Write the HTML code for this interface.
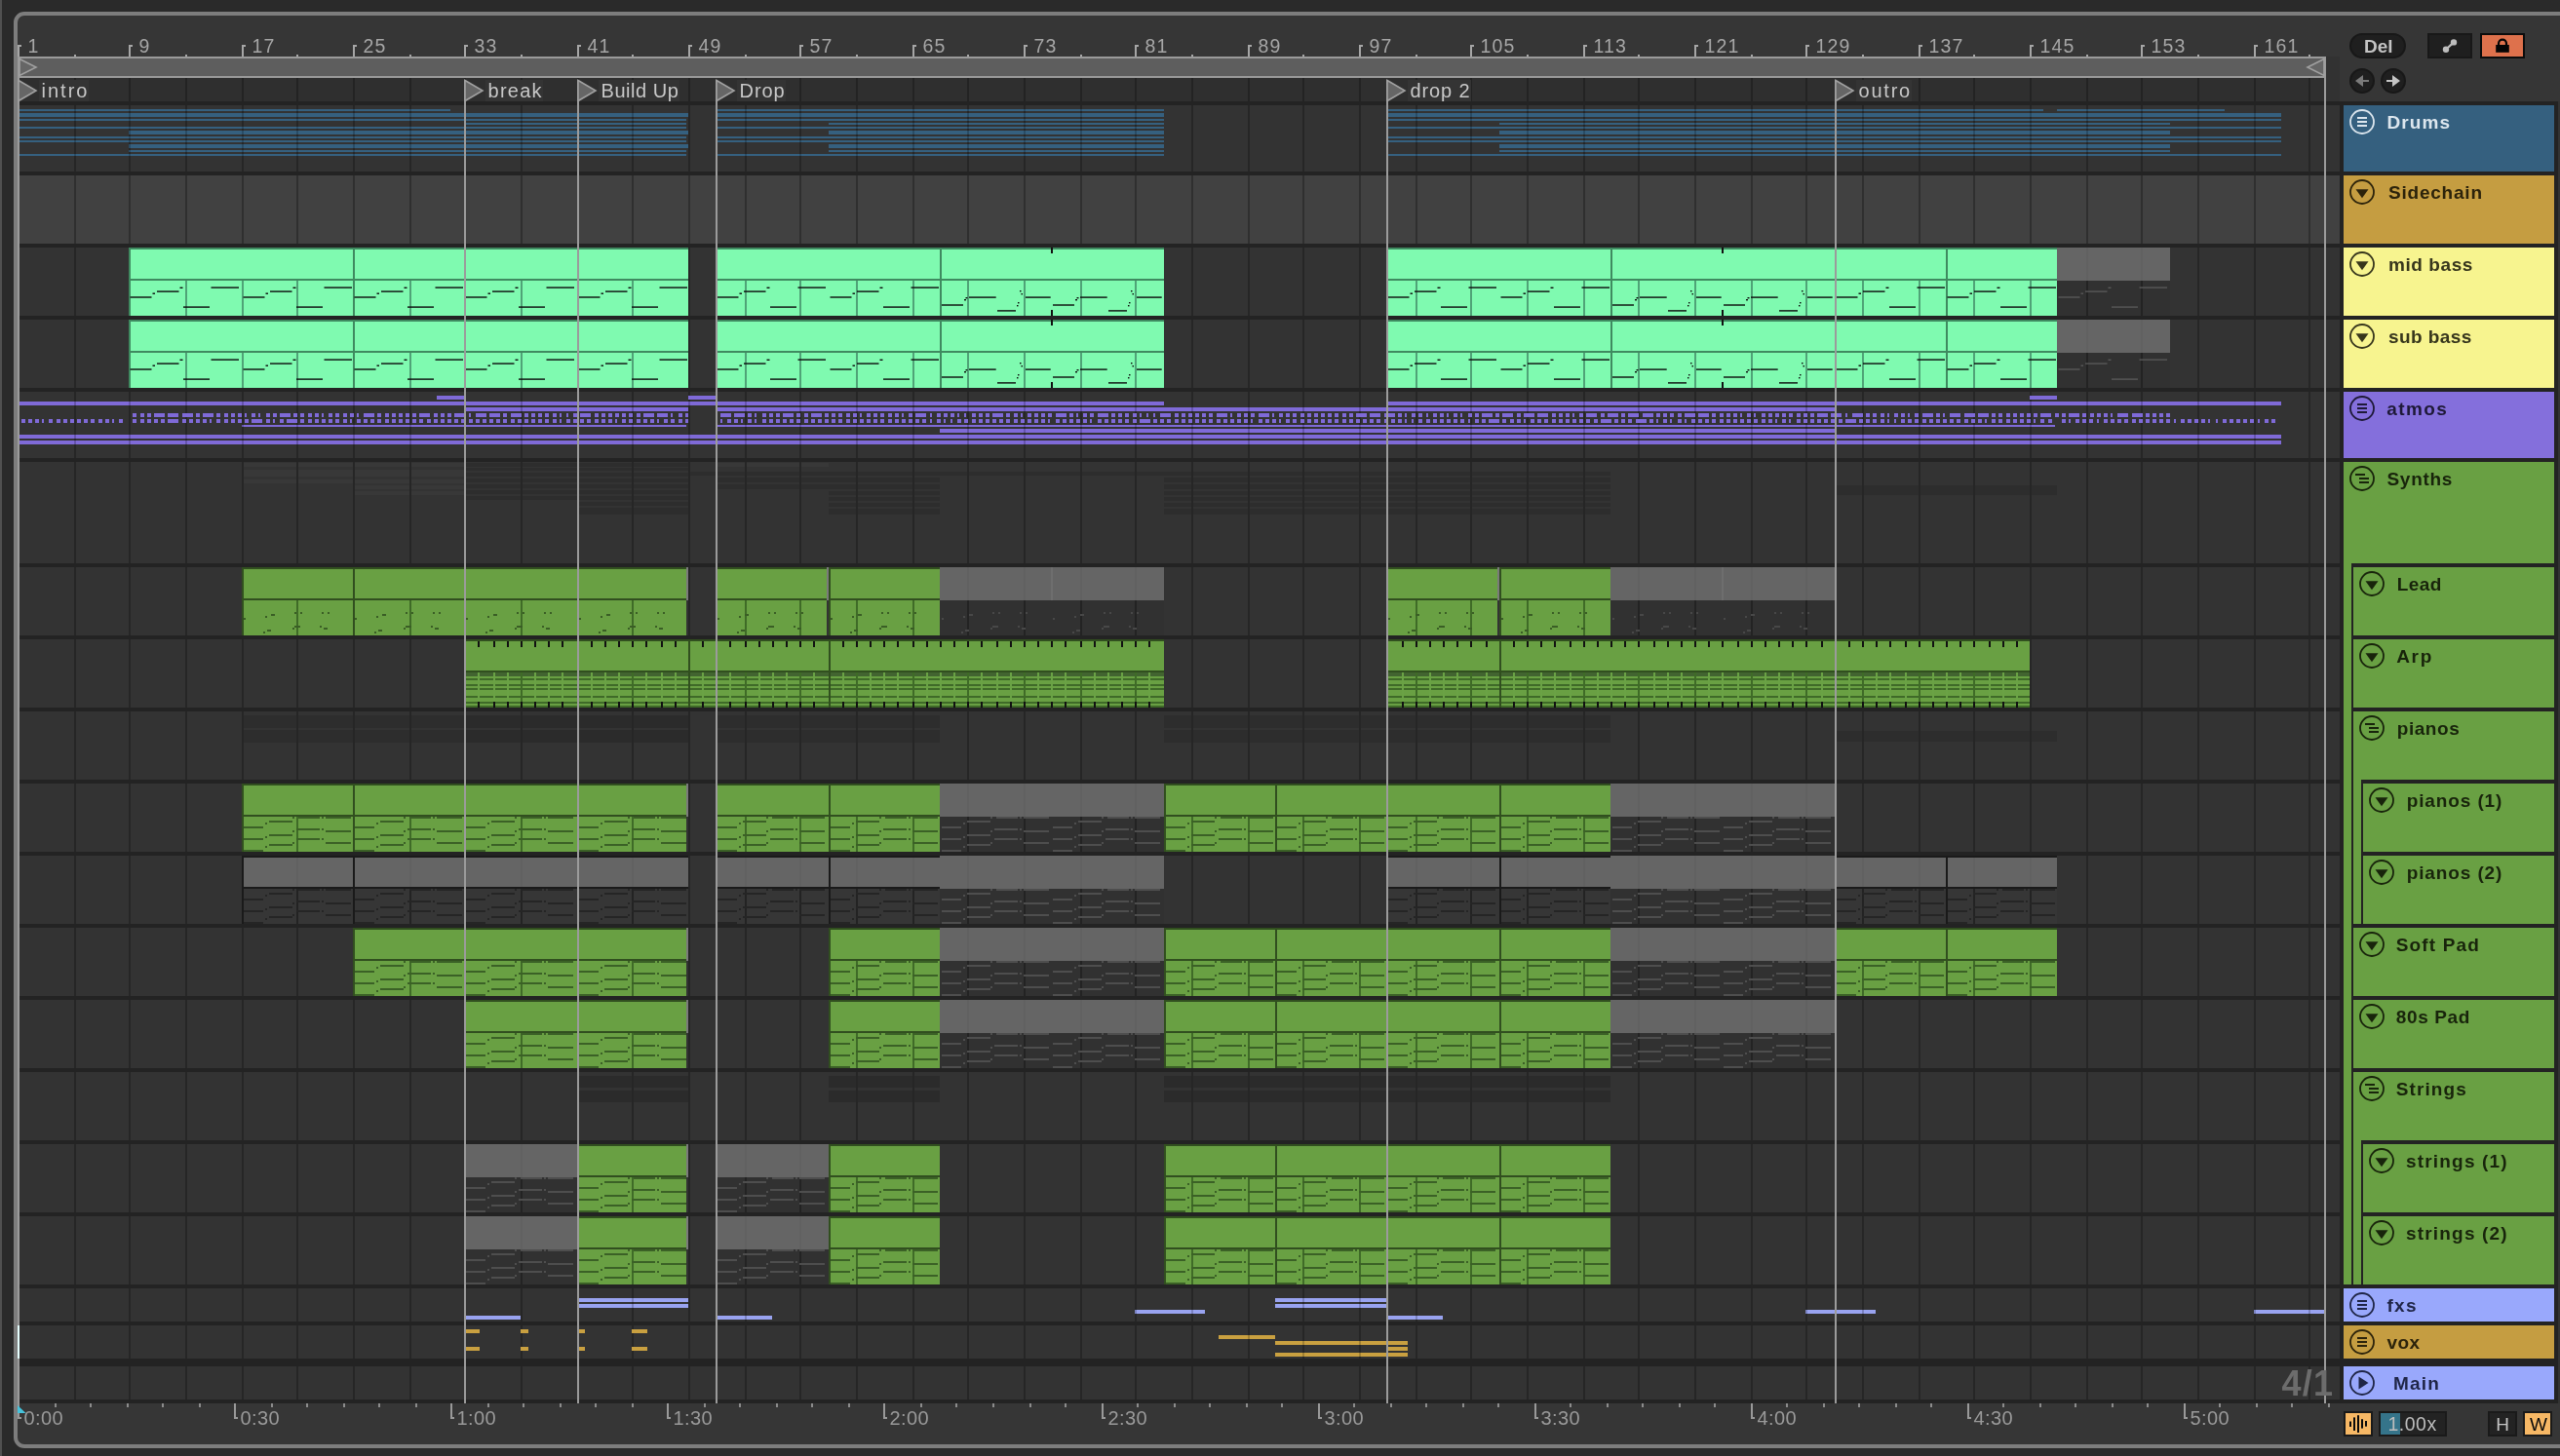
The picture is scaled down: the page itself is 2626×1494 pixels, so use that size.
<!DOCTYPE html>
<html><head><meta charset="utf-8"><title>Arrangement</title>
<style>
html,body{margin:0;padding:0;background:#2a2a2a}
body{width:2626px;height:1494px;overflow:hidden;position:relative;font-family:"Liberation Sans",sans-serif}
svg{position:absolute;left:0;top:0;display:block}
text{font-family:"Liberation Sans",sans-serif}
</style></head><body>
<svg width="2626" height="1494" viewBox="0 0 2626 1494" shape-rendering="crispEdges">
<defs><filter id="nf" x="0" y="0" width="2626" height="1494" filterUnits="userSpaceOnUse" color-interpolation-filters="sRGB"><feOffset dx="0" dy="0"/></filter></defs>
<path fill="#2a2a2a" d="M0 0h2626v1494h-2626z"/>
<path fill="#505050" d="M0 0h2v1494h-2z"/>
<rect x="16" y="14" width="2640" height="1470" rx="9" ry="9" fill="#363636" stroke="#7d7d7d" stroke-width="4" shape-rendering="geometricPrecision"/>
<path fill="#2f2f2f" d="M20 80h2380v24h-2380z"/>
<path fill="#323232" d="M2386 58h14v46h-14z"/>
<path fill="#232323" d="M20 104h2604v1336h-2604z"/>
<path fill="#333333" d="M2624 104h2v1336h-2zM20 108h2380v68h-2380z"/>
<path fill="#414141" d="M20 180h2380v70h-2380z"/>
<path fill="#333333" d="M20 254h2380v70h-2380zM20 328h2380v70h-2380zM20 402h2380v68h-2380zM20 474h2380v104h-2380zM20 582h2380v70h-2380zM20 656h2380v70h-2380zM20 730h2380v70h-2380zM20 804h2380v70h-2380zM20 878h2380v70h-2380zM20 952h2380v70h-2380zM20 1026h2380v70h-2380zM20 1100h2380v70h-2380zM20 1174h2380v70h-2380zM20 1248h2380v70h-2380zM20 1322h2380v34h-2380zM20 1360h2380v34h-2380zM20 1402h2380v34h-2380z"/>
<path fill="#383838" d="M248 475h228v4h-228zM248 482h228v7h-228zM248 492h228v4h-228zM362 498h114v4h-114zM362 504h114v4h-114z"/>
<path fill="#2d2d2d" d="M476 475h230v4h-230zM476 480h230v3h-230zM476 485h230v4h-230zM476 491h230v4h-230zM476 497h230v4h-230zM476 503h230v4h-230zM476 509h230v4h-230zM592 515h114v4h-114zM592 521h114v7h-114zM706 484h488v4h-488z"/>
<path fill="#383838" d="M734 475h116v4h-116z"/>
<path fill="#2d2d2d" d="M734 490h230v5h-230zM734 497h230v5h-230zM850 504h114v4h-114zM850 510h114v4h-114zM850 516h114v4h-114zM850 522h114v6h-114zM1194 484h458v4h-458zM1194 490h458v5h-458zM1194 497h458v5h-458zM1194 504h458v4h-458zM1194 510h458v4h-458zM1194 516h458v4h-458zM1194 522h458v6h-458zM1882 498h228v10h-228zM248 734h458v28h-458z"/>
<path fill="#333333" d="M248 747h458v2h-458z"/>
<path fill="#2d2d2d" d="M734 734h230v28h-230z"/>
<path fill="#333333" d="M734 747h230v2h-230z"/>
<path fill="#2d2d2d" d="M1194 734h458v28h-458z"/>
<path fill="#333333" d="M1194 747h458v2h-458z"/>
<path fill="#2b2b2b" d="M476 734h230v13h-230zM476 749h230v13h-230z"/>
<path fill="#2d2d2d" d="M1882 750h228v11h-228z"/>
<path fill="#2b2b2b" d="M592 1104h114v27h-114z"/>
<path fill="#333333" d="M592 1116h114v3h-114z"/>
<path fill="#2b2b2b" d="M850 1104h114v27h-114z"/>
<path fill="#333333" d="M850 1116h114v3h-114z"/>
<path fill="#2b2b2b" d="M1194 1104h458v27h-458z"/>
<path fill="#333333" d="M1194 1116h458v3h-458z"/>
<path fill="#232323" d="M76 80h2v24h-2z"/>
<path fill="#262626" d="M76 108h2v68h-2z"/>
<path fill="#2f2f2f" d="M76 180h2v70h-2z"/>
<path fill="#262626" d="M76 254h2v70h-2zM76 328h2v70h-2zM76 402h2v68h-2zM76 474h2v104h-2zM76 582h2v70h-2zM76 656h2v70h-2zM76 730h2v70h-2zM76 804h2v70h-2zM76 878h2v70h-2zM76 952h2v70h-2zM76 1026h2v70h-2zM76 1100h2v70h-2zM76 1174h2v70h-2zM76 1248h2v70h-2zM76 1322h2v34h-2zM76 1360h2v34h-2zM76 1402h2v34h-2z"/>
<path fill="#232323" d="M132 80h2v24h-2z"/>
<path fill="#262626" d="M132 108h2v68h-2z"/>
<path fill="#2f2f2f" d="M132 180h2v70h-2z"/>
<path fill="#262626" d="M132 254h2v70h-2zM132 328h2v70h-2zM132 402h2v68h-2zM132 474h2v104h-2zM132 582h2v70h-2zM132 656h2v70h-2zM132 730h2v70h-2zM132 804h2v70h-2zM132 878h2v70h-2zM132 952h2v70h-2zM132 1026h2v70h-2zM132 1100h2v70h-2zM132 1174h2v70h-2zM132 1248h2v70h-2zM132 1322h2v34h-2zM132 1360h2v34h-2zM132 1402h2v34h-2z"/>
<path fill="#232323" d="M190 80h2v24h-2z"/>
<path fill="#262626" d="M190 108h2v68h-2z"/>
<path fill="#2f2f2f" d="M190 180h2v70h-2z"/>
<path fill="#262626" d="M190 254h2v70h-2zM190 328h2v70h-2zM190 402h2v68h-2zM190 474h2v104h-2zM190 582h2v70h-2zM190 656h2v70h-2zM190 730h2v70h-2zM190 804h2v70h-2zM190 878h2v70h-2zM190 952h2v70h-2zM190 1026h2v70h-2zM190 1100h2v70h-2zM190 1174h2v70h-2zM190 1248h2v70h-2zM190 1322h2v34h-2zM190 1360h2v34h-2zM190 1402h2v34h-2z"/>
<path fill="#232323" d="M248 80h2v24h-2z"/>
<path fill="#262626" d="M248 108h2v68h-2z"/>
<path fill="#2f2f2f" d="M248 180h2v70h-2z"/>
<path fill="#262626" d="M248 254h2v70h-2zM248 328h2v70h-2zM248 402h2v68h-2zM248 474h2v104h-2zM248 582h2v70h-2zM248 656h2v70h-2zM248 730h2v70h-2zM248 804h2v70h-2zM248 878h2v70h-2zM248 952h2v70h-2zM248 1026h2v70h-2zM248 1100h2v70h-2zM248 1174h2v70h-2zM248 1248h2v70h-2zM248 1322h2v34h-2zM248 1360h2v34h-2zM248 1402h2v34h-2z"/>
<path fill="#232323" d="M304 80h2v24h-2z"/>
<path fill="#262626" d="M304 108h2v68h-2z"/>
<path fill="#2f2f2f" d="M304 180h2v70h-2z"/>
<path fill="#262626" d="M304 254h2v70h-2zM304 328h2v70h-2zM304 402h2v68h-2zM304 474h2v104h-2zM304 582h2v70h-2zM304 656h2v70h-2zM304 730h2v70h-2zM304 804h2v70h-2zM304 878h2v70h-2zM304 952h2v70h-2zM304 1026h2v70h-2zM304 1100h2v70h-2zM304 1174h2v70h-2zM304 1248h2v70h-2zM304 1322h2v34h-2zM304 1360h2v34h-2zM304 1402h2v34h-2z"/>
<path fill="#232323" d="M362 80h2v24h-2z"/>
<path fill="#262626" d="M362 108h2v68h-2z"/>
<path fill="#2f2f2f" d="M362 180h2v70h-2z"/>
<path fill="#262626" d="M362 254h2v70h-2zM362 328h2v70h-2zM362 402h2v68h-2zM362 474h2v104h-2zM362 582h2v70h-2zM362 656h2v70h-2zM362 730h2v70h-2zM362 804h2v70h-2zM362 878h2v70h-2zM362 952h2v70h-2zM362 1026h2v70h-2zM362 1100h2v70h-2zM362 1174h2v70h-2zM362 1248h2v70h-2zM362 1322h2v34h-2zM362 1360h2v34h-2zM362 1402h2v34h-2z"/>
<path fill="#232323" d="M420 80h2v24h-2z"/>
<path fill="#262626" d="M420 108h2v68h-2z"/>
<path fill="#2f2f2f" d="M420 180h2v70h-2z"/>
<path fill="#262626" d="M420 254h2v70h-2zM420 328h2v70h-2zM420 402h2v68h-2zM420 474h2v104h-2zM420 582h2v70h-2zM420 656h2v70h-2zM420 730h2v70h-2zM420 804h2v70h-2zM420 878h2v70h-2zM420 952h2v70h-2zM420 1026h2v70h-2zM420 1100h2v70h-2zM420 1174h2v70h-2zM420 1248h2v70h-2zM420 1322h2v34h-2zM420 1360h2v34h-2zM420 1402h2v34h-2z"/>
<path fill="#232323" d="M476 80h2v24h-2z"/>
<path fill="#262626" d="M476 108h2v68h-2z"/>
<path fill="#2f2f2f" d="M476 180h2v70h-2z"/>
<path fill="#262626" d="M476 254h2v70h-2zM476 328h2v70h-2zM476 402h2v68h-2zM476 474h2v104h-2zM476 582h2v70h-2zM476 656h2v70h-2zM476 730h2v70h-2zM476 804h2v70h-2zM476 878h2v70h-2zM476 952h2v70h-2zM476 1026h2v70h-2zM476 1100h2v70h-2zM476 1174h2v70h-2zM476 1248h2v70h-2zM476 1322h2v34h-2zM476 1360h2v34h-2zM476 1402h2v34h-2z"/>
<path fill="#232323" d="M534 80h2v24h-2z"/>
<path fill="#262626" d="M534 108h2v68h-2z"/>
<path fill="#2f2f2f" d="M534 180h2v70h-2z"/>
<path fill="#262626" d="M534 254h2v70h-2zM534 328h2v70h-2zM534 402h2v68h-2zM534 474h2v104h-2zM534 582h2v70h-2zM534 656h2v70h-2zM534 730h2v70h-2zM534 804h2v70h-2zM534 878h2v70h-2zM534 952h2v70h-2zM534 1026h2v70h-2zM534 1100h2v70h-2zM534 1174h2v70h-2zM534 1248h2v70h-2zM534 1322h2v34h-2zM534 1360h2v34h-2zM534 1402h2v34h-2z"/>
<path fill="#232323" d="M592 80h2v24h-2z"/>
<path fill="#262626" d="M592 108h2v68h-2z"/>
<path fill="#2f2f2f" d="M592 180h2v70h-2z"/>
<path fill="#262626" d="M592 254h2v70h-2zM592 328h2v70h-2zM592 402h2v68h-2zM592 474h2v104h-2zM592 582h2v70h-2zM592 656h2v70h-2zM592 730h2v70h-2zM592 804h2v70h-2zM592 878h2v70h-2zM592 952h2v70h-2zM592 1026h2v70h-2zM592 1100h2v70h-2zM592 1174h2v70h-2zM592 1248h2v70h-2zM592 1322h2v34h-2zM592 1360h2v34h-2zM592 1402h2v34h-2z"/>
<path fill="#232323" d="M648 80h2v24h-2z"/>
<path fill="#262626" d="M648 108h2v68h-2z"/>
<path fill="#2f2f2f" d="M648 180h2v70h-2z"/>
<path fill="#262626" d="M648 254h2v70h-2zM648 328h2v70h-2zM648 402h2v68h-2zM648 474h2v104h-2zM648 582h2v70h-2zM648 656h2v70h-2zM648 730h2v70h-2zM648 804h2v70h-2zM648 878h2v70h-2zM648 952h2v70h-2zM648 1026h2v70h-2zM648 1100h2v70h-2zM648 1174h2v70h-2zM648 1248h2v70h-2zM648 1322h2v34h-2zM648 1360h2v34h-2zM648 1402h2v34h-2z"/>
<path fill="#232323" d="M706 80h2v24h-2z"/>
<path fill="#262626" d="M706 108h2v68h-2z"/>
<path fill="#2f2f2f" d="M706 180h2v70h-2z"/>
<path fill="#262626" d="M706 254h2v70h-2zM706 328h2v70h-2zM706 402h2v68h-2zM706 474h2v104h-2zM706 582h2v70h-2zM706 656h2v70h-2zM706 730h2v70h-2zM706 804h2v70h-2zM706 878h2v70h-2zM706 952h2v70h-2zM706 1026h2v70h-2zM706 1100h2v70h-2zM706 1174h2v70h-2zM706 1248h2v70h-2zM706 1322h2v34h-2zM706 1360h2v34h-2zM706 1402h2v34h-2z"/>
<path fill="#232323" d="M764 80h2v24h-2z"/>
<path fill="#262626" d="M764 108h2v68h-2z"/>
<path fill="#2f2f2f" d="M764 180h2v70h-2z"/>
<path fill="#262626" d="M764 254h2v70h-2zM764 328h2v70h-2zM764 402h2v68h-2zM764 474h2v104h-2zM764 582h2v70h-2zM764 656h2v70h-2zM764 730h2v70h-2zM764 804h2v70h-2zM764 878h2v70h-2zM764 952h2v70h-2zM764 1026h2v70h-2zM764 1100h2v70h-2zM764 1174h2v70h-2zM764 1248h2v70h-2zM764 1322h2v34h-2zM764 1360h2v34h-2zM764 1402h2v34h-2z"/>
<path fill="#232323" d="M820 80h2v24h-2z"/>
<path fill="#262626" d="M820 108h2v68h-2z"/>
<path fill="#2f2f2f" d="M820 180h2v70h-2z"/>
<path fill="#262626" d="M820 254h2v70h-2zM820 328h2v70h-2zM820 402h2v68h-2zM820 474h2v104h-2zM820 582h2v70h-2zM820 656h2v70h-2zM820 730h2v70h-2zM820 804h2v70h-2zM820 878h2v70h-2zM820 952h2v70h-2zM820 1026h2v70h-2zM820 1100h2v70h-2zM820 1174h2v70h-2zM820 1248h2v70h-2zM820 1322h2v34h-2zM820 1360h2v34h-2zM820 1402h2v34h-2z"/>
<path fill="#232323" d="M878 80h2v24h-2z"/>
<path fill="#262626" d="M878 108h2v68h-2z"/>
<path fill="#2f2f2f" d="M878 180h2v70h-2z"/>
<path fill="#262626" d="M878 254h2v70h-2zM878 328h2v70h-2zM878 402h2v68h-2zM878 474h2v104h-2zM878 582h2v70h-2zM878 656h2v70h-2zM878 730h2v70h-2zM878 804h2v70h-2zM878 878h2v70h-2zM878 952h2v70h-2zM878 1026h2v70h-2zM878 1100h2v70h-2zM878 1174h2v70h-2zM878 1248h2v70h-2zM878 1322h2v34h-2zM878 1360h2v34h-2zM878 1402h2v34h-2z"/>
<path fill="#232323" d="M936 80h2v24h-2z"/>
<path fill="#262626" d="M936 108h2v68h-2z"/>
<path fill="#2f2f2f" d="M936 180h2v70h-2z"/>
<path fill="#262626" d="M936 254h2v70h-2zM936 328h2v70h-2zM936 402h2v68h-2zM936 474h2v104h-2zM936 582h2v70h-2zM936 656h2v70h-2zM936 730h2v70h-2zM936 804h2v70h-2zM936 878h2v70h-2zM936 952h2v70h-2zM936 1026h2v70h-2zM936 1100h2v70h-2zM936 1174h2v70h-2zM936 1248h2v70h-2zM936 1322h2v34h-2zM936 1360h2v34h-2zM936 1402h2v34h-2z"/>
<path fill="#232323" d="M992 80h2v24h-2z"/>
<path fill="#262626" d="M992 108h2v68h-2z"/>
<path fill="#2f2f2f" d="M992 180h2v70h-2z"/>
<path fill="#262626" d="M992 254h2v70h-2zM992 328h2v70h-2zM992 402h2v68h-2zM992 474h2v104h-2zM992 582h2v70h-2zM992 656h2v70h-2zM992 730h2v70h-2zM992 804h2v70h-2zM992 878h2v70h-2zM992 952h2v70h-2zM992 1026h2v70h-2zM992 1100h2v70h-2zM992 1174h2v70h-2zM992 1248h2v70h-2zM992 1322h2v34h-2zM992 1360h2v34h-2zM992 1402h2v34h-2z"/>
<path fill="#232323" d="M1050 80h2v24h-2z"/>
<path fill="#262626" d="M1050 108h2v68h-2z"/>
<path fill="#2f2f2f" d="M1050 180h2v70h-2z"/>
<path fill="#262626" d="M1050 254h2v70h-2zM1050 328h2v70h-2zM1050 402h2v68h-2zM1050 474h2v104h-2zM1050 582h2v70h-2zM1050 656h2v70h-2zM1050 730h2v70h-2zM1050 804h2v70h-2zM1050 878h2v70h-2zM1050 952h2v70h-2zM1050 1026h2v70h-2zM1050 1100h2v70h-2zM1050 1174h2v70h-2zM1050 1248h2v70h-2zM1050 1322h2v34h-2zM1050 1360h2v34h-2zM1050 1402h2v34h-2z"/>
<path fill="#232323" d="M1108 80h2v24h-2z"/>
<path fill="#262626" d="M1108 108h2v68h-2z"/>
<path fill="#2f2f2f" d="M1108 180h2v70h-2z"/>
<path fill="#262626" d="M1108 254h2v70h-2zM1108 328h2v70h-2zM1108 402h2v68h-2zM1108 474h2v104h-2zM1108 582h2v70h-2zM1108 656h2v70h-2zM1108 730h2v70h-2zM1108 804h2v70h-2zM1108 878h2v70h-2zM1108 952h2v70h-2zM1108 1026h2v70h-2zM1108 1100h2v70h-2zM1108 1174h2v70h-2zM1108 1248h2v70h-2zM1108 1322h2v34h-2zM1108 1360h2v34h-2zM1108 1402h2v34h-2z"/>
<path fill="#232323" d="M1164 80h2v24h-2z"/>
<path fill="#262626" d="M1164 108h2v68h-2z"/>
<path fill="#2f2f2f" d="M1164 180h2v70h-2z"/>
<path fill="#262626" d="M1164 254h2v70h-2zM1164 328h2v70h-2zM1164 402h2v68h-2zM1164 474h2v104h-2zM1164 582h2v70h-2zM1164 656h2v70h-2zM1164 730h2v70h-2zM1164 804h2v70h-2zM1164 878h2v70h-2zM1164 952h2v70h-2zM1164 1026h2v70h-2zM1164 1100h2v70h-2zM1164 1174h2v70h-2zM1164 1248h2v70h-2zM1164 1322h2v34h-2zM1164 1360h2v34h-2zM1164 1402h2v34h-2z"/>
<path fill="#232323" d="M1222 80h2v24h-2z"/>
<path fill="#262626" d="M1222 108h2v68h-2z"/>
<path fill="#2f2f2f" d="M1222 180h2v70h-2z"/>
<path fill="#262626" d="M1222 254h2v70h-2zM1222 328h2v70h-2zM1222 402h2v68h-2zM1222 474h2v104h-2zM1222 582h2v70h-2zM1222 656h2v70h-2zM1222 730h2v70h-2zM1222 804h2v70h-2zM1222 878h2v70h-2zM1222 952h2v70h-2zM1222 1026h2v70h-2zM1222 1100h2v70h-2zM1222 1174h2v70h-2zM1222 1248h2v70h-2zM1222 1322h2v34h-2zM1222 1360h2v34h-2zM1222 1402h2v34h-2z"/>
<path fill="#232323" d="M1280 80h2v24h-2z"/>
<path fill="#262626" d="M1280 108h2v68h-2z"/>
<path fill="#2f2f2f" d="M1280 180h2v70h-2z"/>
<path fill="#262626" d="M1280 254h2v70h-2zM1280 328h2v70h-2zM1280 402h2v68h-2zM1280 474h2v104h-2zM1280 582h2v70h-2zM1280 656h2v70h-2zM1280 730h2v70h-2zM1280 804h2v70h-2zM1280 878h2v70h-2zM1280 952h2v70h-2zM1280 1026h2v70h-2zM1280 1100h2v70h-2zM1280 1174h2v70h-2zM1280 1248h2v70h-2zM1280 1322h2v34h-2zM1280 1360h2v34h-2zM1280 1402h2v34h-2z"/>
<path fill="#232323" d="M1336 80h2v24h-2z"/>
<path fill="#262626" d="M1336 108h2v68h-2z"/>
<path fill="#2f2f2f" d="M1336 180h2v70h-2z"/>
<path fill="#262626" d="M1336 254h2v70h-2zM1336 328h2v70h-2zM1336 402h2v68h-2zM1336 474h2v104h-2zM1336 582h2v70h-2zM1336 656h2v70h-2zM1336 730h2v70h-2zM1336 804h2v70h-2zM1336 878h2v70h-2zM1336 952h2v70h-2zM1336 1026h2v70h-2zM1336 1100h2v70h-2zM1336 1174h2v70h-2zM1336 1248h2v70h-2zM1336 1322h2v34h-2zM1336 1360h2v34h-2zM1336 1402h2v34h-2z"/>
<path fill="#232323" d="M1394 80h2v24h-2z"/>
<path fill="#262626" d="M1394 108h2v68h-2z"/>
<path fill="#2f2f2f" d="M1394 180h2v70h-2z"/>
<path fill="#262626" d="M1394 254h2v70h-2zM1394 328h2v70h-2zM1394 402h2v68h-2zM1394 474h2v104h-2zM1394 582h2v70h-2zM1394 656h2v70h-2zM1394 730h2v70h-2zM1394 804h2v70h-2zM1394 878h2v70h-2zM1394 952h2v70h-2zM1394 1026h2v70h-2zM1394 1100h2v70h-2zM1394 1174h2v70h-2zM1394 1248h2v70h-2zM1394 1322h2v34h-2zM1394 1360h2v34h-2zM1394 1402h2v34h-2z"/>
<path fill="#232323" d="M1452 80h2v24h-2z"/>
<path fill="#262626" d="M1452 108h2v68h-2z"/>
<path fill="#2f2f2f" d="M1452 180h2v70h-2z"/>
<path fill="#262626" d="M1452 254h2v70h-2zM1452 328h2v70h-2zM1452 402h2v68h-2zM1452 474h2v104h-2zM1452 582h2v70h-2zM1452 656h2v70h-2zM1452 730h2v70h-2zM1452 804h2v70h-2zM1452 878h2v70h-2zM1452 952h2v70h-2zM1452 1026h2v70h-2zM1452 1100h2v70h-2zM1452 1174h2v70h-2zM1452 1248h2v70h-2zM1452 1322h2v34h-2zM1452 1360h2v34h-2zM1452 1402h2v34h-2z"/>
<path fill="#232323" d="M1508 80h2v24h-2z"/>
<path fill="#262626" d="M1508 108h2v68h-2z"/>
<path fill="#2f2f2f" d="M1508 180h2v70h-2z"/>
<path fill="#262626" d="M1508 254h2v70h-2zM1508 328h2v70h-2zM1508 402h2v68h-2zM1508 474h2v104h-2zM1508 582h2v70h-2zM1508 656h2v70h-2zM1508 730h2v70h-2zM1508 804h2v70h-2zM1508 878h2v70h-2zM1508 952h2v70h-2zM1508 1026h2v70h-2zM1508 1100h2v70h-2zM1508 1174h2v70h-2zM1508 1248h2v70h-2zM1508 1322h2v34h-2zM1508 1360h2v34h-2zM1508 1402h2v34h-2z"/>
<path fill="#232323" d="M1566 80h2v24h-2z"/>
<path fill="#262626" d="M1566 108h2v68h-2z"/>
<path fill="#2f2f2f" d="M1566 180h2v70h-2z"/>
<path fill="#262626" d="M1566 254h2v70h-2zM1566 328h2v70h-2zM1566 402h2v68h-2zM1566 474h2v104h-2zM1566 582h2v70h-2zM1566 656h2v70h-2zM1566 730h2v70h-2zM1566 804h2v70h-2zM1566 878h2v70h-2zM1566 952h2v70h-2zM1566 1026h2v70h-2zM1566 1100h2v70h-2zM1566 1174h2v70h-2zM1566 1248h2v70h-2zM1566 1322h2v34h-2zM1566 1360h2v34h-2zM1566 1402h2v34h-2z"/>
<path fill="#232323" d="M1624 80h2v24h-2z"/>
<path fill="#262626" d="M1624 108h2v68h-2z"/>
<path fill="#2f2f2f" d="M1624 180h2v70h-2z"/>
<path fill="#262626" d="M1624 254h2v70h-2zM1624 328h2v70h-2zM1624 402h2v68h-2zM1624 474h2v104h-2zM1624 582h2v70h-2zM1624 656h2v70h-2zM1624 730h2v70h-2zM1624 804h2v70h-2zM1624 878h2v70h-2zM1624 952h2v70h-2zM1624 1026h2v70h-2zM1624 1100h2v70h-2zM1624 1174h2v70h-2zM1624 1248h2v70h-2zM1624 1322h2v34h-2zM1624 1360h2v34h-2zM1624 1402h2v34h-2z"/>
<path fill="#232323" d="M1680 80h2v24h-2z"/>
<path fill="#262626" d="M1680 108h2v68h-2z"/>
<path fill="#2f2f2f" d="M1680 180h2v70h-2z"/>
<path fill="#262626" d="M1680 254h2v70h-2zM1680 328h2v70h-2zM1680 402h2v68h-2zM1680 474h2v104h-2zM1680 582h2v70h-2zM1680 656h2v70h-2zM1680 730h2v70h-2zM1680 804h2v70h-2zM1680 878h2v70h-2zM1680 952h2v70h-2zM1680 1026h2v70h-2zM1680 1100h2v70h-2zM1680 1174h2v70h-2zM1680 1248h2v70h-2zM1680 1322h2v34h-2zM1680 1360h2v34h-2zM1680 1402h2v34h-2z"/>
<path fill="#232323" d="M1738 80h2v24h-2z"/>
<path fill="#262626" d="M1738 108h2v68h-2z"/>
<path fill="#2f2f2f" d="M1738 180h2v70h-2z"/>
<path fill="#262626" d="M1738 254h2v70h-2zM1738 328h2v70h-2zM1738 402h2v68h-2zM1738 474h2v104h-2zM1738 582h2v70h-2zM1738 656h2v70h-2zM1738 730h2v70h-2zM1738 804h2v70h-2zM1738 878h2v70h-2zM1738 952h2v70h-2zM1738 1026h2v70h-2zM1738 1100h2v70h-2zM1738 1174h2v70h-2zM1738 1248h2v70h-2zM1738 1322h2v34h-2zM1738 1360h2v34h-2zM1738 1402h2v34h-2z"/>
<path fill="#232323" d="M1796 80h2v24h-2z"/>
<path fill="#262626" d="M1796 108h2v68h-2z"/>
<path fill="#2f2f2f" d="M1796 180h2v70h-2z"/>
<path fill="#262626" d="M1796 254h2v70h-2zM1796 328h2v70h-2zM1796 402h2v68h-2zM1796 474h2v104h-2zM1796 582h2v70h-2zM1796 656h2v70h-2zM1796 730h2v70h-2zM1796 804h2v70h-2zM1796 878h2v70h-2zM1796 952h2v70h-2zM1796 1026h2v70h-2zM1796 1100h2v70h-2zM1796 1174h2v70h-2zM1796 1248h2v70h-2zM1796 1322h2v34h-2zM1796 1360h2v34h-2zM1796 1402h2v34h-2z"/>
<path fill="#232323" d="M1852 80h2v24h-2z"/>
<path fill="#262626" d="M1852 108h2v68h-2z"/>
<path fill="#2f2f2f" d="M1852 180h2v70h-2z"/>
<path fill="#262626" d="M1852 254h2v70h-2zM1852 328h2v70h-2zM1852 402h2v68h-2zM1852 474h2v104h-2zM1852 582h2v70h-2zM1852 656h2v70h-2zM1852 730h2v70h-2zM1852 804h2v70h-2zM1852 878h2v70h-2zM1852 952h2v70h-2zM1852 1026h2v70h-2zM1852 1100h2v70h-2zM1852 1174h2v70h-2zM1852 1248h2v70h-2zM1852 1322h2v34h-2zM1852 1360h2v34h-2zM1852 1402h2v34h-2z"/>
<path fill="#232323" d="M1910 80h2v24h-2z"/>
<path fill="#262626" d="M1910 108h2v68h-2z"/>
<path fill="#2f2f2f" d="M1910 180h2v70h-2z"/>
<path fill="#262626" d="M1910 254h2v70h-2zM1910 328h2v70h-2zM1910 402h2v68h-2zM1910 474h2v104h-2zM1910 582h2v70h-2zM1910 656h2v70h-2zM1910 730h2v70h-2zM1910 804h2v70h-2zM1910 878h2v70h-2zM1910 952h2v70h-2zM1910 1026h2v70h-2zM1910 1100h2v70h-2zM1910 1174h2v70h-2zM1910 1248h2v70h-2zM1910 1322h2v34h-2zM1910 1360h2v34h-2zM1910 1402h2v34h-2z"/>
<path fill="#232323" d="M1968 80h2v24h-2z"/>
<path fill="#262626" d="M1968 108h2v68h-2z"/>
<path fill="#2f2f2f" d="M1968 180h2v70h-2z"/>
<path fill="#262626" d="M1968 254h2v70h-2zM1968 328h2v70h-2zM1968 402h2v68h-2zM1968 474h2v104h-2zM1968 582h2v70h-2zM1968 656h2v70h-2zM1968 730h2v70h-2zM1968 804h2v70h-2zM1968 878h2v70h-2zM1968 952h2v70h-2zM1968 1026h2v70h-2zM1968 1100h2v70h-2zM1968 1174h2v70h-2zM1968 1248h2v70h-2zM1968 1322h2v34h-2zM1968 1360h2v34h-2zM1968 1402h2v34h-2z"/>
<path fill="#232323" d="M2024 80h2v24h-2z"/>
<path fill="#262626" d="M2024 108h2v68h-2z"/>
<path fill="#2f2f2f" d="M2024 180h2v70h-2z"/>
<path fill="#262626" d="M2024 254h2v70h-2zM2024 328h2v70h-2zM2024 402h2v68h-2zM2024 474h2v104h-2zM2024 582h2v70h-2zM2024 656h2v70h-2zM2024 730h2v70h-2zM2024 804h2v70h-2zM2024 878h2v70h-2zM2024 952h2v70h-2zM2024 1026h2v70h-2zM2024 1100h2v70h-2zM2024 1174h2v70h-2zM2024 1248h2v70h-2zM2024 1322h2v34h-2zM2024 1360h2v34h-2zM2024 1402h2v34h-2z"/>
<path fill="#232323" d="M2082 80h2v24h-2z"/>
<path fill="#262626" d="M2082 108h2v68h-2z"/>
<path fill="#2f2f2f" d="M2082 180h2v70h-2z"/>
<path fill="#262626" d="M2082 254h2v70h-2zM2082 328h2v70h-2zM2082 402h2v68h-2zM2082 474h2v104h-2zM2082 582h2v70h-2zM2082 656h2v70h-2zM2082 730h2v70h-2zM2082 804h2v70h-2zM2082 878h2v70h-2zM2082 952h2v70h-2zM2082 1026h2v70h-2zM2082 1100h2v70h-2zM2082 1174h2v70h-2zM2082 1248h2v70h-2zM2082 1322h2v34h-2zM2082 1360h2v34h-2zM2082 1402h2v34h-2z"/>
<path fill="#232323" d="M2140 80h2v24h-2z"/>
<path fill="#262626" d="M2140 108h2v68h-2z"/>
<path fill="#2f2f2f" d="M2140 180h2v70h-2z"/>
<path fill="#262626" d="M2140 254h2v70h-2zM2140 328h2v70h-2zM2140 402h2v68h-2zM2140 474h2v104h-2zM2140 582h2v70h-2zM2140 656h2v70h-2zM2140 730h2v70h-2zM2140 804h2v70h-2zM2140 878h2v70h-2zM2140 952h2v70h-2zM2140 1026h2v70h-2zM2140 1100h2v70h-2zM2140 1174h2v70h-2zM2140 1248h2v70h-2zM2140 1322h2v34h-2zM2140 1360h2v34h-2zM2140 1402h2v34h-2z"/>
<path fill="#232323" d="M2196 80h2v24h-2z"/>
<path fill="#262626" d="M2196 108h2v68h-2z"/>
<path fill="#2f2f2f" d="M2196 180h2v70h-2z"/>
<path fill="#262626" d="M2196 254h2v70h-2zM2196 328h2v70h-2zM2196 402h2v68h-2zM2196 474h2v104h-2zM2196 582h2v70h-2zM2196 656h2v70h-2zM2196 730h2v70h-2zM2196 804h2v70h-2zM2196 878h2v70h-2zM2196 952h2v70h-2zM2196 1026h2v70h-2zM2196 1100h2v70h-2zM2196 1174h2v70h-2zM2196 1248h2v70h-2zM2196 1322h2v34h-2zM2196 1360h2v34h-2zM2196 1402h2v34h-2z"/>
<path fill="#232323" d="M2254 80h2v24h-2z"/>
<path fill="#262626" d="M2254 108h2v68h-2z"/>
<path fill="#2f2f2f" d="M2254 180h2v70h-2z"/>
<path fill="#262626" d="M2254 254h2v70h-2zM2254 328h2v70h-2zM2254 402h2v68h-2zM2254 474h2v104h-2zM2254 582h2v70h-2zM2254 656h2v70h-2zM2254 730h2v70h-2zM2254 804h2v70h-2zM2254 878h2v70h-2zM2254 952h2v70h-2zM2254 1026h2v70h-2zM2254 1100h2v70h-2zM2254 1174h2v70h-2zM2254 1248h2v70h-2zM2254 1322h2v34h-2zM2254 1360h2v34h-2zM2254 1402h2v34h-2z"/>
<path fill="#232323" d="M2312 80h2v24h-2z"/>
<path fill="#262626" d="M2312 108h2v68h-2z"/>
<path fill="#2f2f2f" d="M2312 180h2v70h-2z"/>
<path fill="#262626" d="M2312 254h2v70h-2zM2312 328h2v70h-2zM2312 402h2v68h-2zM2312 474h2v104h-2zM2312 582h2v70h-2zM2312 656h2v70h-2zM2312 730h2v70h-2zM2312 804h2v70h-2zM2312 878h2v70h-2zM2312 952h2v70h-2zM2312 1026h2v70h-2zM2312 1100h2v70h-2zM2312 1174h2v70h-2zM2312 1248h2v70h-2zM2312 1322h2v34h-2zM2312 1360h2v34h-2zM2312 1402h2v34h-2z"/>
<path fill="#232323" d="M2368 80h2v24h-2z"/>
<path fill="#262626" d="M2368 108h2v68h-2z"/>
<path fill="#2f2f2f" d="M2368 180h2v70h-2z"/>
<path fill="#262626" d="M2368 254h2v70h-2zM2368 328h2v70h-2zM2368 402h2v68h-2zM2368 474h2v104h-2zM2368 582h2v70h-2zM2368 656h2v70h-2zM2368 730h2v70h-2zM2368 804h2v70h-2zM2368 878h2v70h-2zM2368 952h2v70h-2zM2368 1026h2v70h-2zM2368 1100h2v70h-2zM2368 1174h2v70h-2zM2368 1248h2v70h-2zM2368 1322h2v34h-2zM2368 1360h2v34h-2zM2368 1402h2v34h-2z"/>
<path fill="#3f8a60" d="M132 254h230v70h-230z"/>
<path fill="#7ffab0" d="M134 256h228v30h-228zM134 288h228v36h-228z"/>
<path fill="#4fa377" d="M190 288h2v36h-2zM248 288h2v36h-2zM304 288h2v36h-2z"/>
<path fill="#3f8a60" d="M362 254h344v70h-344z"/>
<path fill="#7ffab0" d="M364 256h342v30h-342zM364 288h342v36h-342z"/>
<path fill="#4fa377" d="M420 288h2v36h-2zM476 288h2v36h-2zM534 288h2v36h-2zM592 288h2v36h-2zM648 288h2v36h-2z"/>
<path fill="#3f8a60" d="M734 254h230v70h-230z"/>
<path fill="#7ffab0" d="M736 256h228v30h-228zM736 288h228v36h-228z"/>
<path fill="#4fa377" d="M764 288h2v36h-2zM820 288h2v36h-2zM878 288h2v36h-2zM936 288h2v36h-2z"/>
<path fill="#3f8a60" d="M1422 254h230v70h-230z"/>
<path fill="#7ffab0" d="M1424 256h228v30h-228zM1424 288h228v36h-228z"/>
<path fill="#4fa377" d="M1452 288h2v36h-2zM1508 288h2v36h-2zM1566 288h2v36h-2zM1624 288h2v36h-2z"/>
<path fill="#3f8a60" d="M1882 254h114v70h-114z"/>
<path fill="#7ffab0" d="M1884 256h112v30h-112zM1884 288h112v36h-112z"/>
<path fill="#4fa377" d="M1910 288h2v36h-2zM1968 288h2v36h-2z"/>
<path fill="#3f8a60" d="M1996 254h114v70h-114z"/>
<path fill="#7ffab0" d="M1998 256h112v30h-112zM1998 288h112v36h-112z"/>
<path fill="#4fa377" d="M2024 288h2v36h-2zM2082 288h2v36h-2z"/>
<path fill="#3f8a60" d="M964 254h230v70h-230z"/>
<path fill="#7ffab0" d="M966 256h228v30h-228zM966 288h228v36h-228z"/>
<path fill="#4fa377" d="M992 288h2v36h-2zM1050 288h2v36h-2zM1108 288h2v36h-2zM1164 288h2v36h-2z"/>
<path fill="#111111" d="M1078 254h2v6h-2zM1078 318h2v6h-2z"/>
<path fill="#3f8a60" d="M1652 254h230v70h-230z"/>
<path fill="#7ffab0" d="M1654 256h228v30h-228zM1654 288h228v36h-228z"/>
<path fill="#4fa377" d="M1680 288h2v36h-2zM1738 288h2v36h-2zM1796 288h2v36h-2zM1852 288h2v36h-2z"/>
<path fill="#111111" d="M1766 254h2v6h-2zM1766 318h2v6h-2z"/>
<path fill="#656565" d="M2110 254h116v34h-116z"/>
<path fill="#616161" d="M2140 254h2v34h-2zM2196 254h2v34h-2z"/>
<path fill="#313131" d="M2110 288h116v36h-116z"/>
<path fill="#232323" d="M2140 288h2v36h-2zM2196 288h2v36h-2z"/>
<path fill="#3f8a60" d="M132 328h230v70h-230z"/>
<path fill="#7ffab0" d="M134 330h228v30h-228zM134 362h228v36h-228z"/>
<path fill="#4fa377" d="M190 362h2v36h-2zM248 362h2v36h-2zM304 362h2v36h-2z"/>
<path fill="#3f8a60" d="M362 328h344v70h-344z"/>
<path fill="#7ffab0" d="M364 330h342v30h-342zM364 362h342v36h-342z"/>
<path fill="#4fa377" d="M420 362h2v36h-2zM476 362h2v36h-2zM534 362h2v36h-2zM592 362h2v36h-2zM648 362h2v36h-2z"/>
<path fill="#3f8a60" d="M734 328h230v70h-230z"/>
<path fill="#7ffab0" d="M736 330h228v30h-228zM736 362h228v36h-228z"/>
<path fill="#4fa377" d="M764 362h2v36h-2zM820 362h2v36h-2zM878 362h2v36h-2zM936 362h2v36h-2z"/>
<path fill="#3f8a60" d="M1422 328h230v70h-230z"/>
<path fill="#7ffab0" d="M1424 330h228v30h-228zM1424 362h228v36h-228z"/>
<path fill="#4fa377" d="M1452 362h2v36h-2zM1508 362h2v36h-2zM1566 362h2v36h-2zM1624 362h2v36h-2z"/>
<path fill="#3f8a60" d="M1882 328h114v70h-114z"/>
<path fill="#7ffab0" d="M1884 330h112v30h-112zM1884 362h112v36h-112z"/>
<path fill="#4fa377" d="M1910 362h2v36h-2zM1968 362h2v36h-2z"/>
<path fill="#3f8a60" d="M1996 328h114v70h-114z"/>
<path fill="#7ffab0" d="M1998 330h112v30h-112zM1998 362h112v36h-112z"/>
<path fill="#4fa377" d="M2024 362h2v36h-2zM2082 362h2v36h-2z"/>
<path fill="#3f8a60" d="M964 328h230v70h-230z"/>
<path fill="#7ffab0" d="M966 330h228v30h-228zM966 362h228v36h-228z"/>
<path fill="#4fa377" d="M992 362h2v36h-2zM1050 362h2v36h-2zM1108 362h2v36h-2zM1164 362h2v36h-2z"/>
<path fill="#111111" d="M1078 328h2v6h-2zM1078 392h2v6h-2z"/>
<path fill="#3f8a60" d="M1652 328h230v70h-230z"/>
<path fill="#7ffab0" d="M1654 330h228v30h-228zM1654 362h228v36h-228z"/>
<path fill="#4fa377" d="M1680 362h2v36h-2zM1738 362h2v36h-2zM1796 362h2v36h-2zM1852 362h2v36h-2z"/>
<path fill="#111111" d="M1766 328h2v6h-2zM1766 392h2v6h-2z"/>
<path fill="#656565" d="M2110 328h116v34h-116z"/>
<path fill="#616161" d="M2140 328h2v34h-2zM2196 328h2v34h-2z"/>
<path fill="#313131" d="M2110 362h116v36h-116z"/>
<path fill="#232323" d="M2140 362h2v36h-2zM2196 362h2v36h-2z"/>
<path fill="#314f1f" d="M248 582h114v70h-114z"/>
<path fill="#69a043" d="M250 584h112v30h-112zM250 616h112v36h-112z"/>
<path fill="#3f6b27" d="M304 616h2v36h-2z"/>
<path fill="#3a5e25" d="M250 634h2v2h-2zM272 632h2v2h-2zM278 630h2v2h-2zM280 630h2v2h-2zM302 628h2v2h-2zM308 628h2v2h-2zM330 628h2v2h-2zM336 628h2v2h-2zM270 648h2v2h-2zM274 646h2v2h-2zM276 646h2v2h-2zM300 644h2v2h-2zM302 642h2v2h-2zM304 642h2v2h-2zM306 642h2v2h-2zM328 642h2v2h-2zM332 644h2v2h-2zM334 644h2v2h-2z"/>
<path fill="#314f1f" d="M362 582h342v70h-342z"/>
<path fill="#69a043" d="M364 584h340v30h-340zM364 616h340v36h-340z"/>
<path fill="#3f6b27" d="M420 616h2v36h-2zM476 616h2v36h-2zM534 616h2v36h-2zM592 616h2v36h-2zM648 616h2v36h-2z"/>
<path fill="#3a5e25" d="M364 634h2v2h-2zM386 632h2v2h-2zM392 630h2v2h-2zM394 630h2v2h-2zM416 628h2v2h-2zM422 628h2v2h-2zM444 628h2v2h-2zM450 628h2v2h-2zM384 648h2v2h-2zM388 646h2v2h-2zM390 646h2v2h-2zM414 644h2v2h-2zM416 642h2v2h-2zM418 642h2v2h-2zM420 642h2v2h-2zM442 642h2v2h-2zM446 644h2v2h-2zM448 644h2v2h-2zM478 634h2v2h-2zM500 632h2v2h-2zM506 630h2v2h-2zM508 630h2v2h-2zM530 628h2v2h-2zM536 628h2v2h-2zM558 628h2v2h-2zM564 628h2v2h-2zM498 648h2v2h-2zM502 646h2v2h-2zM504 646h2v2h-2zM528 644h2v2h-2zM530 642h2v2h-2zM532 642h2v2h-2zM534 642h2v2h-2zM556 642h2v2h-2zM560 644h2v2h-2zM562 644h2v2h-2zM594 634h2v2h-2zM616 632h2v2h-2zM622 630h2v2h-2zM624 630h2v2h-2zM646 628h2v2h-2zM652 628h2v2h-2zM674 628h2v2h-2zM680 628h2v2h-2zM614 648h2v2h-2zM618 646h2v2h-2zM620 646h2v2h-2zM644 644h2v2h-2zM646 642h2v2h-2zM648 642h2v2h-2zM650 642h2v2h-2zM672 642h2v2h-2zM676 644h2v2h-2zM678 644h2v2h-2z"/>
<path fill="#314f1f" d="M734 582h114v70h-114z"/>
<path fill="#69a043" d="M736 584h112v30h-112zM736 616h112v36h-112z"/>
<path fill="#3f6b27" d="M764 616h2v36h-2zM820 616h2v36h-2z"/>
<path fill="#3a5e25" d="M736 634h2v2h-2zM758 632h2v2h-2zM764 630h2v2h-2zM766 630h2v2h-2zM788 628h2v2h-2zM794 628h2v2h-2zM816 628h2v2h-2zM822 628h2v2h-2zM756 648h2v2h-2zM760 646h2v2h-2zM762 646h2v2h-2zM786 644h2v2h-2zM788 642h2v2h-2zM790 642h2v2h-2zM792 642h2v2h-2zM814 642h2v2h-2zM818 644h2v2h-2zM820 644h2v2h-2z"/>
<path fill="#314f1f" d="M850 582h114v70h-114z"/>
<path fill="#69a043" d="M852 584h112v30h-112zM852 616h112v36h-112z"/>
<path fill="#3f6b27" d="M878 616h2v36h-2zM936 616h2v36h-2z"/>
<path fill="#3a5e25" d="M852 634h2v2h-2zM874 632h2v2h-2zM880 630h2v2h-2zM882 630h2v2h-2zM904 628h2v2h-2zM910 628h2v2h-2zM932 628h2v2h-2zM938 628h2v2h-2zM872 648h2v2h-2zM876 646h2v2h-2zM878 646h2v2h-2zM902 644h2v2h-2zM904 642h2v2h-2zM906 642h2v2h-2zM908 642h2v2h-2zM930 642h2v2h-2zM934 644h2v2h-2zM936 644h2v2h-2z"/>
<path fill="#314f1f" d="M1422 582h114v70h-114z"/>
<path fill="#69a043" d="M1424 584h112v30h-112zM1424 616h112v36h-112z"/>
<path fill="#3f6b27" d="M1452 616h2v36h-2zM1508 616h2v36h-2z"/>
<path fill="#3a5e25" d="M1424 634h2v2h-2zM1446 632h2v2h-2zM1452 630h2v2h-2zM1454 630h2v2h-2zM1476 628h2v2h-2zM1482 628h2v2h-2zM1504 628h2v2h-2zM1510 628h2v2h-2zM1444 648h2v2h-2zM1448 646h2v2h-2zM1450 646h2v2h-2zM1474 644h2v2h-2zM1476 642h2v2h-2zM1478 642h2v2h-2zM1480 642h2v2h-2zM1502 642h2v2h-2zM1506 644h2v2h-2zM1508 644h2v2h-2z"/>
<path fill="#314f1f" d="M1538 582h114v70h-114z"/>
<path fill="#69a043" d="M1540 584h112v30h-112zM1540 616h112v36h-112z"/>
<path fill="#3f6b27" d="M1566 616h2v36h-2zM1624 616h2v36h-2z"/>
<path fill="#3a5e25" d="M1540 634h2v2h-2zM1562 632h2v2h-2zM1568 630h2v2h-2zM1570 630h2v2h-2zM1592 628h2v2h-2zM1598 628h2v2h-2zM1620 628h2v2h-2zM1626 628h2v2h-2zM1560 648h2v2h-2zM1564 646h2v2h-2zM1566 646h2v2h-2zM1590 644h2v2h-2zM1592 642h2v2h-2zM1594 642h2v2h-2zM1596 642h2v2h-2zM1618 642h2v2h-2zM1622 644h2v2h-2zM1624 644h2v2h-2z"/>
<path fill="#7a7a7a" d="M704 582h2v34h-2zM848 582h2v34h-2zM1536 582h2v34h-2z"/>
<path fill="#656565" d="M964 582h230v34h-230z"/>
<path fill="#616161" d="M992 582h2v34h-2zM1050 582h2v34h-2zM1108 582h2v34h-2zM1164 582h2v34h-2z"/>
<path fill="#6e6e6e" d="M1078 582h2v34h-2z"/>
<path fill="#313131" d="M964 616h230v36h-230z"/>
<path fill="#232323" d="M992 616h2v36h-2zM1050 616h2v36h-2zM1108 616h2v36h-2zM1164 616h2v36h-2z"/>
<path fill="#484848" d="M966 634h2v2h-2zM988 632h2v2h-2zM994 630h2v2h-2zM996 630h2v2h-2zM1018 628h2v2h-2zM1024 628h2v2h-2zM1046 628h2v2h-2zM1052 628h2v2h-2zM986 648h2v2h-2zM990 646h2v2h-2zM992 646h2v2h-2zM1016 644h2v2h-2zM1018 642h2v2h-2zM1020 642h2v2h-2zM1022 642h2v2h-2zM1044 642h2v2h-2zM1048 644h2v2h-2zM1050 644h2v2h-2zM1080 634h2v2h-2zM1102 632h2v2h-2zM1108 630h2v2h-2zM1110 630h2v2h-2zM1132 628h2v2h-2zM1138 628h2v2h-2zM1160 628h2v2h-2zM1166 628h2v2h-2zM1100 648h2v2h-2zM1104 646h2v2h-2zM1106 646h2v2h-2zM1130 644h2v2h-2zM1132 642h2v2h-2zM1134 642h2v2h-2zM1136 642h2v2h-2zM1158 642h2v2h-2zM1162 644h2v2h-2zM1164 644h2v2h-2z"/>
<path fill="#656565" d="M1652 582h230v34h-230z"/>
<path fill="#616161" d="M1680 582h2v34h-2zM1738 582h2v34h-2zM1796 582h2v34h-2zM1852 582h2v34h-2z"/>
<path fill="#6e6e6e" d="M1766 582h2v34h-2z"/>
<path fill="#313131" d="M1652 616h230v36h-230z"/>
<path fill="#232323" d="M1680 616h2v36h-2zM1738 616h2v36h-2zM1796 616h2v36h-2zM1852 616h2v36h-2z"/>
<path fill="#484848" d="M1654 634h2v2h-2zM1676 632h2v2h-2zM1682 630h2v2h-2zM1684 630h2v2h-2zM1706 628h2v2h-2zM1712 628h2v2h-2zM1734 628h2v2h-2zM1740 628h2v2h-2zM1674 648h2v2h-2zM1678 646h2v2h-2zM1680 646h2v2h-2zM1704 644h2v2h-2zM1706 642h2v2h-2zM1708 642h2v2h-2zM1710 642h2v2h-2zM1732 642h2v2h-2zM1736 644h2v2h-2zM1738 644h2v2h-2zM1768 634h2v2h-2zM1790 632h2v2h-2zM1796 630h2v2h-2zM1798 630h2v2h-2zM1820 628h2v2h-2zM1826 628h2v2h-2zM1848 628h2v2h-2zM1854 628h2v2h-2zM1788 648h2v2h-2zM1792 646h2v2h-2zM1794 646h2v2h-2zM1818 644h2v2h-2zM1820 642h2v2h-2zM1822 642h2v2h-2zM1824 642h2v2h-2zM1846 642h2v2h-2zM1850 644h2v2h-2zM1852 644h2v2h-2z"/>
<path fill="#314f1f" d="M476 656h230v70h-230z"/>
<path fill="#69a043" d="M478 658h228v30h-228z"/>
<path fill="#426430" d="M478 690h228v4h-228z"/>
<path fill="#69a043" d="M478 694h228v32h-228z"/>
<path fill="#3f6a28" d="M478 696h228v2h-228zM478 702h228v2h-228zM478 706h228v2h-228zM478 714h228v2h-228zM478 720h228v2h-228zM478 724h228v2h-228z"/>
<path fill="#6aa245" d="M490 690h2v36h-2z"/>
<path fill="#111111" d="M490 658h2v6h-2zM490 720h2v6h-2z"/>
<path fill="#6aa245" d="M506 690h2v36h-2z"/>
<path fill="#111111" d="M506 658h2v6h-2zM506 720h2v6h-2z"/>
<path fill="#6aa245" d="M520 690h2v36h-2z"/>
<path fill="#111111" d="M520 658h2v6h-2zM520 720h2v6h-2z"/>
<path fill="#3f6b27" d="M534 690h2v36h-2z"/>
<path fill="#111111" d="M534 658h2v6h-2zM534 720h2v6h-2z"/>
<path fill="#6aa245" d="M548 690h2v36h-2z"/>
<path fill="#111111" d="M548 658h2v6h-2zM548 720h2v6h-2z"/>
<path fill="#6aa245" d="M562 690h2v36h-2z"/>
<path fill="#111111" d="M562 658h2v6h-2zM562 720h2v6h-2z"/>
<path fill="#6aa245" d="M576 690h2v36h-2z"/>
<path fill="#111111" d="M576 658h2v6h-2zM576 720h2v6h-2z"/>
<path fill="#3f6b27" d="M592 690h2v36h-2z"/>
<path fill="#111111" d="M592 658h2v6h-2zM592 720h2v6h-2z"/>
<path fill="#6aa245" d="M606 690h2v36h-2z"/>
<path fill="#111111" d="M606 658h2v6h-2zM606 720h2v6h-2z"/>
<path fill="#6aa245" d="M620 690h2v36h-2z"/>
<path fill="#111111" d="M620 658h2v6h-2zM620 720h2v6h-2z"/>
<path fill="#6aa245" d="M634 690h2v36h-2z"/>
<path fill="#111111" d="M634 658h2v6h-2zM634 720h2v6h-2z"/>
<path fill="#3f6b27" d="M648 690h2v36h-2z"/>
<path fill="#111111" d="M648 658h2v6h-2zM648 720h2v6h-2z"/>
<path fill="#6aa245" d="M662 690h2v36h-2z"/>
<path fill="#111111" d="M662 658h2v6h-2zM662 720h2v6h-2z"/>
<path fill="#6aa245" d="M678 690h2v36h-2z"/>
<path fill="#111111" d="M678 658h2v6h-2zM678 720h2v6h-2z"/>
<path fill="#6aa245" d="M692 690h2v36h-2z"/>
<path fill="#111111" d="M692 658h2v6h-2zM692 720h2v6h-2z"/>
<path fill="#314f1f" d="M706 656h144v70h-144z"/>
<path fill="#69a043" d="M708 658h142v30h-142z"/>
<path fill="#426430" d="M708 690h142v4h-142z"/>
<path fill="#69a043" d="M708 694h142v32h-142z"/>
<path fill="#3f6a28" d="M708 696h142v2h-142zM708 702h142v2h-142zM708 706h142v2h-142zM708 714h142v2h-142zM708 720h142v2h-142zM708 724h142v2h-142z"/>
<path fill="#6aa245" d="M720 690h2v36h-2z"/>
<path fill="#111111" d="M720 658h2v6h-2zM720 720h2v6h-2z"/>
<path fill="#6aa245" d="M734 690h2v36h-2z"/>
<path fill="#111111" d="M734 658h2v6h-2zM734 720h2v6h-2z"/>
<path fill="#6aa245" d="M748 690h2v36h-2z"/>
<path fill="#111111" d="M748 658h2v6h-2zM748 720h2v6h-2z"/>
<path fill="#3f6b27" d="M764 690h2v36h-2z"/>
<path fill="#111111" d="M764 658h2v6h-2zM764 720h2v6h-2z"/>
<path fill="#6aa245" d="M778 690h2v36h-2z"/>
<path fill="#111111" d="M778 658h2v6h-2zM778 720h2v6h-2z"/>
<path fill="#6aa245" d="M792 690h2v36h-2z"/>
<path fill="#111111" d="M792 658h2v6h-2zM792 720h2v6h-2z"/>
<path fill="#6aa245" d="M806 690h2v36h-2z"/>
<path fill="#111111" d="M806 658h2v6h-2zM806 720h2v6h-2z"/>
<path fill="#3f6b27" d="M820 690h2v36h-2z"/>
<path fill="#111111" d="M820 658h2v6h-2zM820 720h2v6h-2z"/>
<path fill="#6aa245" d="M834 690h2v36h-2z"/>
<path fill="#111111" d="M834 658h2v6h-2zM834 720h2v6h-2z"/>
<path fill="#314f1f" d="M850 656h344v70h-344z"/>
<path fill="#69a043" d="M852 658h342v30h-342z"/>
<path fill="#426430" d="M852 690h342v4h-342z"/>
<path fill="#69a043" d="M852 694h342v32h-342z"/>
<path fill="#3f6a28" d="M852 696h342v2h-342zM852 702h342v2h-342zM852 706h342v2h-342zM852 714h342v2h-342zM852 720h342v2h-342zM852 724h342v2h-342z"/>
<path fill="#6aa245" d="M864 690h2v36h-2z"/>
<path fill="#111111" d="M864 658h2v6h-2zM864 720h2v6h-2z"/>
<path fill="#3f6b27" d="M878 690h2v36h-2z"/>
<path fill="#111111" d="M878 658h2v6h-2zM878 720h2v6h-2z"/>
<path fill="#6aa245" d="M892 690h2v36h-2z"/>
<path fill="#111111" d="M892 658h2v6h-2zM892 720h2v6h-2z"/>
<path fill="#6aa245" d="M906 690h2v36h-2z"/>
<path fill="#111111" d="M906 658h2v6h-2zM906 720h2v6h-2z"/>
<path fill="#6aa245" d="M920 690h2v36h-2z"/>
<path fill="#111111" d="M920 658h2v6h-2zM920 720h2v6h-2z"/>
<path fill="#3f6b27" d="M936 690h2v36h-2z"/>
<path fill="#111111" d="M936 658h2v6h-2zM936 720h2v6h-2z"/>
<path fill="#6aa245" d="M950 690h2v36h-2z"/>
<path fill="#111111" d="M950 658h2v6h-2zM950 720h2v6h-2z"/>
<path fill="#6aa245" d="M964 690h2v36h-2z"/>
<path fill="#111111" d="M964 658h2v6h-2zM964 720h2v6h-2z"/>
<path fill="#6aa245" d="M978 690h2v36h-2z"/>
<path fill="#111111" d="M978 658h2v6h-2zM978 720h2v6h-2z"/>
<path fill="#3f6b27" d="M992 690h2v36h-2z"/>
<path fill="#111111" d="M992 658h2v6h-2zM992 720h2v6h-2z"/>
<path fill="#6aa245" d="M1006 690h2v36h-2z"/>
<path fill="#111111" d="M1006 658h2v6h-2zM1006 720h2v6h-2z"/>
<path fill="#6aa245" d="M1022 690h2v36h-2z"/>
<path fill="#111111" d="M1022 658h2v6h-2zM1022 720h2v6h-2z"/>
<path fill="#6aa245" d="M1036 690h2v36h-2z"/>
<path fill="#111111" d="M1036 658h2v6h-2zM1036 720h2v6h-2z"/>
<path fill="#3f6b27" d="M1050 690h2v36h-2z"/>
<path fill="#111111" d="M1050 658h2v6h-2zM1050 720h2v6h-2z"/>
<path fill="#6aa245" d="M1064 690h2v36h-2z"/>
<path fill="#111111" d="M1064 658h2v6h-2zM1064 720h2v6h-2z"/>
<path fill="#6aa245" d="M1078 690h2v36h-2z"/>
<path fill="#111111" d="M1078 658h2v6h-2zM1078 720h2v6h-2z"/>
<path fill="#6aa245" d="M1092 690h2v36h-2z"/>
<path fill="#111111" d="M1092 658h2v6h-2zM1092 720h2v6h-2z"/>
<path fill="#3f6b27" d="M1108 690h2v36h-2z"/>
<path fill="#111111" d="M1108 658h2v6h-2zM1108 720h2v6h-2z"/>
<path fill="#6aa245" d="M1122 690h2v36h-2z"/>
<path fill="#111111" d="M1122 658h2v6h-2zM1122 720h2v6h-2z"/>
<path fill="#6aa245" d="M1136 690h2v36h-2z"/>
<path fill="#111111" d="M1136 658h2v6h-2zM1136 720h2v6h-2z"/>
<path fill="#6aa245" d="M1150 690h2v36h-2z"/>
<path fill="#111111" d="M1150 658h2v6h-2zM1150 720h2v6h-2z"/>
<path fill="#3f6b27" d="M1164 690h2v36h-2z"/>
<path fill="#111111" d="M1164 658h2v6h-2zM1164 720h2v6h-2z"/>
<path fill="#6aa245" d="M1178 690h2v36h-2z"/>
<path fill="#111111" d="M1178 658h2v6h-2zM1178 720h2v6h-2z"/>
<path fill="#314f1f" d="M1422 656h116v70h-116z"/>
<path fill="#69a043" d="M1424 658h114v30h-114z"/>
<path fill="#426430" d="M1424 690h114v4h-114z"/>
<path fill="#69a043" d="M1424 694h114v32h-114z"/>
<path fill="#3f6a28" d="M1424 696h114v2h-114zM1424 702h114v2h-114zM1424 706h114v2h-114zM1424 714h114v2h-114zM1424 720h114v2h-114zM1424 724h114v2h-114z"/>
<path fill="#6aa245" d="M1438 690h2v36h-2z"/>
<path fill="#111111" d="M1438 658h2v6h-2zM1438 720h2v6h-2z"/>
<path fill="#3f6b27" d="M1452 690h2v36h-2z"/>
<path fill="#111111" d="M1452 658h2v6h-2zM1452 720h2v6h-2z"/>
<path fill="#6aa245" d="M1466 690h2v36h-2z"/>
<path fill="#111111" d="M1466 658h2v6h-2zM1466 720h2v6h-2z"/>
<path fill="#6aa245" d="M1480 690h2v36h-2z"/>
<path fill="#111111" d="M1480 658h2v6h-2zM1480 720h2v6h-2z"/>
<path fill="#6aa245" d="M1494 690h2v36h-2z"/>
<path fill="#111111" d="M1494 658h2v6h-2zM1494 720h2v6h-2z"/>
<path fill="#3f6b27" d="M1508 690h2v36h-2z"/>
<path fill="#111111" d="M1508 658h2v6h-2zM1508 720h2v6h-2z"/>
<path fill="#6aa245" d="M1524 690h2v36h-2z"/>
<path fill="#111111" d="M1524 658h2v6h-2zM1524 720h2v6h-2z"/>
<path fill="#314f1f" d="M1538 656h344v70h-344z"/>
<path fill="#69a043" d="M1540 658h342v30h-342z"/>
<path fill="#426430" d="M1540 690h342v4h-342z"/>
<path fill="#69a043" d="M1540 694h342v32h-342z"/>
<path fill="#3f6a28" d="M1540 696h342v2h-342zM1540 702h342v2h-342zM1540 706h342v2h-342zM1540 714h342v2h-342zM1540 720h342v2h-342zM1540 724h342v2h-342z"/>
<path fill="#6aa245" d="M1552 690h2v36h-2z"/>
<path fill="#111111" d="M1552 658h2v6h-2zM1552 720h2v6h-2z"/>
<path fill="#3f6b27" d="M1566 690h2v36h-2z"/>
<path fill="#111111" d="M1566 658h2v6h-2zM1566 720h2v6h-2z"/>
<path fill="#6aa245" d="M1580 690h2v36h-2z"/>
<path fill="#111111" d="M1580 658h2v6h-2zM1580 720h2v6h-2z"/>
<path fill="#6aa245" d="M1594 690h2v36h-2z"/>
<path fill="#111111" d="M1594 658h2v6h-2zM1594 720h2v6h-2z"/>
<path fill="#6aa245" d="M1610 690h2v36h-2z"/>
<path fill="#111111" d="M1610 658h2v6h-2zM1610 720h2v6h-2z"/>
<path fill="#3f6b27" d="M1624 690h2v36h-2z"/>
<path fill="#111111" d="M1624 658h2v6h-2zM1624 720h2v6h-2z"/>
<path fill="#6aa245" d="M1638 690h2v36h-2z"/>
<path fill="#111111" d="M1638 658h2v6h-2zM1638 720h2v6h-2z"/>
<path fill="#6aa245" d="M1652 690h2v36h-2z"/>
<path fill="#111111" d="M1652 658h2v6h-2zM1652 720h2v6h-2z"/>
<path fill="#6aa245" d="M1666 690h2v36h-2z"/>
<path fill="#111111" d="M1666 658h2v6h-2zM1666 720h2v6h-2z"/>
<path fill="#3f6b27" d="M1680 690h2v36h-2z"/>
<path fill="#111111" d="M1680 658h2v6h-2zM1680 720h2v6h-2z"/>
<path fill="#6aa245" d="M1696 690h2v36h-2z"/>
<path fill="#111111" d="M1696 658h2v6h-2zM1696 720h2v6h-2z"/>
<path fill="#6aa245" d="M1710 690h2v36h-2z"/>
<path fill="#111111" d="M1710 658h2v6h-2zM1710 720h2v6h-2z"/>
<path fill="#6aa245" d="M1724 690h2v36h-2z"/>
<path fill="#111111" d="M1724 658h2v6h-2zM1724 720h2v6h-2z"/>
<path fill="#3f6b27" d="M1738 690h2v36h-2z"/>
<path fill="#111111" d="M1738 658h2v6h-2zM1738 720h2v6h-2z"/>
<path fill="#6aa245" d="M1752 690h2v36h-2z"/>
<path fill="#111111" d="M1752 658h2v6h-2zM1752 720h2v6h-2z"/>
<path fill="#6aa245" d="M1766 690h2v36h-2z"/>
<path fill="#111111" d="M1766 658h2v6h-2zM1766 720h2v6h-2z"/>
<path fill="#6aa245" d="M1782 690h2v36h-2z"/>
<path fill="#111111" d="M1782 658h2v6h-2zM1782 720h2v6h-2z"/>
<path fill="#3f6b27" d="M1796 690h2v36h-2z"/>
<path fill="#111111" d="M1796 658h2v6h-2zM1796 720h2v6h-2z"/>
<path fill="#6aa245" d="M1810 690h2v36h-2z"/>
<path fill="#111111" d="M1810 658h2v6h-2zM1810 720h2v6h-2z"/>
<path fill="#6aa245" d="M1824 690h2v36h-2z"/>
<path fill="#111111" d="M1824 658h2v6h-2zM1824 720h2v6h-2z"/>
<path fill="#6aa245" d="M1838 690h2v36h-2z"/>
<path fill="#111111" d="M1838 658h2v6h-2zM1838 720h2v6h-2z"/>
<path fill="#3f6b27" d="M1852 690h2v36h-2z"/>
<path fill="#111111" d="M1852 658h2v6h-2zM1852 720h2v6h-2z"/>
<path fill="#6aa245" d="M1868 690h2v36h-2z"/>
<path fill="#111111" d="M1868 658h2v6h-2zM1868 720h2v6h-2z"/>
<path fill="#314f1f" d="M1882 656h200v70h-200z"/>
<path fill="#69a043" d="M1884 658h198v30h-198z"/>
<path fill="#426430" d="M1884 690h198v4h-198z"/>
<path fill="#69a043" d="M1884 694h198v32h-198z"/>
<path fill="#3f6a28" d="M1884 696h198v2h-198zM1884 702h198v2h-198zM1884 706h198v2h-198zM1884 714h198v2h-198zM1884 720h198v2h-198zM1884 724h198v2h-198z"/>
<path fill="#6aa245" d="M1896 690h2v36h-2z"/>
<path fill="#111111" d="M1896 658h2v6h-2zM1896 720h2v6h-2z"/>
<path fill="#3f6b27" d="M1910 690h2v36h-2z"/>
<path fill="#111111" d="M1910 658h2v6h-2zM1910 720h2v6h-2z"/>
<path fill="#6aa245" d="M1924 690h2v36h-2z"/>
<path fill="#111111" d="M1924 658h2v6h-2zM1924 720h2v6h-2z"/>
<path fill="#6aa245" d="M1938 690h2v36h-2z"/>
<path fill="#111111" d="M1938 658h2v6h-2zM1938 720h2v6h-2z"/>
<path fill="#6aa245" d="M1954 690h2v36h-2z"/>
<path fill="#111111" d="M1954 658h2v6h-2zM1954 720h2v6h-2z"/>
<path fill="#3f6b27" d="M1968 690h2v36h-2z"/>
<path fill="#111111" d="M1968 658h2v6h-2zM1968 720h2v6h-2z"/>
<path fill="#6aa245" d="M1982 690h2v36h-2z"/>
<path fill="#111111" d="M1982 658h2v6h-2zM1982 720h2v6h-2z"/>
<path fill="#6aa245" d="M1996 690h2v36h-2z"/>
<path fill="#111111" d="M1996 658h2v6h-2zM1996 720h2v6h-2z"/>
<path fill="#6aa245" d="M2010 690h2v36h-2z"/>
<path fill="#111111" d="M2010 658h2v6h-2zM2010 720h2v6h-2z"/>
<path fill="#3f6b27" d="M2024 690h2v36h-2z"/>
<path fill="#111111" d="M2024 658h2v6h-2zM2024 720h2v6h-2z"/>
<path fill="#6aa245" d="M2040 690h2v36h-2z"/>
<path fill="#111111" d="M2040 658h2v6h-2zM2040 720h2v6h-2z"/>
<path fill="#6aa245" d="M2054 690h2v36h-2z"/>
<path fill="#111111" d="M2054 658h2v6h-2zM2054 720h2v6h-2z"/>
<path fill="#6aa245" d="M2068 690h2v36h-2z"/>
<path fill="#111111" d="M2068 658h2v6h-2zM2068 720h2v6h-2z"/>
<path fill="#314f1f" d="M248 804h114v70h-114z"/>
<path fill="#69a043" d="M250 806h112v30h-112zM250 838h112v36h-112z"/>
<path fill="#3f6b27" d="M304 838h2v36h-2z"/>
<path fill="#3b6126" d="M300 838h2v2h-2zM306 838h22v2h-22zM330 838h2v2h-2zM334 838h26v2h-26zM276 842h24v2h-24zM272 844h2v2h-2zM250 848h20v2h-20zM304 850h24v2h-24zM330 850h2v2h-2zM334 852h26v2h-26zM300 852h2v2h-2zM276 856h24v2h-24zM272 858h2v2h-2zM250 860h20v2h-20zM304 860h24v2h-24zM330 860h2v2h-2zM334 864h26v2h-26zM300 864h2v2h-2zM276 866h24v2h-24zM272 868h2v2h-2zM250 872h20v2h-20z"/>
<path fill="#314f1f" d="M362 804h342v70h-342z"/>
<path fill="#69a043" d="M364 806h340v30h-340zM364 838h340v36h-340z"/>
<path fill="#3f6b27" d="M420 838h2v36h-2zM476 838h2v36h-2zM534 838h2v36h-2zM592 838h2v36h-2zM648 838h2v36h-2z"/>
<path fill="#3b6126" d="M414 838h2v2h-2zM420 838h22v2h-22zM444 838h2v2h-2zM448 838h26v2h-26zM390 842h24v2h-24zM386 844h2v2h-2zM364 848h20v2h-20zM418 850h24v2h-24zM444 850h2v2h-2zM448 852h26v2h-26zM414 852h2v2h-2zM390 856h24v2h-24zM386 858h2v2h-2zM364 860h20v2h-20zM418 860h24v2h-24zM444 860h2v2h-2zM448 864h26v2h-26zM414 864h2v2h-2zM390 866h24v2h-24zM386 868h2v2h-2zM364 872h20v2h-20zM528 838h2v2h-2zM534 838h22v2h-22zM558 838h2v2h-2zM562 838h26v2h-26zM504 842h24v2h-24zM500 844h2v2h-2zM478 848h20v2h-20zM532 850h24v2h-24zM558 850h2v2h-2zM562 852h26v2h-26zM528 852h2v2h-2zM504 856h24v2h-24zM500 858h2v2h-2zM478 860h20v2h-20zM532 860h24v2h-24zM558 860h2v2h-2zM562 864h26v2h-26zM528 864h2v2h-2zM504 866h24v2h-24zM500 868h2v2h-2zM478 872h20v2h-20zM644 838h2v2h-2zM650 838h22v2h-22zM674 838h2v2h-2zM678 838h26v2h-26zM620 842h24v2h-24zM616 844h2v2h-2zM594 848h20v2h-20zM648 850h24v2h-24zM674 850h2v2h-2zM678 852h26v2h-26zM644 852h2v2h-2zM620 856h24v2h-24zM616 858h2v2h-2zM594 860h20v2h-20zM648 860h24v2h-24zM674 860h2v2h-2zM678 864h26v2h-26zM644 864h2v2h-2zM620 866h24v2h-24zM616 868h2v2h-2zM594 872h20v2h-20z"/>
<path fill="#314f1f" d="M734 804h116v70h-116z"/>
<path fill="#69a043" d="M736 806h114v30h-114zM736 838h114v36h-114z"/>
<path fill="#3f6b27" d="M764 838h2v36h-2zM820 838h2v36h-2z"/>
<path fill="#3b6126" d="M786 838h2v2h-2zM792 838h22v2h-22zM816 838h2v2h-2zM820 838h26v2h-26zM762 842h24v2h-24zM758 844h2v2h-2zM736 848h20v2h-20zM790 850h24v2h-24zM816 850h2v2h-2zM820 852h26v2h-26zM786 852h2v2h-2zM762 856h24v2h-24zM758 858h2v2h-2zM736 860h20v2h-20zM790 860h24v2h-24zM816 860h2v2h-2zM820 864h26v2h-26zM786 864h2v2h-2zM762 866h24v2h-24zM758 868h2v2h-2zM736 872h20v2h-20z"/>
<path fill="#314f1f" d="M850 804h114v70h-114z"/>
<path fill="#69a043" d="M852 806h112v30h-112zM852 838h112v36h-112z"/>
<path fill="#3f6b27" d="M878 838h2v36h-2zM936 838h2v36h-2z"/>
<path fill="#3b6126" d="M902 838h2v2h-2zM908 838h22v2h-22zM932 838h2v2h-2zM936 838h26v2h-26zM878 842h24v2h-24zM874 844h2v2h-2zM852 848h20v2h-20zM906 850h24v2h-24zM932 850h2v2h-2zM936 852h26v2h-26zM902 852h2v2h-2zM878 856h24v2h-24zM874 858h2v2h-2zM852 860h20v2h-20zM906 860h24v2h-24zM932 860h2v2h-2zM936 864h26v2h-26zM902 864h2v2h-2zM878 866h24v2h-24zM874 868h2v2h-2zM852 872h20v2h-20z"/>
<path fill="#314f1f" d="M1194 804h114v70h-114z"/>
<path fill="#69a043" d="M1196 806h112v30h-112zM1196 838h112v36h-112z"/>
<path fill="#3f6b27" d="M1222 838h2v36h-2zM1280 838h2v36h-2z"/>
<path fill="#3b6126" d="M1246 838h2v2h-2zM1252 838h22v2h-22zM1276 838h2v2h-2zM1280 838h26v2h-26zM1222 842h24v2h-24zM1218 844h2v2h-2zM1196 848h20v2h-20zM1250 850h24v2h-24zM1276 850h2v2h-2zM1280 852h26v2h-26zM1246 852h2v2h-2zM1222 856h24v2h-24zM1218 858h2v2h-2zM1196 860h20v2h-20zM1250 860h24v2h-24zM1276 860h2v2h-2zM1280 864h26v2h-26zM1246 864h2v2h-2zM1222 866h24v2h-24zM1218 868h2v2h-2zM1196 872h20v2h-20z"/>
<path fill="#314f1f" d="M1308 804h230v70h-230z"/>
<path fill="#69a043" d="M1310 806h228v30h-228zM1310 838h228v36h-228z"/>
<path fill="#3f6b27" d="M1336 838h2v36h-2zM1394 838h2v36h-2zM1452 838h2v36h-2zM1508 838h2v36h-2z"/>
<path fill="#3b6126" d="M1360 838h2v2h-2zM1366 838h22v2h-22zM1390 838h2v2h-2zM1394 838h26v2h-26zM1336 842h24v2h-24zM1332 844h2v2h-2zM1310 848h20v2h-20zM1364 850h24v2h-24zM1390 850h2v2h-2zM1394 852h26v2h-26zM1360 852h2v2h-2zM1336 856h24v2h-24zM1332 858h2v2h-2zM1310 860h20v2h-20zM1364 860h24v2h-24zM1390 860h2v2h-2zM1394 864h26v2h-26zM1360 864h2v2h-2zM1336 866h24v2h-24zM1332 868h2v2h-2zM1310 872h20v2h-20zM1474 838h2v2h-2zM1480 838h22v2h-22zM1504 838h2v2h-2zM1508 838h26v2h-26zM1450 842h24v2h-24zM1446 844h2v2h-2zM1424 848h20v2h-20zM1478 850h24v2h-24zM1504 850h2v2h-2zM1508 852h26v2h-26zM1474 852h2v2h-2zM1450 856h24v2h-24zM1446 858h2v2h-2zM1424 860h20v2h-20zM1478 860h24v2h-24zM1504 860h2v2h-2zM1508 864h26v2h-26zM1474 864h2v2h-2zM1450 866h24v2h-24zM1446 868h2v2h-2zM1424 872h20v2h-20z"/>
<path fill="#314f1f" d="M1538 804h114v70h-114z"/>
<path fill="#69a043" d="M1540 806h112v30h-112zM1540 838h112v36h-112z"/>
<path fill="#3f6b27" d="M1566 838h2v36h-2zM1624 838h2v36h-2z"/>
<path fill="#3b6126" d="M1590 838h2v2h-2zM1596 838h22v2h-22zM1620 838h2v2h-2zM1624 838h26v2h-26zM1566 842h24v2h-24zM1562 844h2v2h-2zM1540 848h20v2h-20zM1594 850h24v2h-24zM1620 850h2v2h-2zM1624 852h26v2h-26zM1590 852h2v2h-2zM1566 856h24v2h-24zM1562 858h2v2h-2zM1540 860h20v2h-20zM1594 860h24v2h-24zM1620 860h2v2h-2zM1624 864h26v2h-26zM1590 864h2v2h-2zM1566 866h24v2h-24zM1562 868h2v2h-2zM1540 872h20v2h-20z"/>
<path fill="#656565" d="M964 804h230v34h-230z"/>
<path fill="#616161" d="M992 804h2v34h-2zM1050 804h2v34h-2zM1108 804h2v34h-2zM1164 804h2v34h-2z"/>
<path fill="#313131" d="M964 838h230v36h-230z"/>
<path fill="#232323" d="M992 838h2v36h-2zM1050 838h2v36h-2zM1108 838h2v36h-2zM1164 838h2v36h-2z"/>
<path fill="#4e4e4e" d="M1016 838h2v2h-2zM1022 838h22v2h-22zM1046 838h2v2h-2zM1050 838h26v2h-26zM992 842h24v2h-24zM988 844h2v2h-2zM966 848h20v2h-20zM1020 850h24v2h-24zM1046 850h2v2h-2zM1050 852h26v2h-26zM1016 852h2v2h-2zM992 856h24v2h-24zM988 858h2v2h-2zM966 860h20v2h-20zM1020 860h24v2h-24zM1046 860h2v2h-2zM1050 864h26v2h-26zM1016 864h2v2h-2zM992 866h24v2h-24zM988 868h2v2h-2zM966 872h20v2h-20zM1130 838h2v2h-2zM1136 838h22v2h-22zM1160 838h2v2h-2zM1164 838h26v2h-26zM1106 842h24v2h-24zM1102 844h2v2h-2zM1080 848h20v2h-20zM1134 850h24v2h-24zM1160 850h2v2h-2zM1164 852h26v2h-26zM1130 852h2v2h-2zM1106 856h24v2h-24zM1102 858h2v2h-2zM1080 860h20v2h-20zM1134 860h24v2h-24zM1160 860h2v2h-2zM1164 864h26v2h-26zM1130 864h2v2h-2zM1106 866h24v2h-24zM1102 868h2v2h-2zM1080 872h20v2h-20z"/>
<path fill="#656565" d="M1652 804h230v34h-230z"/>
<path fill="#616161" d="M1680 804h2v34h-2zM1738 804h2v34h-2zM1796 804h2v34h-2zM1852 804h2v34h-2z"/>
<path fill="#313131" d="M1652 838h230v36h-230z"/>
<path fill="#232323" d="M1680 838h2v36h-2zM1738 838h2v36h-2zM1796 838h2v36h-2zM1852 838h2v36h-2z"/>
<path fill="#4e4e4e" d="M1704 838h2v2h-2zM1710 838h22v2h-22zM1734 838h2v2h-2zM1738 838h26v2h-26zM1680 842h24v2h-24zM1676 844h2v2h-2zM1654 848h20v2h-20zM1708 850h24v2h-24zM1734 850h2v2h-2zM1738 852h26v2h-26zM1704 852h2v2h-2zM1680 856h24v2h-24zM1676 858h2v2h-2zM1654 860h20v2h-20zM1708 860h24v2h-24zM1734 860h2v2h-2zM1738 864h26v2h-26zM1704 864h2v2h-2zM1680 866h24v2h-24zM1676 868h2v2h-2zM1654 872h20v2h-20zM1818 838h2v2h-2zM1824 838h22v2h-22zM1848 838h2v2h-2zM1852 838h26v2h-26zM1794 842h24v2h-24zM1790 844h2v2h-2zM1768 848h20v2h-20zM1822 850h24v2h-24zM1848 850h2v2h-2zM1852 852h26v2h-26zM1818 852h2v2h-2zM1794 856h24v2h-24zM1790 858h2v2h-2zM1768 860h20v2h-20zM1822 860h24v2h-24zM1848 860h2v2h-2zM1852 864h26v2h-26zM1818 864h2v2h-2zM1794 866h24v2h-24zM1790 868h2v2h-2zM1768 872h20v2h-20z"/>
<path fill="#7a7a7a" d="M704 804h2v34h-2z"/>
<path fill="#1a1a1a" d="M248 878h114v70h-114z"/>
<path fill="#656565" d="M250 880h112v30h-112z"/>
<path fill="#616161" d="M304 880h2v30h-2z"/>
<path fill="#363636" d="M250 912h112v36h-112z"/>
<path fill="#232323" d="M304 912h2v36h-2z"/>
<path fill="#252525" d="M300 912h2v2h-2zM306 912h22v2h-22zM330 912h2v2h-2zM334 912h26v2h-26zM276 916h24v2h-24zM272 918h2v2h-2zM250 922h20v2h-20zM304 924h24v2h-24zM330 924h2v2h-2zM334 926h26v2h-26zM300 926h2v2h-2zM276 930h24v2h-24zM272 932h2v2h-2zM250 934h20v2h-20zM304 934h24v2h-24zM330 934h2v2h-2zM334 938h26v2h-26zM300 938h2v2h-2zM276 940h24v2h-24zM272 942h2v2h-2zM250 946h20v2h-20z"/>
<path fill="#1a1a1a" d="M362 878h344v70h-344z"/>
<path fill="#656565" d="M364 880h342v30h-342z"/>
<path fill="#616161" d="M420 880h2v30h-2zM476 880h2v30h-2zM534 880h2v30h-2zM592 880h2v30h-2zM648 880h2v30h-2z"/>
<path fill="#363636" d="M364 912h342v36h-342z"/>
<path fill="#232323" d="M420 912h2v36h-2zM476 912h2v36h-2zM534 912h2v36h-2zM592 912h2v36h-2zM648 912h2v36h-2z"/>
<path fill="#252525" d="M414 912h2v2h-2zM420 912h22v2h-22zM444 912h2v2h-2zM448 912h26v2h-26zM390 916h24v2h-24zM386 918h2v2h-2zM364 922h20v2h-20zM418 924h24v2h-24zM444 924h2v2h-2zM448 926h26v2h-26zM414 926h2v2h-2zM390 930h24v2h-24zM386 932h2v2h-2zM364 934h20v2h-20zM418 934h24v2h-24zM444 934h2v2h-2zM448 938h26v2h-26zM414 938h2v2h-2zM390 940h24v2h-24zM386 942h2v2h-2zM364 946h20v2h-20zM528 912h2v2h-2zM534 912h22v2h-22zM558 912h2v2h-2zM562 912h26v2h-26zM504 916h24v2h-24zM500 918h2v2h-2zM478 922h20v2h-20zM532 924h24v2h-24zM558 924h2v2h-2zM562 926h26v2h-26zM528 926h2v2h-2zM504 930h24v2h-24zM500 932h2v2h-2zM478 934h20v2h-20zM532 934h24v2h-24zM558 934h2v2h-2zM562 938h26v2h-26zM528 938h2v2h-2zM504 940h24v2h-24zM500 942h2v2h-2zM478 946h20v2h-20zM644 912h2v2h-2zM650 912h22v2h-22zM674 912h2v2h-2zM678 912h26v2h-26zM620 916h24v2h-24zM616 918h2v2h-2zM594 922h20v2h-20zM648 924h24v2h-24zM674 924h2v2h-2zM678 926h26v2h-26zM644 926h2v2h-2zM620 930h24v2h-24zM616 932h2v2h-2zM594 934h20v2h-20zM648 934h24v2h-24zM674 934h2v2h-2zM678 938h26v2h-26zM644 938h2v2h-2zM620 940h24v2h-24zM616 942h2v2h-2zM594 946h20v2h-20z"/>
<path fill="#1a1a1a" d="M734 878h116v70h-116z"/>
<path fill="#656565" d="M736 880h114v30h-114z"/>
<path fill="#616161" d="M764 880h2v30h-2zM820 880h2v30h-2z"/>
<path fill="#363636" d="M736 912h114v36h-114z"/>
<path fill="#232323" d="M764 912h2v36h-2zM820 912h2v36h-2z"/>
<path fill="#252525" d="M786 912h2v2h-2zM792 912h22v2h-22zM816 912h2v2h-2zM820 912h26v2h-26zM762 916h24v2h-24zM758 918h2v2h-2zM736 922h20v2h-20zM790 924h24v2h-24zM816 924h2v2h-2zM820 926h26v2h-26zM786 926h2v2h-2zM762 930h24v2h-24zM758 932h2v2h-2zM736 934h20v2h-20zM790 934h24v2h-24zM816 934h2v2h-2zM820 938h26v2h-26zM786 938h2v2h-2zM762 940h24v2h-24zM758 942h2v2h-2zM736 946h20v2h-20z"/>
<path fill="#1a1a1a" d="M850 878h114v70h-114z"/>
<path fill="#656565" d="M852 880h112v30h-112z"/>
<path fill="#616161" d="M878 880h2v30h-2zM936 880h2v30h-2z"/>
<path fill="#363636" d="M852 912h112v36h-112z"/>
<path fill="#232323" d="M878 912h2v36h-2zM936 912h2v36h-2z"/>
<path fill="#252525" d="M902 912h2v2h-2zM908 912h22v2h-22zM932 912h2v2h-2zM936 912h26v2h-26zM878 916h24v2h-24zM874 918h2v2h-2zM852 922h20v2h-20zM906 924h24v2h-24zM932 924h2v2h-2zM936 926h26v2h-26zM902 926h2v2h-2zM878 930h24v2h-24zM874 932h2v2h-2zM852 934h20v2h-20zM906 934h24v2h-24zM932 934h2v2h-2zM936 938h26v2h-26zM902 938h2v2h-2zM878 940h24v2h-24zM874 942h2v2h-2zM852 946h20v2h-20z"/>
<path fill="#1a1a1a" d="M1422 878h116v70h-116z"/>
<path fill="#656565" d="M1424 880h114v30h-114z"/>
<path fill="#616161" d="M1452 880h2v30h-2zM1508 880h2v30h-2z"/>
<path fill="#363636" d="M1424 912h114v36h-114z"/>
<path fill="#232323" d="M1452 912h2v36h-2zM1508 912h2v36h-2z"/>
<path fill="#252525" d="M1474 912h2v2h-2zM1480 912h22v2h-22zM1504 912h2v2h-2zM1508 912h26v2h-26zM1450 916h24v2h-24zM1446 918h2v2h-2zM1424 922h20v2h-20zM1478 924h24v2h-24zM1504 924h2v2h-2zM1508 926h26v2h-26zM1474 926h2v2h-2zM1450 930h24v2h-24zM1446 932h2v2h-2zM1424 934h20v2h-20zM1478 934h24v2h-24zM1504 934h2v2h-2zM1508 938h26v2h-26zM1474 938h2v2h-2zM1450 940h24v2h-24zM1446 942h2v2h-2zM1424 946h20v2h-20z"/>
<path fill="#1a1a1a" d="M1538 878h114v70h-114z"/>
<path fill="#656565" d="M1540 880h112v30h-112z"/>
<path fill="#616161" d="M1566 880h2v30h-2zM1624 880h2v30h-2z"/>
<path fill="#363636" d="M1540 912h112v36h-112z"/>
<path fill="#232323" d="M1566 912h2v36h-2zM1624 912h2v36h-2z"/>
<path fill="#252525" d="M1590 912h2v2h-2zM1596 912h22v2h-22zM1620 912h2v2h-2zM1624 912h26v2h-26zM1566 916h24v2h-24zM1562 918h2v2h-2zM1540 922h20v2h-20zM1594 924h24v2h-24zM1620 924h2v2h-2zM1624 926h26v2h-26zM1590 926h2v2h-2zM1566 930h24v2h-24zM1562 932h2v2h-2zM1540 934h20v2h-20zM1594 934h24v2h-24zM1620 934h2v2h-2zM1624 938h26v2h-26zM1590 938h2v2h-2zM1566 940h24v2h-24zM1562 942h2v2h-2zM1540 946h20v2h-20z"/>
<path fill="#1a1a1a" d="M1882 878h114v70h-114z"/>
<path fill="#656565" d="M1884 880h112v30h-112z"/>
<path fill="#616161" d="M1910 880h2v30h-2zM1968 880h2v30h-2z"/>
<path fill="#363636" d="M1884 912h112v36h-112z"/>
<path fill="#232323" d="M1910 912h2v36h-2zM1968 912h2v36h-2z"/>
<path fill="#252525" d="M1934 912h2v2h-2zM1940 912h22v2h-22zM1964 912h2v2h-2zM1968 912h26v2h-26zM1910 916h24v2h-24zM1906 918h2v2h-2zM1884 922h20v2h-20zM1938 924h24v2h-24zM1964 924h2v2h-2zM1968 926h26v2h-26zM1934 926h2v2h-2zM1910 930h24v2h-24zM1906 932h2v2h-2zM1884 934h20v2h-20zM1938 934h24v2h-24zM1964 934h2v2h-2zM1968 938h26v2h-26zM1934 938h2v2h-2zM1910 940h24v2h-24zM1906 942h2v2h-2zM1884 946h20v2h-20z"/>
<path fill="#1a1a1a" d="M1996 878h114v70h-114z"/>
<path fill="#656565" d="M1998 880h112v30h-112z"/>
<path fill="#616161" d="M2024 880h2v30h-2zM2082 880h2v30h-2z"/>
<path fill="#363636" d="M1998 912h112v36h-112z"/>
<path fill="#232323" d="M2024 912h2v36h-2zM2082 912h2v36h-2z"/>
<path fill="#252525" d="M2048 912h2v2h-2zM2054 912h22v2h-22zM2078 912h2v2h-2zM2082 912h26v2h-26zM2024 916h24v2h-24zM2020 918h2v2h-2zM1998 922h20v2h-20zM2052 924h24v2h-24zM2078 924h2v2h-2zM2082 926h26v2h-26zM2048 926h2v2h-2zM2024 930h24v2h-24zM2020 932h2v2h-2zM1998 934h20v2h-20zM2052 934h24v2h-24zM2078 934h2v2h-2zM2082 938h26v2h-26zM2048 938h2v2h-2zM2024 940h24v2h-24zM2020 942h2v2h-2zM1998 946h20v2h-20z"/>
<path fill="#656565" d="M964 878h230v34h-230z"/>
<path fill="#616161" d="M992 878h2v34h-2zM1050 878h2v34h-2zM1108 878h2v34h-2zM1164 878h2v34h-2z"/>
<path fill="#313131" d="M964 912h230v36h-230z"/>
<path fill="#232323" d="M992 912h2v36h-2zM1050 912h2v36h-2zM1108 912h2v36h-2zM1164 912h2v36h-2z"/>
<path fill="#4e4e4e" d="M1016 912h2v2h-2zM1022 912h22v2h-22zM1046 912h2v2h-2zM1050 912h26v2h-26zM992 916h24v2h-24zM988 918h2v2h-2zM966 922h20v2h-20zM1020 924h24v2h-24zM1046 924h2v2h-2zM1050 926h26v2h-26zM1016 926h2v2h-2zM992 930h24v2h-24zM988 932h2v2h-2zM966 934h20v2h-20zM1020 934h24v2h-24zM1046 934h2v2h-2zM1050 938h26v2h-26zM1016 938h2v2h-2zM992 940h24v2h-24zM988 942h2v2h-2zM966 946h20v2h-20zM1130 912h2v2h-2zM1136 912h22v2h-22zM1160 912h2v2h-2zM1164 912h26v2h-26zM1106 916h24v2h-24zM1102 918h2v2h-2zM1080 922h20v2h-20zM1134 924h24v2h-24zM1160 924h2v2h-2zM1164 926h26v2h-26zM1130 926h2v2h-2zM1106 930h24v2h-24zM1102 932h2v2h-2zM1080 934h20v2h-20zM1134 934h24v2h-24zM1160 934h2v2h-2zM1164 938h26v2h-26zM1130 938h2v2h-2zM1106 940h24v2h-24zM1102 942h2v2h-2zM1080 946h20v2h-20z"/>
<path fill="#656565" d="M1652 878h230v34h-230z"/>
<path fill="#616161" d="M1680 878h2v34h-2zM1738 878h2v34h-2zM1796 878h2v34h-2zM1852 878h2v34h-2z"/>
<path fill="#313131" d="M1652 912h230v36h-230z"/>
<path fill="#232323" d="M1680 912h2v36h-2zM1738 912h2v36h-2zM1796 912h2v36h-2zM1852 912h2v36h-2z"/>
<path fill="#4e4e4e" d="M1704 912h2v2h-2zM1710 912h22v2h-22zM1734 912h2v2h-2zM1738 912h26v2h-26zM1680 916h24v2h-24zM1676 918h2v2h-2zM1654 922h20v2h-20zM1708 924h24v2h-24zM1734 924h2v2h-2zM1738 926h26v2h-26zM1704 926h2v2h-2zM1680 930h24v2h-24zM1676 932h2v2h-2zM1654 934h20v2h-20zM1708 934h24v2h-24zM1734 934h2v2h-2zM1738 938h26v2h-26zM1704 938h2v2h-2zM1680 940h24v2h-24zM1676 942h2v2h-2zM1654 946h20v2h-20zM1818 912h2v2h-2zM1824 912h22v2h-22zM1848 912h2v2h-2zM1852 912h26v2h-26zM1794 916h24v2h-24zM1790 918h2v2h-2zM1768 922h20v2h-20zM1822 924h24v2h-24zM1848 924h2v2h-2zM1852 926h26v2h-26zM1818 926h2v2h-2zM1794 930h24v2h-24zM1790 932h2v2h-2zM1768 934h20v2h-20zM1822 934h24v2h-24zM1848 934h2v2h-2zM1852 938h26v2h-26zM1818 938h2v2h-2zM1794 940h24v2h-24zM1790 942h2v2h-2zM1768 946h20v2h-20z"/>
<path fill="#314f1f" d="M362 952h342v70h-342z"/>
<path fill="#69a043" d="M364 954h340v30h-340zM364 986h340v36h-340z"/>
<path fill="#3f6b27" d="M420 986h2v36h-2zM476 986h2v36h-2zM534 986h2v36h-2zM592 986h2v36h-2zM648 986h2v36h-2z"/>
<path fill="#3b6126" d="M414 986h2v2h-2zM420 986h22v2h-22zM444 986h2v2h-2zM448 986h26v2h-26zM390 990h24v2h-24zM386 992h2v2h-2zM364 996h20v2h-20zM418 998h24v2h-24zM444 998h2v2h-2zM448 1000h26v2h-26zM414 1000h2v2h-2zM390 1004h24v2h-24zM386 1006h2v2h-2zM364 1008h20v2h-20zM418 1008h24v2h-24zM444 1008h2v2h-2zM448 1012h26v2h-26zM414 1012h2v2h-2zM390 1014h24v2h-24zM386 1016h2v2h-2zM364 1020h20v2h-20zM528 986h2v2h-2zM534 986h22v2h-22zM558 986h2v2h-2zM562 986h26v2h-26zM504 990h24v2h-24zM500 992h2v2h-2zM478 996h20v2h-20zM532 998h24v2h-24zM558 998h2v2h-2zM562 1000h26v2h-26zM528 1000h2v2h-2zM504 1004h24v2h-24zM500 1006h2v2h-2zM478 1008h20v2h-20zM532 1008h24v2h-24zM558 1008h2v2h-2zM562 1012h26v2h-26zM528 1012h2v2h-2zM504 1014h24v2h-24zM500 1016h2v2h-2zM478 1020h20v2h-20zM644 986h2v2h-2zM650 986h22v2h-22zM674 986h2v2h-2zM678 986h26v2h-26zM620 990h24v2h-24zM616 992h2v2h-2zM594 996h20v2h-20zM648 998h24v2h-24zM674 998h2v2h-2zM678 1000h26v2h-26zM644 1000h2v2h-2zM620 1004h24v2h-24zM616 1006h2v2h-2zM594 1008h20v2h-20zM648 1008h24v2h-24zM674 1008h2v2h-2zM678 1012h26v2h-26zM644 1012h2v2h-2zM620 1014h24v2h-24zM616 1016h2v2h-2zM594 1020h20v2h-20z"/>
<path fill="#314f1f" d="M850 952h114v70h-114z"/>
<path fill="#69a043" d="M852 954h112v30h-112zM852 986h112v36h-112z"/>
<path fill="#3f6b27" d="M878 986h2v36h-2zM936 986h2v36h-2z"/>
<path fill="#3b6126" d="M902 986h2v2h-2zM908 986h22v2h-22zM932 986h2v2h-2zM936 986h26v2h-26zM878 990h24v2h-24zM874 992h2v2h-2zM852 996h20v2h-20zM906 998h24v2h-24zM932 998h2v2h-2zM936 1000h26v2h-26zM902 1000h2v2h-2zM878 1004h24v2h-24zM874 1006h2v2h-2zM852 1008h20v2h-20zM906 1008h24v2h-24zM932 1008h2v2h-2zM936 1012h26v2h-26zM902 1012h2v2h-2zM878 1014h24v2h-24zM874 1016h2v2h-2zM852 1020h20v2h-20z"/>
<path fill="#314f1f" d="M1194 952h114v70h-114z"/>
<path fill="#69a043" d="M1196 954h112v30h-112zM1196 986h112v36h-112z"/>
<path fill="#3f6b27" d="M1222 986h2v36h-2zM1280 986h2v36h-2z"/>
<path fill="#3b6126" d="M1246 986h2v2h-2zM1252 986h22v2h-22zM1276 986h2v2h-2zM1280 986h26v2h-26zM1222 990h24v2h-24zM1218 992h2v2h-2zM1196 996h20v2h-20zM1250 998h24v2h-24zM1276 998h2v2h-2zM1280 1000h26v2h-26zM1246 1000h2v2h-2zM1222 1004h24v2h-24zM1218 1006h2v2h-2zM1196 1008h20v2h-20zM1250 1008h24v2h-24zM1276 1008h2v2h-2zM1280 1012h26v2h-26zM1246 1012h2v2h-2zM1222 1014h24v2h-24zM1218 1016h2v2h-2zM1196 1020h20v2h-20z"/>
<path fill="#314f1f" d="M1308 952h230v70h-230z"/>
<path fill="#69a043" d="M1310 954h228v30h-228zM1310 986h228v36h-228z"/>
<path fill="#3f6b27" d="M1336 986h2v36h-2zM1394 986h2v36h-2zM1452 986h2v36h-2zM1508 986h2v36h-2z"/>
<path fill="#3b6126" d="M1360 986h2v2h-2zM1366 986h22v2h-22zM1390 986h2v2h-2zM1394 986h26v2h-26zM1336 990h24v2h-24zM1332 992h2v2h-2zM1310 996h20v2h-20zM1364 998h24v2h-24zM1390 998h2v2h-2zM1394 1000h26v2h-26zM1360 1000h2v2h-2zM1336 1004h24v2h-24zM1332 1006h2v2h-2zM1310 1008h20v2h-20zM1364 1008h24v2h-24zM1390 1008h2v2h-2zM1394 1012h26v2h-26zM1360 1012h2v2h-2zM1336 1014h24v2h-24zM1332 1016h2v2h-2zM1310 1020h20v2h-20zM1474 986h2v2h-2zM1480 986h22v2h-22zM1504 986h2v2h-2zM1508 986h26v2h-26zM1450 990h24v2h-24zM1446 992h2v2h-2zM1424 996h20v2h-20zM1478 998h24v2h-24zM1504 998h2v2h-2zM1508 1000h26v2h-26zM1474 1000h2v2h-2zM1450 1004h24v2h-24zM1446 1006h2v2h-2zM1424 1008h20v2h-20zM1478 1008h24v2h-24zM1504 1008h2v2h-2zM1508 1012h26v2h-26zM1474 1012h2v2h-2zM1450 1014h24v2h-24zM1446 1016h2v2h-2zM1424 1020h20v2h-20z"/>
<path fill="#314f1f" d="M1538 952h114v70h-114z"/>
<path fill="#69a043" d="M1540 954h112v30h-112zM1540 986h112v36h-112z"/>
<path fill="#3f6b27" d="M1566 986h2v36h-2zM1624 986h2v36h-2z"/>
<path fill="#3b6126" d="M1590 986h2v2h-2zM1596 986h22v2h-22zM1620 986h2v2h-2zM1624 986h26v2h-26zM1566 990h24v2h-24zM1562 992h2v2h-2zM1540 996h20v2h-20zM1594 998h24v2h-24zM1620 998h2v2h-2zM1624 1000h26v2h-26zM1590 1000h2v2h-2zM1566 1004h24v2h-24zM1562 1006h2v2h-2zM1540 1008h20v2h-20zM1594 1008h24v2h-24zM1620 1008h2v2h-2zM1624 1012h26v2h-26zM1590 1012h2v2h-2zM1566 1014h24v2h-24zM1562 1016h2v2h-2zM1540 1020h20v2h-20z"/>
<path fill="#314f1f" d="M1882 952h114v70h-114z"/>
<path fill="#69a043" d="M1884 954h112v30h-112zM1884 986h112v36h-112z"/>
<path fill="#3f6b27" d="M1910 986h2v36h-2zM1968 986h2v36h-2z"/>
<path fill="#3b6126" d="M1934 986h2v2h-2zM1940 986h22v2h-22zM1964 986h2v2h-2zM1968 986h26v2h-26zM1910 990h24v2h-24zM1906 992h2v2h-2zM1884 996h20v2h-20zM1938 998h24v2h-24zM1964 998h2v2h-2zM1968 1000h26v2h-26zM1934 1000h2v2h-2zM1910 1004h24v2h-24zM1906 1006h2v2h-2zM1884 1008h20v2h-20zM1938 1008h24v2h-24zM1964 1008h2v2h-2zM1968 1012h26v2h-26zM1934 1012h2v2h-2zM1910 1014h24v2h-24zM1906 1016h2v2h-2zM1884 1020h20v2h-20z"/>
<path fill="#314f1f" d="M1996 952h114v70h-114z"/>
<path fill="#69a043" d="M1998 954h112v30h-112zM1998 986h112v36h-112z"/>
<path fill="#3f6b27" d="M2024 986h2v36h-2zM2082 986h2v36h-2z"/>
<path fill="#3b6126" d="M2048 986h2v2h-2zM2054 986h22v2h-22zM2078 986h2v2h-2zM2082 986h26v2h-26zM2024 990h24v2h-24zM2020 992h2v2h-2zM1998 996h20v2h-20zM2052 998h24v2h-24zM2078 998h2v2h-2zM2082 1000h26v2h-26zM2048 1000h2v2h-2zM2024 1004h24v2h-24zM2020 1006h2v2h-2zM1998 1008h20v2h-20zM2052 1008h24v2h-24zM2078 1008h2v2h-2zM2082 1012h26v2h-26zM2048 1012h2v2h-2zM2024 1014h24v2h-24zM2020 1016h2v2h-2zM1998 1020h20v2h-20z"/>
<path fill="#656565" d="M964 952h230v34h-230z"/>
<path fill="#616161" d="M992 952h2v34h-2zM1050 952h2v34h-2zM1108 952h2v34h-2zM1164 952h2v34h-2z"/>
<path fill="#313131" d="M964 986h230v36h-230z"/>
<path fill="#232323" d="M992 986h2v36h-2zM1050 986h2v36h-2zM1108 986h2v36h-2zM1164 986h2v36h-2z"/>
<path fill="#4e4e4e" d="M1016 986h2v2h-2zM1022 986h22v2h-22zM1046 986h2v2h-2zM1050 986h26v2h-26zM992 990h24v2h-24zM988 992h2v2h-2zM966 996h20v2h-20zM1020 998h24v2h-24zM1046 998h2v2h-2zM1050 1000h26v2h-26zM1016 1000h2v2h-2zM992 1004h24v2h-24zM988 1006h2v2h-2zM966 1008h20v2h-20zM1020 1008h24v2h-24zM1046 1008h2v2h-2zM1050 1012h26v2h-26zM1016 1012h2v2h-2zM992 1014h24v2h-24zM988 1016h2v2h-2zM966 1020h20v2h-20zM1130 986h2v2h-2zM1136 986h22v2h-22zM1160 986h2v2h-2zM1164 986h26v2h-26zM1106 990h24v2h-24zM1102 992h2v2h-2zM1080 996h20v2h-20zM1134 998h24v2h-24zM1160 998h2v2h-2zM1164 1000h26v2h-26zM1130 1000h2v2h-2zM1106 1004h24v2h-24zM1102 1006h2v2h-2zM1080 1008h20v2h-20zM1134 1008h24v2h-24zM1160 1008h2v2h-2zM1164 1012h26v2h-26zM1130 1012h2v2h-2zM1106 1014h24v2h-24zM1102 1016h2v2h-2zM1080 1020h20v2h-20z"/>
<path fill="#656565" d="M1652 952h230v34h-230z"/>
<path fill="#616161" d="M1680 952h2v34h-2zM1738 952h2v34h-2zM1796 952h2v34h-2zM1852 952h2v34h-2z"/>
<path fill="#313131" d="M1652 986h230v36h-230z"/>
<path fill="#232323" d="M1680 986h2v36h-2zM1738 986h2v36h-2zM1796 986h2v36h-2zM1852 986h2v36h-2z"/>
<path fill="#4e4e4e" d="M1704 986h2v2h-2zM1710 986h22v2h-22zM1734 986h2v2h-2zM1738 986h26v2h-26zM1680 990h24v2h-24zM1676 992h2v2h-2zM1654 996h20v2h-20zM1708 998h24v2h-24zM1734 998h2v2h-2zM1738 1000h26v2h-26zM1704 1000h2v2h-2zM1680 1004h24v2h-24zM1676 1006h2v2h-2zM1654 1008h20v2h-20zM1708 1008h24v2h-24zM1734 1008h2v2h-2zM1738 1012h26v2h-26zM1704 1012h2v2h-2zM1680 1014h24v2h-24zM1676 1016h2v2h-2zM1654 1020h20v2h-20zM1818 986h2v2h-2zM1824 986h22v2h-22zM1848 986h2v2h-2zM1852 986h26v2h-26zM1794 990h24v2h-24zM1790 992h2v2h-2zM1768 996h20v2h-20zM1822 998h24v2h-24zM1848 998h2v2h-2zM1852 1000h26v2h-26zM1818 1000h2v2h-2zM1794 1004h24v2h-24zM1790 1006h2v2h-2zM1768 1008h20v2h-20zM1822 1008h24v2h-24zM1848 1008h2v2h-2zM1852 1012h26v2h-26zM1818 1012h2v2h-2zM1794 1014h24v2h-24zM1790 1016h2v2h-2zM1768 1020h20v2h-20z"/>
<path fill="#7a7a7a" d="M704 952h2v34h-2z"/>
<path fill="#314f1f" d="M476 1026h228v70h-228z"/>
<path fill="#69a043" d="M478 1028h226v30h-226zM478 1060h226v36h-226z"/>
<path fill="#3f6b27" d="M534 1060h2v36h-2zM592 1060h2v36h-2zM648 1060h2v36h-2z"/>
<path fill="#3b6126" d="M528 1060h2v2h-2zM534 1060h22v2h-22zM558 1060h2v2h-2zM562 1060h26v2h-26zM504 1064h24v2h-24zM500 1066h2v2h-2zM478 1070h20v2h-20zM532 1072h24v2h-24zM558 1072h2v2h-2zM562 1074h26v2h-26zM528 1074h2v2h-2zM504 1078h24v2h-24zM500 1080h2v2h-2zM478 1082h20v2h-20zM532 1082h24v2h-24zM558 1082h2v2h-2zM562 1086h26v2h-26zM528 1086h2v2h-2zM504 1088h24v2h-24zM500 1090h2v2h-2zM478 1094h20v2h-20zM644 1060h2v2h-2zM650 1060h22v2h-22zM674 1060h2v2h-2zM678 1060h26v2h-26zM620 1064h24v2h-24zM616 1066h2v2h-2zM594 1070h20v2h-20zM648 1072h24v2h-24zM674 1072h2v2h-2zM678 1074h26v2h-26zM644 1074h2v2h-2zM620 1078h24v2h-24zM616 1080h2v2h-2zM594 1082h20v2h-20zM648 1082h24v2h-24zM674 1082h2v2h-2zM678 1086h26v2h-26zM644 1086h2v2h-2zM620 1088h24v2h-24zM616 1090h2v2h-2zM594 1094h20v2h-20z"/>
<path fill="#314f1f" d="M850 1026h114v70h-114z"/>
<path fill="#69a043" d="M852 1028h112v30h-112zM852 1060h112v36h-112z"/>
<path fill="#3f6b27" d="M878 1060h2v36h-2zM936 1060h2v36h-2z"/>
<path fill="#3b6126" d="M902 1060h2v2h-2zM908 1060h22v2h-22zM932 1060h2v2h-2zM936 1060h26v2h-26zM878 1064h24v2h-24zM874 1066h2v2h-2zM852 1070h20v2h-20zM906 1072h24v2h-24zM932 1072h2v2h-2zM936 1074h26v2h-26zM902 1074h2v2h-2zM878 1078h24v2h-24zM874 1080h2v2h-2zM852 1082h20v2h-20zM906 1082h24v2h-24zM932 1082h2v2h-2zM936 1086h26v2h-26zM902 1086h2v2h-2zM878 1088h24v2h-24zM874 1090h2v2h-2zM852 1094h20v2h-20z"/>
<path fill="#314f1f" d="M1194 1026h114v70h-114z"/>
<path fill="#69a043" d="M1196 1028h112v30h-112zM1196 1060h112v36h-112z"/>
<path fill="#3f6b27" d="M1222 1060h2v36h-2zM1280 1060h2v36h-2z"/>
<path fill="#3b6126" d="M1246 1060h2v2h-2zM1252 1060h22v2h-22zM1276 1060h2v2h-2zM1280 1060h26v2h-26zM1222 1064h24v2h-24zM1218 1066h2v2h-2zM1196 1070h20v2h-20zM1250 1072h24v2h-24zM1276 1072h2v2h-2zM1280 1074h26v2h-26zM1246 1074h2v2h-2zM1222 1078h24v2h-24zM1218 1080h2v2h-2zM1196 1082h20v2h-20zM1250 1082h24v2h-24zM1276 1082h2v2h-2zM1280 1086h26v2h-26zM1246 1086h2v2h-2zM1222 1088h24v2h-24zM1218 1090h2v2h-2zM1196 1094h20v2h-20z"/>
<path fill="#314f1f" d="M1308 1026h230v70h-230z"/>
<path fill="#69a043" d="M1310 1028h228v30h-228zM1310 1060h228v36h-228z"/>
<path fill="#3f6b27" d="M1336 1060h2v36h-2zM1394 1060h2v36h-2zM1452 1060h2v36h-2zM1508 1060h2v36h-2z"/>
<path fill="#3b6126" d="M1360 1060h2v2h-2zM1366 1060h22v2h-22zM1390 1060h2v2h-2zM1394 1060h26v2h-26zM1336 1064h24v2h-24zM1332 1066h2v2h-2zM1310 1070h20v2h-20zM1364 1072h24v2h-24zM1390 1072h2v2h-2zM1394 1074h26v2h-26zM1360 1074h2v2h-2zM1336 1078h24v2h-24zM1332 1080h2v2h-2zM1310 1082h20v2h-20zM1364 1082h24v2h-24zM1390 1082h2v2h-2zM1394 1086h26v2h-26zM1360 1086h2v2h-2zM1336 1088h24v2h-24zM1332 1090h2v2h-2zM1310 1094h20v2h-20zM1474 1060h2v2h-2zM1480 1060h22v2h-22zM1504 1060h2v2h-2zM1508 1060h26v2h-26zM1450 1064h24v2h-24zM1446 1066h2v2h-2zM1424 1070h20v2h-20zM1478 1072h24v2h-24zM1504 1072h2v2h-2zM1508 1074h26v2h-26zM1474 1074h2v2h-2zM1450 1078h24v2h-24zM1446 1080h2v2h-2zM1424 1082h20v2h-20zM1478 1082h24v2h-24zM1504 1082h2v2h-2zM1508 1086h26v2h-26zM1474 1086h2v2h-2zM1450 1088h24v2h-24zM1446 1090h2v2h-2zM1424 1094h20v2h-20z"/>
<path fill="#314f1f" d="M1538 1026h114v70h-114z"/>
<path fill="#69a043" d="M1540 1028h112v30h-112zM1540 1060h112v36h-112z"/>
<path fill="#3f6b27" d="M1566 1060h2v36h-2zM1624 1060h2v36h-2z"/>
<path fill="#3b6126" d="M1590 1060h2v2h-2zM1596 1060h22v2h-22zM1620 1060h2v2h-2zM1624 1060h26v2h-26zM1566 1064h24v2h-24zM1562 1066h2v2h-2zM1540 1070h20v2h-20zM1594 1072h24v2h-24zM1620 1072h2v2h-2zM1624 1074h26v2h-26zM1590 1074h2v2h-2zM1566 1078h24v2h-24zM1562 1080h2v2h-2zM1540 1082h20v2h-20zM1594 1082h24v2h-24zM1620 1082h2v2h-2zM1624 1086h26v2h-26zM1590 1086h2v2h-2zM1566 1088h24v2h-24zM1562 1090h2v2h-2zM1540 1094h20v2h-20z"/>
<path fill="#656565" d="M964 1026h230v34h-230z"/>
<path fill="#616161" d="M992 1026h2v34h-2zM1050 1026h2v34h-2zM1108 1026h2v34h-2zM1164 1026h2v34h-2z"/>
<path fill="#313131" d="M964 1060h230v36h-230z"/>
<path fill="#232323" d="M992 1060h2v36h-2zM1050 1060h2v36h-2zM1108 1060h2v36h-2zM1164 1060h2v36h-2z"/>
<path fill="#4e4e4e" d="M1016 1060h2v2h-2zM1022 1060h22v2h-22zM1046 1060h2v2h-2zM1050 1060h26v2h-26zM992 1064h24v2h-24zM988 1066h2v2h-2zM966 1070h20v2h-20zM1020 1072h24v2h-24zM1046 1072h2v2h-2zM1050 1074h26v2h-26zM1016 1074h2v2h-2zM992 1078h24v2h-24zM988 1080h2v2h-2zM966 1082h20v2h-20zM1020 1082h24v2h-24zM1046 1082h2v2h-2zM1050 1086h26v2h-26zM1016 1086h2v2h-2zM992 1088h24v2h-24zM988 1090h2v2h-2zM966 1094h20v2h-20zM1130 1060h2v2h-2zM1136 1060h22v2h-22zM1160 1060h2v2h-2zM1164 1060h26v2h-26zM1106 1064h24v2h-24zM1102 1066h2v2h-2zM1080 1070h20v2h-20zM1134 1072h24v2h-24zM1160 1072h2v2h-2zM1164 1074h26v2h-26zM1130 1074h2v2h-2zM1106 1078h24v2h-24zM1102 1080h2v2h-2zM1080 1082h20v2h-20zM1134 1082h24v2h-24zM1160 1082h2v2h-2zM1164 1086h26v2h-26zM1130 1086h2v2h-2zM1106 1088h24v2h-24zM1102 1090h2v2h-2zM1080 1094h20v2h-20z"/>
<path fill="#656565" d="M1652 1026h230v34h-230z"/>
<path fill="#616161" d="M1680 1026h2v34h-2zM1738 1026h2v34h-2zM1796 1026h2v34h-2zM1852 1026h2v34h-2z"/>
<path fill="#313131" d="M1652 1060h230v36h-230z"/>
<path fill="#232323" d="M1680 1060h2v36h-2zM1738 1060h2v36h-2zM1796 1060h2v36h-2zM1852 1060h2v36h-2z"/>
<path fill="#4e4e4e" d="M1704 1060h2v2h-2zM1710 1060h22v2h-22zM1734 1060h2v2h-2zM1738 1060h26v2h-26zM1680 1064h24v2h-24zM1676 1066h2v2h-2zM1654 1070h20v2h-20zM1708 1072h24v2h-24zM1734 1072h2v2h-2zM1738 1074h26v2h-26zM1704 1074h2v2h-2zM1680 1078h24v2h-24zM1676 1080h2v2h-2zM1654 1082h20v2h-20zM1708 1082h24v2h-24zM1734 1082h2v2h-2zM1738 1086h26v2h-26zM1704 1086h2v2h-2zM1680 1088h24v2h-24zM1676 1090h2v2h-2zM1654 1094h20v2h-20zM1818 1060h2v2h-2zM1824 1060h22v2h-22zM1848 1060h2v2h-2zM1852 1060h26v2h-26zM1794 1064h24v2h-24zM1790 1066h2v2h-2zM1768 1070h20v2h-20zM1822 1072h24v2h-24zM1848 1072h2v2h-2zM1852 1074h26v2h-26zM1818 1074h2v2h-2zM1794 1078h24v2h-24zM1790 1080h2v2h-2zM1768 1082h20v2h-20zM1822 1082h24v2h-24zM1848 1082h2v2h-2zM1852 1086h26v2h-26zM1818 1086h2v2h-2zM1794 1088h24v2h-24zM1790 1090h2v2h-2zM1768 1094h20v2h-20z"/>
<path fill="#7a7a7a" d="M704 1026h2v34h-2z"/>
<path fill="#656565" d="M476 1174h116v34h-116z"/>
<path fill="#616161" d="M534 1174h2v34h-2z"/>
<path fill="#313131" d="M476 1208h116v36h-116z"/>
<path fill="#232323" d="M534 1208h2v36h-2z"/>
<path fill="#4e4e4e" d="M528 1208h2v2h-2zM534 1208h22v2h-22zM558 1208h2v2h-2zM562 1208h26v2h-26zM504 1212h24v2h-24zM500 1214h2v2h-2zM478 1218h20v2h-20zM532 1220h24v2h-24zM558 1220h2v2h-2zM562 1222h26v2h-26zM528 1222h2v2h-2zM504 1226h24v2h-24zM500 1228h2v2h-2zM478 1230h20v2h-20zM532 1230h24v2h-24zM558 1230h2v2h-2zM562 1234h26v2h-26zM528 1234h2v2h-2zM504 1236h24v2h-24zM500 1238h2v2h-2zM478 1242h20v2h-20z"/>
<path fill="#656565" d="M734 1174h116v34h-116z"/>
<path fill="#616161" d="M764 1174h2v34h-2zM820 1174h2v34h-2z"/>
<path fill="#313131" d="M734 1208h116v36h-116z"/>
<path fill="#232323" d="M764 1208h2v36h-2zM820 1208h2v36h-2z"/>
<path fill="#4e4e4e" d="M786 1208h2v2h-2zM792 1208h22v2h-22zM816 1208h2v2h-2zM820 1208h26v2h-26zM762 1212h24v2h-24zM758 1214h2v2h-2zM736 1218h20v2h-20zM790 1220h24v2h-24zM816 1220h2v2h-2zM820 1222h26v2h-26zM786 1222h2v2h-2zM762 1226h24v2h-24zM758 1228h2v2h-2zM736 1230h20v2h-20zM790 1230h24v2h-24zM816 1230h2v2h-2zM820 1234h26v2h-26zM786 1234h2v2h-2zM762 1236h24v2h-24zM758 1238h2v2h-2zM736 1242h20v2h-20z"/>
<path fill="#314f1f" d="M592 1174h112v70h-112z"/>
<path fill="#69a043" d="M594 1176h110v30h-110zM594 1208h110v36h-110z"/>
<path fill="#3f6b27" d="M648 1208h2v36h-2z"/>
<path fill="#3b6126" d="M644 1208h2v2h-2zM650 1208h22v2h-22zM674 1208h2v2h-2zM678 1208h26v2h-26zM620 1212h24v2h-24zM616 1214h2v2h-2zM594 1218h20v2h-20zM648 1220h24v2h-24zM674 1220h2v2h-2zM678 1222h26v2h-26zM644 1222h2v2h-2zM620 1226h24v2h-24zM616 1228h2v2h-2zM594 1230h20v2h-20zM648 1230h24v2h-24zM674 1230h2v2h-2zM678 1234h26v2h-26zM644 1234h2v2h-2zM620 1236h24v2h-24zM616 1238h2v2h-2zM594 1242h20v2h-20z"/>
<path fill="#314f1f" d="M850 1174h114v70h-114z"/>
<path fill="#69a043" d="M852 1176h112v30h-112zM852 1208h112v36h-112z"/>
<path fill="#3f6b27" d="M878 1208h2v36h-2zM936 1208h2v36h-2z"/>
<path fill="#3b6126" d="M902 1208h2v2h-2zM908 1208h22v2h-22zM932 1208h2v2h-2zM936 1208h26v2h-26zM878 1212h24v2h-24zM874 1214h2v2h-2zM852 1218h20v2h-20zM906 1220h24v2h-24zM932 1220h2v2h-2zM936 1222h26v2h-26zM902 1222h2v2h-2zM878 1226h24v2h-24zM874 1228h2v2h-2zM852 1230h20v2h-20zM906 1230h24v2h-24zM932 1230h2v2h-2zM936 1234h26v2h-26zM902 1234h2v2h-2zM878 1236h24v2h-24zM874 1238h2v2h-2zM852 1242h20v2h-20z"/>
<path fill="#314f1f" d="M1194 1174h114v70h-114z"/>
<path fill="#69a043" d="M1196 1176h112v30h-112zM1196 1208h112v36h-112z"/>
<path fill="#3f6b27" d="M1222 1208h2v36h-2zM1280 1208h2v36h-2z"/>
<path fill="#3b6126" d="M1246 1208h2v2h-2zM1252 1208h22v2h-22zM1276 1208h2v2h-2zM1280 1208h26v2h-26zM1222 1212h24v2h-24zM1218 1214h2v2h-2zM1196 1218h20v2h-20zM1250 1220h24v2h-24zM1276 1220h2v2h-2zM1280 1222h26v2h-26zM1246 1222h2v2h-2zM1222 1226h24v2h-24zM1218 1228h2v2h-2zM1196 1230h20v2h-20zM1250 1230h24v2h-24zM1276 1230h2v2h-2zM1280 1234h26v2h-26zM1246 1234h2v2h-2zM1222 1236h24v2h-24zM1218 1238h2v2h-2zM1196 1242h20v2h-20z"/>
<path fill="#314f1f" d="M1308 1174h230v70h-230z"/>
<path fill="#69a043" d="M1310 1176h228v30h-228zM1310 1208h228v36h-228z"/>
<path fill="#3f6b27" d="M1336 1208h2v36h-2zM1394 1208h2v36h-2zM1452 1208h2v36h-2zM1508 1208h2v36h-2z"/>
<path fill="#3b6126" d="M1360 1208h2v2h-2zM1366 1208h22v2h-22zM1390 1208h2v2h-2zM1394 1208h26v2h-26zM1336 1212h24v2h-24zM1332 1214h2v2h-2zM1310 1218h20v2h-20zM1364 1220h24v2h-24zM1390 1220h2v2h-2zM1394 1222h26v2h-26zM1360 1222h2v2h-2zM1336 1226h24v2h-24zM1332 1228h2v2h-2zM1310 1230h20v2h-20zM1364 1230h24v2h-24zM1390 1230h2v2h-2zM1394 1234h26v2h-26zM1360 1234h2v2h-2zM1336 1236h24v2h-24zM1332 1238h2v2h-2zM1310 1242h20v2h-20zM1474 1208h2v2h-2zM1480 1208h22v2h-22zM1504 1208h2v2h-2zM1508 1208h26v2h-26zM1450 1212h24v2h-24zM1446 1214h2v2h-2zM1424 1218h20v2h-20zM1478 1220h24v2h-24zM1504 1220h2v2h-2zM1508 1222h26v2h-26zM1474 1222h2v2h-2zM1450 1226h24v2h-24zM1446 1228h2v2h-2zM1424 1230h20v2h-20zM1478 1230h24v2h-24zM1504 1230h2v2h-2zM1508 1234h26v2h-26zM1474 1234h2v2h-2zM1450 1236h24v2h-24zM1446 1238h2v2h-2zM1424 1242h20v2h-20z"/>
<path fill="#314f1f" d="M1538 1174h114v70h-114z"/>
<path fill="#69a043" d="M1540 1176h112v30h-112zM1540 1208h112v36h-112z"/>
<path fill="#3f6b27" d="M1566 1208h2v36h-2zM1624 1208h2v36h-2z"/>
<path fill="#3b6126" d="M1590 1208h2v2h-2zM1596 1208h22v2h-22zM1620 1208h2v2h-2zM1624 1208h26v2h-26zM1566 1212h24v2h-24zM1562 1214h2v2h-2zM1540 1218h20v2h-20zM1594 1220h24v2h-24zM1620 1220h2v2h-2zM1624 1222h26v2h-26zM1590 1222h2v2h-2zM1566 1226h24v2h-24zM1562 1228h2v2h-2zM1540 1230h20v2h-20zM1594 1230h24v2h-24zM1620 1230h2v2h-2zM1624 1234h26v2h-26zM1590 1234h2v2h-2zM1566 1236h24v2h-24zM1562 1238h2v2h-2zM1540 1242h20v2h-20z"/>
<path fill="#7a7a7a" d="M704 1174h2v34h-2z"/>
<path fill="#656565" d="M476 1248h116v34h-116z"/>
<path fill="#616161" d="M534 1248h2v34h-2z"/>
<path fill="#313131" d="M476 1282h116v36h-116z"/>
<path fill="#232323" d="M534 1282h2v36h-2z"/>
<path fill="#4e4e4e" d="M528 1282h2v2h-2zM534 1282h22v2h-22zM558 1282h2v2h-2zM562 1282h26v2h-26zM504 1286h24v2h-24zM500 1288h2v2h-2zM478 1292h20v2h-20zM532 1294h24v2h-24zM558 1294h2v2h-2zM562 1296h26v2h-26zM528 1296h2v2h-2zM504 1300h24v2h-24zM500 1302h2v2h-2zM478 1304h20v2h-20zM532 1304h24v2h-24zM558 1304h2v2h-2zM562 1308h26v2h-26zM528 1308h2v2h-2zM504 1310h24v2h-24zM500 1312h2v2h-2zM478 1316h20v2h-20z"/>
<path fill="#656565" d="M734 1248h116v34h-116z"/>
<path fill="#616161" d="M764 1248h2v34h-2zM820 1248h2v34h-2z"/>
<path fill="#313131" d="M734 1282h116v36h-116z"/>
<path fill="#232323" d="M764 1282h2v36h-2zM820 1282h2v36h-2z"/>
<path fill="#4e4e4e" d="M786 1282h2v2h-2zM792 1282h22v2h-22zM816 1282h2v2h-2zM820 1282h26v2h-26zM762 1286h24v2h-24zM758 1288h2v2h-2zM736 1292h20v2h-20zM790 1294h24v2h-24zM816 1294h2v2h-2zM820 1296h26v2h-26zM786 1296h2v2h-2zM762 1300h24v2h-24zM758 1302h2v2h-2zM736 1304h20v2h-20zM790 1304h24v2h-24zM816 1304h2v2h-2zM820 1308h26v2h-26zM786 1308h2v2h-2zM762 1310h24v2h-24zM758 1312h2v2h-2zM736 1316h20v2h-20z"/>
<path fill="#314f1f" d="M592 1248h112v70h-112z"/>
<path fill="#69a043" d="M594 1250h110v30h-110zM594 1282h110v36h-110z"/>
<path fill="#3f6b27" d="M648 1282h2v36h-2z"/>
<path fill="#3b6126" d="M644 1282h2v2h-2zM650 1282h22v2h-22zM674 1282h2v2h-2zM678 1282h26v2h-26zM620 1286h24v2h-24zM616 1288h2v2h-2zM594 1292h20v2h-20zM648 1294h24v2h-24zM674 1294h2v2h-2zM678 1296h26v2h-26zM644 1296h2v2h-2zM620 1300h24v2h-24zM616 1302h2v2h-2zM594 1304h20v2h-20zM648 1304h24v2h-24zM674 1304h2v2h-2zM678 1308h26v2h-26zM644 1308h2v2h-2zM620 1310h24v2h-24zM616 1312h2v2h-2zM594 1316h20v2h-20z"/>
<path fill="#314f1f" d="M850 1248h114v70h-114z"/>
<path fill="#69a043" d="M852 1250h112v30h-112zM852 1282h112v36h-112z"/>
<path fill="#3f6b27" d="M878 1282h2v36h-2zM936 1282h2v36h-2z"/>
<path fill="#3b6126" d="M902 1282h2v2h-2zM908 1282h22v2h-22zM932 1282h2v2h-2zM936 1282h26v2h-26zM878 1286h24v2h-24zM874 1288h2v2h-2zM852 1292h20v2h-20zM906 1294h24v2h-24zM932 1294h2v2h-2zM936 1296h26v2h-26zM902 1296h2v2h-2zM878 1300h24v2h-24zM874 1302h2v2h-2zM852 1304h20v2h-20zM906 1304h24v2h-24zM932 1304h2v2h-2zM936 1308h26v2h-26zM902 1308h2v2h-2zM878 1310h24v2h-24zM874 1312h2v2h-2zM852 1316h20v2h-20z"/>
<path fill="#314f1f" d="M1194 1248h114v70h-114z"/>
<path fill="#69a043" d="M1196 1250h112v30h-112zM1196 1282h112v36h-112z"/>
<path fill="#3f6b27" d="M1222 1282h2v36h-2zM1280 1282h2v36h-2z"/>
<path fill="#3b6126" d="M1246 1282h2v2h-2zM1252 1282h22v2h-22zM1276 1282h2v2h-2zM1280 1282h26v2h-26zM1222 1286h24v2h-24zM1218 1288h2v2h-2zM1196 1292h20v2h-20zM1250 1294h24v2h-24zM1276 1294h2v2h-2zM1280 1296h26v2h-26zM1246 1296h2v2h-2zM1222 1300h24v2h-24zM1218 1302h2v2h-2zM1196 1304h20v2h-20zM1250 1304h24v2h-24zM1276 1304h2v2h-2zM1280 1308h26v2h-26zM1246 1308h2v2h-2zM1222 1310h24v2h-24zM1218 1312h2v2h-2zM1196 1316h20v2h-20z"/>
<path fill="#314f1f" d="M1308 1248h230v70h-230z"/>
<path fill="#69a043" d="M1310 1250h228v30h-228zM1310 1282h228v36h-228z"/>
<path fill="#3f6b27" d="M1336 1282h2v36h-2zM1394 1282h2v36h-2zM1452 1282h2v36h-2zM1508 1282h2v36h-2z"/>
<path fill="#3b6126" d="M1360 1282h2v2h-2zM1366 1282h22v2h-22zM1390 1282h2v2h-2zM1394 1282h26v2h-26zM1336 1286h24v2h-24zM1332 1288h2v2h-2zM1310 1292h20v2h-20zM1364 1294h24v2h-24zM1390 1294h2v2h-2zM1394 1296h26v2h-26zM1360 1296h2v2h-2zM1336 1300h24v2h-24zM1332 1302h2v2h-2zM1310 1304h20v2h-20zM1364 1304h24v2h-24zM1390 1304h2v2h-2zM1394 1308h26v2h-26zM1360 1308h2v2h-2zM1336 1310h24v2h-24zM1332 1312h2v2h-2zM1310 1316h20v2h-20zM1474 1282h2v2h-2zM1480 1282h22v2h-22zM1504 1282h2v2h-2zM1508 1282h26v2h-26zM1450 1286h24v2h-24zM1446 1288h2v2h-2zM1424 1292h20v2h-20zM1478 1294h24v2h-24zM1504 1294h2v2h-2zM1508 1296h26v2h-26zM1474 1296h2v2h-2zM1450 1300h24v2h-24zM1446 1302h2v2h-2zM1424 1304h20v2h-20zM1478 1304h24v2h-24zM1504 1304h2v2h-2zM1508 1308h26v2h-26zM1474 1308h2v2h-2zM1450 1310h24v2h-24zM1446 1312h2v2h-2zM1424 1316h20v2h-20z"/>
<path fill="#314f1f" d="M1538 1248h114v70h-114z"/>
<path fill="#69a043" d="M1540 1250h112v30h-112zM1540 1282h112v36h-112z"/>
<path fill="#3f6b27" d="M1566 1282h2v36h-2zM1624 1282h2v36h-2z"/>
<path fill="#3b6126" d="M1590 1282h2v2h-2zM1596 1282h22v2h-22zM1620 1282h2v2h-2zM1624 1282h26v2h-26zM1566 1286h24v2h-24zM1562 1288h2v2h-2zM1540 1292h20v2h-20zM1594 1294h24v2h-24zM1620 1294h2v2h-2zM1624 1296h26v2h-26zM1590 1296h2v2h-2zM1566 1300h24v2h-24zM1562 1302h2v2h-2zM1540 1304h20v2h-20zM1594 1304h24v2h-24zM1620 1304h2v2h-2zM1624 1308h26v2h-26zM1590 1308h2v2h-2zM1566 1310h24v2h-24zM1562 1312h2v2h-2zM1540 1316h20v2h-20z"/>
<path fill="#7a7a7a" d="M704 1248h2v34h-2z"/>
<g shape-rendering="geometricPrecision"><rect x="133.5" y="304.3" width="22" height="1.4" fill="#0c0c0c"/><rect x="156.5" y="300.5" width="2.5" height="1.4" fill="#0c0c0c"/><rect x="161" y="298.4" width="22.5" height="1.4" fill="#0c0c0c"/><rect x="184.5" y="294.6" width="3" height="1.4" fill="#0c0c0c"/><rect x="188" y="314.4" width="27" height="1.4" fill="#0c0c0c"/><rect x="216.5" y="294.4" width="28.5" height="1.4" fill="#0c0c0c"/><rect x="249.5" y="304.3" width="22" height="1.4" fill="#0c0c0c"/><rect x="272.5" y="300.5" width="2.5" height="1.4" fill="#0c0c0c"/><rect x="277" y="298.4" width="22.5" height="1.4" fill="#0c0c0c"/><rect x="300.5" y="294.6" width="3" height="1.4" fill="#0c0c0c"/><rect x="304" y="314.4" width="27" height="1.4" fill="#0c0c0c"/><rect x="332.5" y="294.4" width="28.5" height="1.4" fill="#0c0c0c"/><rect x="363.5" y="304.3" width="22" height="1.4" fill="#0c0c0c"/><rect x="386.5" y="300.5" width="2.5" height="1.4" fill="#0c0c0c"/><rect x="391" y="298.4" width="22.5" height="1.4" fill="#0c0c0c"/><rect x="414.5" y="294.6" width="3" height="1.4" fill="#0c0c0c"/><rect x="418" y="314.4" width="27" height="1.4" fill="#0c0c0c"/><rect x="446.5" y="294.4" width="28.5" height="1.4" fill="#0c0c0c"/><rect x="477.5" y="304.3" width="22" height="1.4" fill="#0c0c0c"/><rect x="500.5" y="300.5" width="2.5" height="1.4" fill="#0c0c0c"/><rect x="505" y="298.4" width="22.5" height="1.4" fill="#0c0c0c"/><rect x="528.5" y="294.6" width="3" height="1.4" fill="#0c0c0c"/><rect x="532" y="314.4" width="27" height="1.4" fill="#0c0c0c"/><rect x="560.5" y="294.4" width="28.5" height="1.4" fill="#0c0c0c"/><rect x="593.5" y="304.3" width="22" height="1.4" fill="#0c0c0c"/><rect x="616.5" y="300.5" width="2.5" height="1.4" fill="#0c0c0c"/><rect x="621" y="298.4" width="22.5" height="1.4" fill="#0c0c0c"/><rect x="644.5" y="294.6" width="3" height="1.4" fill="#0c0c0c"/><rect x="648" y="314.4" width="27" height="1.4" fill="#0c0c0c"/><rect x="676.5" y="294.4" width="28.5" height="1.4" fill="#0c0c0c"/><rect x="735.5" y="304.3" width="22" height="1.4" fill="#0c0c0c"/><rect x="758.5" y="300.5" width="2.5" height="1.4" fill="#0c0c0c"/><rect x="763" y="298.4" width="22.5" height="1.4" fill="#0c0c0c"/><rect x="786.5" y="294.6" width="3" height="1.4" fill="#0c0c0c"/><rect x="790" y="314.4" width="27" height="1.4" fill="#0c0c0c"/><rect x="818.5" y="294.4" width="28.5" height="1.4" fill="#0c0c0c"/><rect x="851.5" y="304.3" width="22" height="1.4" fill="#0c0c0c"/><rect x="874.5" y="300.5" width="2.5" height="1.4" fill="#0c0c0c"/><rect x="879" y="298.4" width="22.5" height="1.4" fill="#0c0c0c"/><rect x="902.5" y="294.6" width="3" height="1.4" fill="#0c0c0c"/><rect x="906" y="314.4" width="27" height="1.4" fill="#0c0c0c"/><rect x="934.5" y="294.4" width="28.5" height="1.4" fill="#0c0c0c"/><rect x="1423.5" y="304.3" width="22" height="1.4" fill="#0c0c0c"/><rect x="1446.5" y="300.5" width="2.5" height="1.4" fill="#0c0c0c"/><rect x="1451" y="298.4" width="22.5" height="1.4" fill="#0c0c0c"/><rect x="1474.5" y="294.6" width="3" height="1.4" fill="#0c0c0c"/><rect x="1478" y="314.4" width="27" height="1.4" fill="#0c0c0c"/><rect x="1506.5" y="294.4" width="28.5" height="1.4" fill="#0c0c0c"/><rect x="1539.5" y="304.3" width="22" height="1.4" fill="#0c0c0c"/><rect x="1562.5" y="300.5" width="2.5" height="1.4" fill="#0c0c0c"/><rect x="1567" y="298.4" width="22.5" height="1.4" fill="#0c0c0c"/><rect x="1590.5" y="294.6" width="3" height="1.4" fill="#0c0c0c"/><rect x="1594" y="314.4" width="27" height="1.4" fill="#0c0c0c"/><rect x="1622.5" y="294.4" width="28.5" height="1.4" fill="#0c0c0c"/><rect x="1883.5" y="304.3" width="22" height="1.4" fill="#0c0c0c"/><rect x="1906.5" y="300.5" width="2.5" height="1.4" fill="#0c0c0c"/><rect x="1911" y="298.4" width="22.5" height="1.4" fill="#0c0c0c"/><rect x="1934.5" y="294.6" width="3" height="1.4" fill="#0c0c0c"/><rect x="1938" y="314.4" width="27" height="1.4" fill="#0c0c0c"/><rect x="1966.5" y="294.4" width="28.5" height="1.4" fill="#0c0c0c"/><rect x="1997.5" y="304.3" width="22" height="1.4" fill="#0c0c0c"/><rect x="2020.5" y="300.5" width="2.5" height="1.4" fill="#0c0c0c"/><rect x="2025" y="298.4" width="22.5" height="1.4" fill="#0c0c0c"/><rect x="2048.5" y="294.6" width="3" height="1.4" fill="#0c0c0c"/><rect x="2052" y="314.4" width="27" height="1.4" fill="#0c0c0c"/><rect x="2080.5" y="294.4" width="28.5" height="1.4" fill="#0c0c0c"/><rect x="966" y="312.3" width="22" height="1.4" fill="#0c0c0c"/><rect x="989" y="307" width="2" height="1.4" fill="#0c0c0c"/><rect x="990.5" y="305" width="2" height="1.4" fill="#0c0c0c"/><rect x="994" y="304.4" width="27.7" height="1.4" fill="#0c0c0c"/><rect x="1023" y="318.2" width="19" height="1.4" fill="#0c0c0c"/><rect x="1043" y="313" width="1.5" height="1.4" fill="#0c0c0c"/><rect x="1044" y="310" width="1.5" height="1.4" fill="#0c0c0c"/><rect x="1046" y="298" width="1.5" height="1.4" fill="#0c0c0c"/><rect x="1047.5" y="301" width="1.5" height="1.4" fill="#0c0c0c"/><rect x="1052" y="304.4" width="25.7" height="1.4" fill="#0c0c0c"/><rect x="1080" y="312.3" width="22" height="1.4" fill="#0c0c0c"/><rect x="1103" y="307" width="2" height="1.4" fill="#0c0c0c"/><rect x="1104.5" y="305" width="2" height="1.4" fill="#0c0c0c"/><rect x="1108" y="304.4" width="27.7" height="1.4" fill="#0c0c0c"/><rect x="1137" y="318.2" width="19" height="1.4" fill="#0c0c0c"/><rect x="1157" y="313" width="1.5" height="1.4" fill="#0c0c0c"/><rect x="1158" y="310" width="1.5" height="1.4" fill="#0c0c0c"/><rect x="1160" y="298" width="1.5" height="1.4" fill="#0c0c0c"/><rect x="1161.5" y="301" width="1.5" height="1.4" fill="#0c0c0c"/><rect x="1166" y="304.4" width="25.7" height="1.4" fill="#0c0c0c"/><rect x="1654" y="312.3" width="22" height="1.4" fill="#0c0c0c"/><rect x="1677" y="307" width="2" height="1.4" fill="#0c0c0c"/><rect x="1678.5" y="305" width="2" height="1.4" fill="#0c0c0c"/><rect x="1682" y="304.4" width="27.7" height="1.4" fill="#0c0c0c"/><rect x="1711" y="318.2" width="19" height="1.4" fill="#0c0c0c"/><rect x="1731" y="313" width="1.5" height="1.4" fill="#0c0c0c"/><rect x="1732" y="310" width="1.5" height="1.4" fill="#0c0c0c"/><rect x="1734" y="298" width="1.5" height="1.4" fill="#0c0c0c"/><rect x="1735.5" y="301" width="1.5" height="1.4" fill="#0c0c0c"/><rect x="1740" y="304.4" width="25.7" height="1.4" fill="#0c0c0c"/><rect x="1768" y="312.3" width="22" height="1.4" fill="#0c0c0c"/><rect x="1791" y="307" width="2" height="1.4" fill="#0c0c0c"/><rect x="1792.5" y="305" width="2" height="1.4" fill="#0c0c0c"/><rect x="1796" y="304.4" width="27.7" height="1.4" fill="#0c0c0c"/><rect x="1825" y="318.2" width="19" height="1.4" fill="#0c0c0c"/><rect x="1845" y="313" width="1.5" height="1.4" fill="#0c0c0c"/><rect x="1846" y="310" width="1.5" height="1.4" fill="#0c0c0c"/><rect x="1848" y="298" width="1.5" height="1.4" fill="#0c0c0c"/><rect x="1849.5" y="301" width="1.5" height="1.4" fill="#0c0c0c"/><rect x="1854" y="304.4" width="25.7" height="1.4" fill="#0c0c0c"/><rect x="2111.5" y="304.3" width="22" height="1.4" fill="#595959"/><rect x="2134.5" y="300.5" width="2.5" height="1.4" fill="#595959"/><rect x="2139" y="298.4" width="22.5" height="1.4" fill="#595959"/><rect x="2162.5" y="294.6" width="3" height="1.4" fill="#595959"/><rect x="2166" y="314.4" width="27" height="1.4" fill="#595959"/><rect x="2194.5" y="294.4" width="28.5" height="1.4" fill="#595959"/><rect x="133.5" y="378.3" width="22" height="1.4" fill="#0c0c0c"/><rect x="156.5" y="374.5" width="2.5" height="1.4" fill="#0c0c0c"/><rect x="161" y="372.4" width="22.5" height="1.4" fill="#0c0c0c"/><rect x="184.5" y="368.6" width="3" height="1.4" fill="#0c0c0c"/><rect x="188" y="388.4" width="27" height="1.4" fill="#0c0c0c"/><rect x="216.5" y="368.4" width="28.5" height="1.4" fill="#0c0c0c"/><rect x="249.5" y="378.3" width="22" height="1.4" fill="#0c0c0c"/><rect x="272.5" y="374.5" width="2.5" height="1.4" fill="#0c0c0c"/><rect x="277" y="372.4" width="22.5" height="1.4" fill="#0c0c0c"/><rect x="300.5" y="368.6" width="3" height="1.4" fill="#0c0c0c"/><rect x="304" y="388.4" width="27" height="1.4" fill="#0c0c0c"/><rect x="332.5" y="368.4" width="28.5" height="1.4" fill="#0c0c0c"/><rect x="363.5" y="378.3" width="22" height="1.4" fill="#0c0c0c"/><rect x="386.5" y="374.5" width="2.5" height="1.4" fill="#0c0c0c"/><rect x="391" y="372.4" width="22.5" height="1.4" fill="#0c0c0c"/><rect x="414.5" y="368.6" width="3" height="1.4" fill="#0c0c0c"/><rect x="418" y="388.4" width="27" height="1.4" fill="#0c0c0c"/><rect x="446.5" y="368.4" width="28.5" height="1.4" fill="#0c0c0c"/><rect x="477.5" y="378.3" width="22" height="1.4" fill="#0c0c0c"/><rect x="500.5" y="374.5" width="2.5" height="1.4" fill="#0c0c0c"/><rect x="505" y="372.4" width="22.5" height="1.4" fill="#0c0c0c"/><rect x="528.5" y="368.6" width="3" height="1.4" fill="#0c0c0c"/><rect x="532" y="388.4" width="27" height="1.4" fill="#0c0c0c"/><rect x="560.5" y="368.4" width="28.5" height="1.4" fill="#0c0c0c"/><rect x="593.5" y="378.3" width="22" height="1.4" fill="#0c0c0c"/><rect x="616.5" y="374.5" width="2.5" height="1.4" fill="#0c0c0c"/><rect x="621" y="372.4" width="22.5" height="1.4" fill="#0c0c0c"/><rect x="644.5" y="368.6" width="3" height="1.4" fill="#0c0c0c"/><rect x="648" y="388.4" width="27" height="1.4" fill="#0c0c0c"/><rect x="676.5" y="368.4" width="28.5" height="1.4" fill="#0c0c0c"/><rect x="735.5" y="378.3" width="22" height="1.4" fill="#0c0c0c"/><rect x="758.5" y="374.5" width="2.5" height="1.4" fill="#0c0c0c"/><rect x="763" y="372.4" width="22.5" height="1.4" fill="#0c0c0c"/><rect x="786.5" y="368.6" width="3" height="1.4" fill="#0c0c0c"/><rect x="790" y="388.4" width="27" height="1.4" fill="#0c0c0c"/><rect x="818.5" y="368.4" width="28.5" height="1.4" fill="#0c0c0c"/><rect x="851.5" y="378.3" width="22" height="1.4" fill="#0c0c0c"/><rect x="874.5" y="374.5" width="2.5" height="1.4" fill="#0c0c0c"/><rect x="879" y="372.4" width="22.5" height="1.4" fill="#0c0c0c"/><rect x="902.5" y="368.6" width="3" height="1.4" fill="#0c0c0c"/><rect x="906" y="388.4" width="27" height="1.4" fill="#0c0c0c"/><rect x="934.5" y="368.4" width="28.5" height="1.4" fill="#0c0c0c"/><rect x="1423.5" y="378.3" width="22" height="1.4" fill="#0c0c0c"/><rect x="1446.5" y="374.5" width="2.5" height="1.4" fill="#0c0c0c"/><rect x="1451" y="372.4" width="22.5" height="1.4" fill="#0c0c0c"/><rect x="1474.5" y="368.6" width="3" height="1.4" fill="#0c0c0c"/><rect x="1478" y="388.4" width="27" height="1.4" fill="#0c0c0c"/><rect x="1506.5" y="368.4" width="28.5" height="1.4" fill="#0c0c0c"/><rect x="1539.5" y="378.3" width="22" height="1.4" fill="#0c0c0c"/><rect x="1562.5" y="374.5" width="2.5" height="1.4" fill="#0c0c0c"/><rect x="1567" y="372.4" width="22.5" height="1.4" fill="#0c0c0c"/><rect x="1590.5" y="368.6" width="3" height="1.4" fill="#0c0c0c"/><rect x="1594" y="388.4" width="27" height="1.4" fill="#0c0c0c"/><rect x="1622.5" y="368.4" width="28.5" height="1.4" fill="#0c0c0c"/><rect x="1883.5" y="378.3" width="22" height="1.4" fill="#0c0c0c"/><rect x="1906.5" y="374.5" width="2.5" height="1.4" fill="#0c0c0c"/><rect x="1911" y="372.4" width="22.5" height="1.4" fill="#0c0c0c"/><rect x="1934.5" y="368.6" width="3" height="1.4" fill="#0c0c0c"/><rect x="1938" y="388.4" width="27" height="1.4" fill="#0c0c0c"/><rect x="1966.5" y="368.4" width="28.5" height="1.4" fill="#0c0c0c"/><rect x="1997.5" y="378.3" width="22" height="1.4" fill="#0c0c0c"/><rect x="2020.5" y="374.5" width="2.5" height="1.4" fill="#0c0c0c"/><rect x="2025" y="372.4" width="22.5" height="1.4" fill="#0c0c0c"/><rect x="2048.5" y="368.6" width="3" height="1.4" fill="#0c0c0c"/><rect x="2052" y="388.4" width="27" height="1.4" fill="#0c0c0c"/><rect x="2080.5" y="368.4" width="28.5" height="1.4" fill="#0c0c0c"/><rect x="966" y="386.3" width="22" height="1.4" fill="#0c0c0c"/><rect x="989" y="381" width="2" height="1.4" fill="#0c0c0c"/><rect x="990.5" y="379" width="2" height="1.4" fill="#0c0c0c"/><rect x="994" y="378.4" width="27.7" height="1.4" fill="#0c0c0c"/><rect x="1023" y="392.2" width="19" height="1.4" fill="#0c0c0c"/><rect x="1043" y="387" width="1.5" height="1.4" fill="#0c0c0c"/><rect x="1044" y="384" width="1.5" height="1.4" fill="#0c0c0c"/><rect x="1046" y="372" width="1.5" height="1.4" fill="#0c0c0c"/><rect x="1047.5" y="375" width="1.5" height="1.4" fill="#0c0c0c"/><rect x="1052" y="378.4" width="25.7" height="1.4" fill="#0c0c0c"/><rect x="1080" y="386.3" width="22" height="1.4" fill="#0c0c0c"/><rect x="1103" y="381" width="2" height="1.4" fill="#0c0c0c"/><rect x="1104.5" y="379" width="2" height="1.4" fill="#0c0c0c"/><rect x="1108" y="378.4" width="27.7" height="1.4" fill="#0c0c0c"/><rect x="1137" y="392.2" width="19" height="1.4" fill="#0c0c0c"/><rect x="1157" y="387" width="1.5" height="1.4" fill="#0c0c0c"/><rect x="1158" y="384" width="1.5" height="1.4" fill="#0c0c0c"/><rect x="1160" y="372" width="1.5" height="1.4" fill="#0c0c0c"/><rect x="1161.5" y="375" width="1.5" height="1.4" fill="#0c0c0c"/><rect x="1166" y="378.4" width="25.7" height="1.4" fill="#0c0c0c"/><rect x="1654" y="386.3" width="22" height="1.4" fill="#0c0c0c"/><rect x="1677" y="381" width="2" height="1.4" fill="#0c0c0c"/><rect x="1678.5" y="379" width="2" height="1.4" fill="#0c0c0c"/><rect x="1682" y="378.4" width="27.7" height="1.4" fill="#0c0c0c"/><rect x="1711" y="392.2" width="19" height="1.4" fill="#0c0c0c"/><rect x="1731" y="387" width="1.5" height="1.4" fill="#0c0c0c"/><rect x="1732" y="384" width="1.5" height="1.4" fill="#0c0c0c"/><rect x="1734" y="372" width="1.5" height="1.4" fill="#0c0c0c"/><rect x="1735.5" y="375" width="1.5" height="1.4" fill="#0c0c0c"/><rect x="1740" y="378.4" width="25.7" height="1.4" fill="#0c0c0c"/><rect x="1768" y="386.3" width="22" height="1.4" fill="#0c0c0c"/><rect x="1791" y="381" width="2" height="1.4" fill="#0c0c0c"/><rect x="1792.5" y="379" width="2" height="1.4" fill="#0c0c0c"/><rect x="1796" y="378.4" width="27.7" height="1.4" fill="#0c0c0c"/><rect x="1825" y="392.2" width="19" height="1.4" fill="#0c0c0c"/><rect x="1845" y="387" width="1.5" height="1.4" fill="#0c0c0c"/><rect x="1846" y="384" width="1.5" height="1.4" fill="#0c0c0c"/><rect x="1848" y="372" width="1.5" height="1.4" fill="#0c0c0c"/><rect x="1849.5" y="375" width="1.5" height="1.4" fill="#0c0c0c"/><rect x="1854" y="378.4" width="25.7" height="1.4" fill="#0c0c0c"/><rect x="2111.5" y="378.3" width="22" height="1.4" fill="#595959"/><rect x="2134.5" y="374.5" width="2.5" height="1.4" fill="#595959"/><rect x="2139" y="372.4" width="22.5" height="1.4" fill="#595959"/><rect x="2162.5" y="368.6" width="3" height="1.4" fill="#595959"/><rect x="2166" y="388.4" width="27" height="1.4" fill="#595959"/><rect x="2194.5" y="368.4" width="28.5" height="1.4" fill="#595959"/></g>
<path fill="#35607f" d="M20 112h442v2h-442z"/>
<path fill="#2a4c65" d="M76 112h2v2h-2zM132 112h2v2h-2zM190 112h2v2h-2zM248 112h2v2h-2zM304 112h2v2h-2zM362 112h2v2h-2zM420 112h2v2h-2z"/>
<path fill="#35607f" d="M734 112h460v2h-460z"/>
<path fill="#2a4c65" d="M764 112h2v2h-2zM820 112h2v2h-2zM878 112h2v2h-2zM936 112h2v2h-2zM992 112h2v2h-2zM1050 112h2v2h-2zM1108 112h2v2h-2zM1164 112h2v2h-2z"/>
<path fill="#35607f" d="M1422 112h674v2h-674z"/>
<path fill="#2a4c65" d="M1452 112h2v2h-2zM1508 112h2v2h-2zM1566 112h2v2h-2zM1624 112h2v2h-2zM1680 112h2v2h-2zM1738 112h2v2h-2zM1796 112h2v2h-2zM1852 112h2v2h-2zM1910 112h2v2h-2zM1968 112h2v2h-2zM2024 112h2v2h-2zM2082 112h2v2h-2z"/>
<path fill="#35607f" d="M2110 112h172v2h-172z"/>
<path fill="#2a4c65" d="M2140 112h2v2h-2zM2196 112h2v2h-2zM2254 112h2v2h-2z"/>
<path fill="#35607f" d="M20 116h686v4h-686z"/>
<path fill="#2a4c65" d="M76 116h2v4h-2zM132 116h2v4h-2zM190 116h2v4h-2zM248 116h2v4h-2zM304 116h2v4h-2zM362 116h2v4h-2zM420 116h2v4h-2zM476 116h2v4h-2zM534 116h2v4h-2zM592 116h2v4h-2zM648 116h2v4h-2z"/>
<path fill="#35607f" d="M734 116h460v4h-460z"/>
<path fill="#2a4c65" d="M764 116h2v4h-2zM820 116h2v4h-2zM878 116h2v4h-2zM936 116h2v4h-2zM992 116h2v4h-2zM1050 116h2v4h-2zM1108 116h2v4h-2zM1164 116h2v4h-2z"/>
<path fill="#35607f" d="M1422 116h918v4h-918z"/>
<path fill="#2a4c65" d="M1452 116h2v4h-2zM1508 116h2v4h-2zM1566 116h2v4h-2zM1624 116h2v4h-2zM1680 116h2v4h-2zM1738 116h2v4h-2zM1796 116h2v4h-2zM1852 116h2v4h-2zM1910 116h2v4h-2zM1968 116h2v4h-2zM2024 116h2v4h-2zM2082 116h2v4h-2zM2140 116h2v4h-2zM2196 116h2v4h-2zM2254 116h2v4h-2zM2312 116h2v4h-2z"/>
<path fill="#35607f" d="M20 122h684v2h-684z"/>
<path fill="#2a4c65" d="M76 122h2v2h-2zM132 122h2v2h-2zM190 122h2v2h-2zM248 122h2v2h-2zM304 122h2v2h-2zM362 122h2v2h-2zM420 122h2v2h-2zM476 122h2v2h-2zM534 122h2v2h-2zM592 122h2v2h-2zM648 122h2v2h-2z"/>
<path fill="#35607f" d="M734 122h460v2h-460z"/>
<path fill="#2a4c65" d="M764 122h2v2h-2zM820 122h2v2h-2zM878 122h2v2h-2zM936 122h2v2h-2zM992 122h2v2h-2zM1050 122h2v2h-2zM1108 122h2v2h-2zM1164 122h2v2h-2z"/>
<path fill="#35607f" d="M1422 122h918v2h-918z"/>
<path fill="#2a4c65" d="M1452 122h2v2h-2zM1508 122h2v2h-2zM1566 122h2v2h-2zM1624 122h2v2h-2zM1680 122h2v2h-2zM1738 122h2v2h-2zM1796 122h2v2h-2zM1852 122h2v2h-2zM1910 122h2v2h-2zM1968 122h2v2h-2zM2024 122h2v2h-2zM2082 122h2v2h-2zM2140 122h2v2h-2zM2196 122h2v2h-2zM2254 122h2v2h-2zM2312 122h2v2h-2z"/>
<path fill="#35607f" d="M476 126h228v2h-228z"/>
<path fill="#2a4c65" d="M476 126h2v2h-2zM534 126h2v2h-2zM592 126h2v2h-2zM648 126h2v2h-2z"/>
<path fill="#35607f" d="M850 126h344v2h-344z"/>
<path fill="#2a4c65" d="M878 126h2v2h-2zM936 126h2v2h-2zM992 126h2v2h-2zM1050 126h2v2h-2zM1108 126h2v2h-2zM1164 126h2v2h-2z"/>
<path fill="#35607f" d="M1538 126h688v2h-688z"/>
<path fill="#2a4c65" d="M1566 126h2v2h-2zM1624 126h2v2h-2zM1680 126h2v2h-2zM1738 126h2v2h-2zM1796 126h2v2h-2zM1852 126h2v2h-2zM1910 126h2v2h-2zM1968 126h2v2h-2zM2024 126h2v2h-2zM2082 126h2v2h-2zM2140 126h2v2h-2zM2196 126h2v2h-2z"/>
<path fill="#35607f" d="M20 130h684v2h-684z"/>
<path fill="#2a4c65" d="M76 130h2v2h-2zM132 130h2v2h-2zM190 130h2v2h-2zM248 130h2v2h-2zM304 130h2v2h-2zM362 130h2v2h-2zM420 130h2v2h-2zM476 130h2v2h-2zM534 130h2v2h-2zM592 130h2v2h-2zM648 130h2v2h-2z"/>
<path fill="#35607f" d="M734 130h460v2h-460z"/>
<path fill="#2a4c65" d="M764 130h2v2h-2zM820 130h2v2h-2zM878 130h2v2h-2zM936 130h2v2h-2zM992 130h2v2h-2zM1050 130h2v2h-2zM1108 130h2v2h-2zM1164 130h2v2h-2z"/>
<path fill="#35607f" d="M1422 130h918v2h-918z"/>
<path fill="#2a4c65" d="M1452 130h2v2h-2zM1508 130h2v2h-2zM1566 130h2v2h-2zM1624 130h2v2h-2zM1680 130h2v2h-2zM1738 130h2v2h-2zM1796 130h2v2h-2zM1852 130h2v2h-2zM1910 130h2v2h-2zM1968 130h2v2h-2zM2024 130h2v2h-2zM2082 130h2v2h-2zM2140 130h2v2h-2zM2196 130h2v2h-2zM2254 130h2v2h-2zM2312 130h2v2h-2z"/>
<path fill="#35607f" d="M132 134h574v4h-574z"/>
<path fill="#2a4c65" d="M132 134h2v4h-2zM190 134h2v4h-2zM248 134h2v4h-2zM304 134h2v4h-2zM362 134h2v4h-2zM420 134h2v4h-2zM476 134h2v4h-2zM534 134h2v4h-2zM592 134h2v4h-2zM648 134h2v4h-2z"/>
<path fill="#35607f" d="M850 134h344v4h-344z"/>
<path fill="#2a4c65" d="M878 134h2v4h-2zM936 134h2v4h-2zM992 134h2v4h-2zM1050 134h2v4h-2zM1108 134h2v4h-2zM1164 134h2v4h-2z"/>
<path fill="#35607f" d="M1538 134h688v4h-688z"/>
<path fill="#2a4c65" d="M1566 134h2v4h-2zM1624 134h2v4h-2zM1680 134h2v4h-2zM1738 134h2v4h-2zM1796 134h2v4h-2zM1852 134h2v4h-2zM1910 134h2v4h-2zM1968 134h2v4h-2zM2024 134h2v4h-2zM2082 134h2v4h-2zM2140 134h2v4h-2zM2196 134h2v4h-2z"/>
<path fill="#35607f" d="M20 140h684v2h-684z"/>
<path fill="#2a4c65" d="M76 140h2v2h-2zM132 140h2v2h-2zM190 140h2v2h-2zM248 140h2v2h-2zM304 140h2v2h-2zM362 140h2v2h-2zM420 140h2v2h-2zM476 140h2v2h-2zM534 140h2v2h-2zM592 140h2v2h-2zM648 140h2v2h-2z"/>
<path fill="#35607f" d="M734 140h460v2h-460z"/>
<path fill="#2a4c65" d="M764 140h2v2h-2zM820 140h2v2h-2zM878 140h2v2h-2zM936 140h2v2h-2zM992 140h2v2h-2zM1050 140h2v2h-2zM1108 140h2v2h-2zM1164 140h2v2h-2z"/>
<path fill="#35607f" d="M1422 140h918v2h-918z"/>
<path fill="#2a4c65" d="M1452 140h2v2h-2zM1508 140h2v2h-2zM1566 140h2v2h-2zM1624 140h2v2h-2zM1680 140h2v2h-2zM1738 140h2v2h-2zM1796 140h2v2h-2zM1852 140h2v2h-2zM1910 140h2v2h-2zM1968 140h2v2h-2zM2024 140h2v2h-2zM2082 140h2v2h-2zM2140 140h2v2h-2zM2196 140h2v2h-2zM2254 140h2v2h-2zM2312 140h2v2h-2z"/>
<path fill="#35607f" d="M20 144h684v2h-684z"/>
<path fill="#2a4c65" d="M76 144h2v2h-2zM132 144h2v2h-2zM190 144h2v2h-2zM248 144h2v2h-2zM304 144h2v2h-2zM362 144h2v2h-2zM420 144h2v2h-2zM476 144h2v2h-2zM534 144h2v2h-2zM592 144h2v2h-2zM648 144h2v2h-2z"/>
<path fill="#35607f" d="M734 144h460v2h-460z"/>
<path fill="#2a4c65" d="M764 144h2v2h-2zM820 144h2v2h-2zM878 144h2v2h-2zM936 144h2v2h-2zM992 144h2v2h-2zM1050 144h2v2h-2zM1108 144h2v2h-2zM1164 144h2v2h-2z"/>
<path fill="#35607f" d="M1422 144h918v2h-918z"/>
<path fill="#2a4c65" d="M1452 144h2v2h-2zM1508 144h2v2h-2zM1566 144h2v2h-2zM1624 144h2v2h-2zM1680 144h2v2h-2zM1738 144h2v2h-2zM1796 144h2v2h-2zM1852 144h2v2h-2zM1910 144h2v2h-2zM1968 144h2v2h-2zM2024 144h2v2h-2zM2082 144h2v2h-2zM2140 144h2v2h-2zM2196 144h2v2h-2zM2254 144h2v2h-2zM2312 144h2v2h-2z"/>
<path fill="#35607f" d="M132 148h574v4h-574z"/>
<path fill="#2a4c65" d="M132 148h2v4h-2zM190 148h2v4h-2zM248 148h2v4h-2zM304 148h2v4h-2zM362 148h2v4h-2zM420 148h2v4h-2zM476 148h2v4h-2zM534 148h2v4h-2zM592 148h2v4h-2zM648 148h2v4h-2z"/>
<path fill="#35607f" d="M850 148h344v4h-344z"/>
<path fill="#2a4c65" d="M878 148h2v4h-2zM936 148h2v4h-2zM992 148h2v4h-2zM1050 148h2v4h-2zM1108 148h2v4h-2zM1164 148h2v4h-2z"/>
<path fill="#35607f" d="M1538 148h688v4h-688z"/>
<path fill="#2a4c65" d="M1566 148h2v4h-2zM1624 148h2v4h-2zM1680 148h2v4h-2zM1738 148h2v4h-2zM1796 148h2v4h-2zM1852 148h2v4h-2zM1910 148h2v4h-2zM1968 148h2v4h-2zM2024 148h2v4h-2zM2082 148h2v4h-2zM2140 148h2v4h-2zM2196 148h2v4h-2z"/>
<path fill="#35607f" d="M132 154h572v2h-572z"/>
<path fill="#2a4c65" d="M132 154h2v2h-2zM190 154h2v2h-2zM248 154h2v2h-2zM304 154h2v2h-2zM362 154h2v2h-2zM420 154h2v2h-2zM476 154h2v2h-2zM534 154h2v2h-2zM592 154h2v2h-2zM648 154h2v2h-2z"/>
<path fill="#35607f" d="M850 154h344v2h-344z"/>
<path fill="#2a4c65" d="M878 154h2v2h-2zM936 154h2v2h-2zM992 154h2v2h-2zM1050 154h2v2h-2zM1108 154h2v2h-2zM1164 154h2v2h-2z"/>
<path fill="#35607f" d="M1538 154h688v2h-688z"/>
<path fill="#2a4c65" d="M1566 154h2v2h-2zM1624 154h2v2h-2zM1680 154h2v2h-2zM1738 154h2v2h-2zM1796 154h2v2h-2zM1852 154h2v2h-2zM1910 154h2v2h-2zM1968 154h2v2h-2zM2024 154h2v2h-2zM2082 154h2v2h-2zM2140 154h2v2h-2zM2196 154h2v2h-2z"/>
<path fill="#35607f" d="M20 158h684v2h-684z"/>
<path fill="#2a4c65" d="M76 158h2v2h-2zM132 158h2v2h-2zM190 158h2v2h-2zM248 158h2v2h-2zM304 158h2v2h-2zM362 158h2v2h-2zM420 158h2v2h-2zM476 158h2v2h-2zM534 158h2v2h-2zM592 158h2v2h-2zM648 158h2v2h-2z"/>
<path fill="#35607f" d="M734 158h460v2h-460z"/>
<path fill="#2a4c65" d="M764 158h2v2h-2zM820 158h2v2h-2zM878 158h2v2h-2zM936 158h2v2h-2zM992 158h2v2h-2zM1050 158h2v2h-2zM1108 158h2v2h-2zM1164 158h2v2h-2z"/>
<path fill="#35607f" d="M1422 158h918v2h-918z"/>
<path fill="#2a4c65" d="M1452 158h2v2h-2zM1508 158h2v2h-2zM1566 158h2v2h-2zM1624 158h2v2h-2zM1680 158h2v2h-2zM1738 158h2v2h-2zM1796 158h2v2h-2zM1852 158h2v2h-2zM1910 158h2v2h-2zM1968 158h2v2h-2zM2024 158h2v2h-2zM2082 158h2v2h-2zM2140 158h2v2h-2zM2196 158h2v2h-2zM2254 158h2v2h-2zM2312 158h2v2h-2z"/>
<path fill="#7f6ad8" d="M448 406h28v4h-28zM706 406h28v4h-28zM2082 406h28v4h-28zM20 412h1174v4h-1174z"/>
<path fill="#6554ac" d="M76 412h2v4h-2zM132 412h2v4h-2zM190 412h2v4h-2zM248 412h2v4h-2zM304 412h2v4h-2zM362 412h2v4h-2zM420 412h2v4h-2zM476 412h2v4h-2zM534 412h2v4h-2zM592 412h2v4h-2zM648 412h2v4h-2zM706 412h2v4h-2zM764 412h2v4h-2zM820 412h2v4h-2zM878 412h2v4h-2zM936 412h2v4h-2zM992 412h2v4h-2zM1050 412h2v4h-2zM1108 412h2v4h-2zM1164 412h2v4h-2z"/>
<path fill="#7f6ad8" d="M1422 412h918v4h-918z"/>
<path fill="#6554ac" d="M1452 412h2v4h-2zM1508 412h2v4h-2zM1566 412h2v4h-2zM1624 412h2v4h-2zM1680 412h2v4h-2zM1738 412h2v4h-2zM1796 412h2v4h-2zM1852 412h2v4h-2zM1910 412h2v4h-2zM1968 412h2v4h-2zM2024 412h2v4h-2zM2082 412h2v4h-2zM2140 412h2v4h-2zM2196 412h2v4h-2zM2254 412h2v4h-2zM2312 412h2v4h-2z"/>
<path fill="#7f6ad8" d="M476 418h230v4h-230z"/>
<path fill="#6554ac" d="M476 418h2v4h-2zM534 418h2v4h-2zM592 418h2v4h-2zM648 418h2v4h-2z"/>
<path fill="#7f6ad8" d="M734 418h1148v4h-1148z"/>
<path fill="#6554ac" d="M764 418h2v4h-2zM820 418h2v4h-2zM878 418h2v4h-2zM936 418h2v4h-2zM992 418h2v4h-2zM1050 418h2v4h-2zM1108 418h2v4h-2zM1164 418h2v4h-2zM1222 418h2v4h-2zM1280 418h2v4h-2zM1336 418h2v4h-2zM1394 418h2v4h-2zM1452 418h2v4h-2zM1508 418h2v4h-2zM1566 418h2v4h-2zM1624 418h2v4h-2zM1680 418h2v4h-2zM1738 418h2v4h-2zM1796 418h2v4h-2zM1852 418h2v4h-2z"/>
<path fill="#7f6ad8" d="M248 436h456v2h-456z"/>
<path fill="#6554ac" d="M248 436h2v2h-2zM304 436h2v2h-2zM362 436h2v2h-2zM420 436h2v2h-2zM476 436h2v2h-2zM534 436h2v2h-2zM592 436h2v2h-2zM648 436h2v2h-2z"/>
<path fill="#7f6ad8" d="M734 436h1374v2h-1374z"/>
<path fill="#6554ac" d="M764 436h2v2h-2zM820 436h2v2h-2zM878 436h2v2h-2zM936 436h2v2h-2zM992 436h2v2h-2zM1050 436h2v2h-2zM1108 436h2v2h-2zM1164 436h2v2h-2zM1222 436h2v2h-2zM1280 436h2v2h-2zM1336 436h2v2h-2zM1394 436h2v2h-2zM1452 436h2v2h-2zM1508 436h2v2h-2zM1566 436h2v2h-2zM1624 436h2v2h-2zM1680 436h2v2h-2zM1738 436h2v2h-2zM1796 436h2v2h-2zM1852 436h2v2h-2zM1910 436h2v2h-2zM1968 436h2v2h-2zM2024 436h2v2h-2zM2082 436h2v2h-2z"/>
<path fill="#7f6ad8" d="M964 440h918v4h-918z"/>
<path fill="#6554ac" d="M992 440h2v4h-2zM1050 440h2v4h-2zM1108 440h2v4h-2zM1164 440h2v4h-2zM1222 440h2v4h-2zM1280 440h2v4h-2zM1336 440h2v4h-2zM1394 440h2v4h-2zM1452 440h2v4h-2zM1508 440h2v4h-2zM1566 440h2v4h-2zM1624 440h2v4h-2zM1680 440h2v4h-2zM1738 440h2v4h-2zM1796 440h2v4h-2zM1852 440h2v4h-2z"/>
<path fill="#7f6ad8" d="M20 446h686v4h-686z"/>
<path fill="#6554ac" d="M76 446h2v4h-2zM132 446h2v4h-2zM190 446h2v4h-2zM248 446h2v4h-2zM304 446h2v4h-2zM362 446h2v4h-2zM420 446h2v4h-2zM476 446h2v4h-2zM534 446h2v4h-2zM592 446h2v4h-2zM648 446h2v4h-2z"/>
<path fill="#7f6ad8" d="M706 446h28v4h-28z"/>
<path fill="#6554ac" d="M706 446h2v4h-2z"/>
<path fill="#7f6ad8" d="M734 446h1606v4h-1606z"/>
<path fill="#6554ac" d="M764 446h2v4h-2zM820 446h2v4h-2zM878 446h2v4h-2zM936 446h2v4h-2zM992 446h2v4h-2zM1050 446h2v4h-2zM1108 446h2v4h-2zM1164 446h2v4h-2zM1222 446h2v4h-2zM1280 446h2v4h-2zM1336 446h2v4h-2zM1394 446h2v4h-2zM1452 446h2v4h-2zM1508 446h2v4h-2zM1566 446h2v4h-2zM1624 446h2v4h-2zM1680 446h2v4h-2zM1738 446h2v4h-2zM1796 446h2v4h-2zM1852 446h2v4h-2zM1910 446h2v4h-2zM1968 446h2v4h-2zM2024 446h2v4h-2zM2082 446h2v4h-2zM2140 446h2v4h-2zM2196 446h2v4h-2zM2254 446h2v4h-2zM2312 446h2v4h-2z"/>
<path fill="#7f6ad8" d="M20 452h686v4h-686z"/>
<path fill="#6554ac" d="M76 452h2v4h-2zM132 452h2v4h-2zM190 452h2v4h-2zM248 452h2v4h-2zM304 452h2v4h-2zM362 452h2v4h-2zM420 452h2v4h-2zM476 452h2v4h-2zM534 452h2v4h-2zM592 452h2v4h-2zM648 452h2v4h-2z"/>
<path fill="#7f6ad8" d="M706 452h28v4h-28z"/>
<path fill="#6554ac" d="M706 452h2v4h-2z"/>
<path fill="#7f6ad8" d="M734 452h1606v4h-1606z"/>
<path fill="#6554ac" d="M764 452h2v4h-2zM820 452h2v4h-2zM878 452h2v4h-2zM936 452h2v4h-2zM992 452h2v4h-2zM1050 452h2v4h-2zM1108 452h2v4h-2zM1164 452h2v4h-2zM1222 452h2v4h-2zM1280 452h2v4h-2zM1336 452h2v4h-2zM1394 452h2v4h-2zM1452 452h2v4h-2zM1508 452h2v4h-2zM1566 452h2v4h-2zM1624 452h2v4h-2zM1680 452h2v4h-2zM1738 452h2v4h-2zM1796 452h2v4h-2zM1852 452h2v4h-2zM1910 452h2v4h-2zM1968 452h2v4h-2zM2024 452h2v4h-2zM2082 452h2v4h-2zM2140 452h2v4h-2zM2196 452h2v4h-2zM2254 452h2v4h-2zM2312 452h2v4h-2z"/>
<path fill="#7f6ad8" d="M136 424h4v4h-4zM144 424h4v4h-4zM151 424h4v4h-4zM158 424h11v4h-11zM172 424h11v4h-11zM187 424h11v4h-11zM201 424h4v4h-4zM208 424h11v4h-11zM222 424h4v4h-4zM230 424h4v4h-4zM237 424h4v4h-4zM244 424h4v4h-4zM251 424h1.5v4h-1.5zM258 424h4v4h-4zM265 424h1.5v4h-1.5zM273 424h4v4h-4zM280 424h4v4h-4zM287 424h11v4h-11zM301 424h4v4h-4zM308 424h4v4h-4zM316 424h4v4h-4zM323 424h4v4h-4zM330 424h1.5v4h-1.5zM337 424h4v4h-4zM344 424h4v4h-4zM352 424h4v4h-4zM359 424h4v4h-4zM366 424h1.5v4h-1.5zM373 424h11v4h-11zM387 424h4v4h-4zM395 424h4v4h-4zM402 424h4v4h-4zM409 424h4v4h-4zM416 424h4v4h-4zM423 424h4v4h-4zM430 424h11v4h-11zM445 424h4v4h-4zM452 424h4v4h-4zM459 424h4v4h-4zM466 424h11v4h-11zM481 424h1.5v4h-1.5zM488 424h11v4h-11zM502 424h11v4h-11zM516 424h4v4h-4zM524 424h11v4h-11zM538 424h4v4h-4zM545 424h4v4h-4zM552 424h4v4h-4zM559 424h4v4h-4zM567 424h4v4h-4zM574 424h1.5v4h-1.5zM581 424h1.5v4h-1.5zM588 424h4v4h-4zM595 424h11v4h-11zM610 424h4v4h-4zM617 424h4v4h-4zM624 424h4v4h-4zM631 424h4v4h-4zM638 424h4v4h-4zM645 424h4v4h-4zM653 424h4v4h-4zM660 424h11v4h-11zM674 424h11v4h-11zM688 424h1.5v4h-1.5zM696 424h4v4h-4zM703 424h3.24v4h-3.24zM739 424h11v4h-11zM753 424h11v4h-11zM767 424h4v4h-4zM774 424h1.5v4h-1.5zM782 424h4v4h-4zM789 424h4v4h-4zM796 424h4v4h-4zM803 424h11v4h-11zM817 424h4v4h-4zM825 424h4v4h-4zM832 424h11v4h-11zM846 424h4v4h-4zM853 424h4v4h-4zM860 424h4v4h-4zM868 424h4v4h-4zM875 424h4v4h-4zM882 424h1.5v4h-1.5zM889 424h4v4h-4zM896 424h4v4h-4zM903 424h4v4h-4zM911 424h4v4h-4zM918 424h4v4h-4zM925 424h1.5v4h-1.5zM932 424h4v4h-4zM939 424h11v4h-11zM954 424h1.5v4h-1.5zM961 424h4v4h-4zM968 424h4v4h-4zM975 424h4v4h-4zM982 424h1.5v4h-1.5zM989 424h1.5v4h-1.5zM997 424h4v4h-4zM1004 424h4v4h-4zM1011 424h4v4h-4zM1018 424h11v4h-11zM1032 424h4v4h-4zM1040 424h4v4h-4zM1047 424h1.5v4h-1.5zM1054 424h4v4h-4zM1061 424h4v4h-4zM1068 424h4v4h-4zM1075 424h4v4h-4zM1083 424h11v4h-11zM1097 424h4v4h-4zM1104 424h1.5v4h-1.5zM1111 424h4v4h-4zM1118 424h4v4h-4zM1126 424h11v4h-11zM1140 424h4v4h-4zM1147 424h4v4h-4zM1154 424h4v4h-4zM1162 424h4v4h-4zM1169 424h1.5v4h-1.5zM1176 424h1.5v4h-1.5zM1183 424h1.5v4h-1.5zM1190 424h11v4h-11zM1205 424h4v4h-4zM1212 424h4v4h-4zM1219 424h4v4h-4zM1226 424h4v4h-4zM1233 424h4v4h-4zM1240 424h4v4h-4zM1248 424h11v4h-11zM1262 424h1.5v4h-1.5zM1269 424h4v4h-4zM1276 424h4v4h-4zM1283 424h4v4h-4zM1291 424h11v4h-11zM1305 424h1.5v4h-1.5zM1312 424h4v4h-4zM1319 424h4v4h-4zM1326 424h4v4h-4zM1334 424h4v4h-4zM1341 424h4v4h-4zM1348 424h4v4h-4zM1355 424h4v4h-4zM1362 424h4v4h-4zM1369 424h4v4h-4zM1377 424h4v4h-4zM1384 424h4v4h-4zM1391 424h11v4h-11zM1405 424h11v4h-11zM1420 424h11v4h-11zM1434 424h4v4h-4zM1441 424h1.5v4h-1.5zM1448 424h4v4h-4zM1455 424h4v4h-4zM1463 424h1.5v4h-1.5zM1470 424h4v4h-4zM1477 424h4v4h-4zM1484 424h1.5v4h-1.5zM1491 424h4v4h-4zM1498 424h1.5v4h-1.5zM1506 424h4v4h-4zM1513 424h4v4h-4zM1520 424h11v4h-11zM1534 424h4v4h-4zM1541 424h11v4h-11zM1556 424h4v4h-4zM1563 424h11v4h-11zM1577 424h11v4h-11zM1592 424h4v4h-4zM1599 424h4v4h-4zM1606 424h4v4h-4zM1613 424h1.5v4h-1.5zM1620 424h4v4h-4zM1627 424h11v4h-11zM1642 424h4v4h-4zM1649 424h11v4h-11zM1663 424h4v4h-4zM1670 424h11v4h-11zM1685 424h11v4h-11zM1699 424h4v4h-4zM1706 424h4v4h-4zM1713 424h4v4h-4zM1721 424h4v4h-4zM1728 424h11v4h-11zM1742 424h11v4h-11zM1756 424h4v4h-4zM1764 424h4v4h-4zM1771 424h4v4h-4zM1778 424h4v4h-4zM1785 424h1.5v4h-1.5zM1792 424h4v4h-4zM1799 424h1.5v4h-1.5zM1807 424h4v4h-4zM1814 424h4v4h-4zM1821 424h4v4h-4zM1828 424h4v4h-4zM1835 424h4v4h-4zM1843 424h4v4h-4zM1850 424h4v4h-4zM1857 424h4v4h-4zM1864 424h11v4h-11zM1878 424h11v4h-11zM1893 424h1.5v4h-1.5zM1900 424h11v4h-11zM1914 424h4v4h-4zM1921 424h4v4h-4zM1929 424h4v4h-4zM1936 424h1.5v4h-1.5zM1943 424h4v4h-4zM1950 424h4v4h-4zM1957 424h1.5v4h-1.5zM1964 424h4v4h-4zM1972 424h11v4h-11zM1986 424h4v4h-4zM1993 424h1.5v4h-1.5zM2000 424h11v4h-11zM2015 424h11v4h-11zM2029 424h11v4h-11zM2043 424h4v4h-4zM2050 424h4v4h-4zM2058 424h4v4h-4zM2065 424h4v4h-4zM2072 424h4v4h-4zM2079 424h4v4h-4zM2086 424h4v4h-4zM2093 424h11v4h-11zM2108 424h4v4h-4zM2115 424h4v4h-4zM2122 424h11v4h-11zM2136 424h4v4h-4zM2144 424h4v4h-4zM2151 424h4v4h-4zM2158 424h4v4h-4zM2165 424h1.5v4h-1.5zM2172 424h11v4h-11zM2187 424h11v4h-11zM2201 424h4v4h-4zM2208 424h4v4h-4zM2215 424h4v4h-4zM2222 424h3.56v4h-3.56zM22 430h4v4h-4zM29 430h4v4h-4zM36 430h4v4h-4zM43 430h1.5v4h-1.5zM50 430h4v4h-4zM58 430h4v4h-4zM65 430h4v4h-4zM72 430h4v4h-4zM79 430h4v4h-4zM86 430h4v4h-4zM93 430h4v4h-4zM101 430h4v4h-4zM108 430h4v4h-4zM115 430h1.5v4h-1.5zM122 430h4v4h-4zM136 430h4v4h-4zM144 430h4v4h-4zM151 430h4v4h-4zM158 430h4v4h-4zM165 430h4v4h-4zM172 430h11v4h-11zM187 430h4v4h-4zM194 430h4v4h-4zM201 430h4v4h-4zM208 430h4v4h-4zM215 430h1.5v4h-1.5zM222 430h4v4h-4zM230 430h4v4h-4zM237 430h4v4h-4zM244 430h4v4h-4zM251 430h4v4h-4zM258 430h11v4h-11zM273 430h4v4h-4zM280 430h1.5v4h-1.5zM287 430h4v4h-4zM294 430h11v4h-11zM308 430h4v4h-4zM316 430h4v4h-4zM323 430h4v4h-4zM330 430h4v4h-4zM337 430h4v4h-4zM344 430h4v4h-4zM352 430h4v4h-4zM359 430h1.5v4h-1.5zM366 430h4v4h-4zM373 430h4v4h-4zM380 430h4v4h-4zM387 430h4v4h-4zM395 430h4v4h-4zM402 430h4v4h-4zM409 430h4v4h-4zM416 430h4v4h-4zM423 430h4v4h-4zM430 430h4v4h-4zM438 430h4v4h-4zM445 430h4v4h-4zM452 430h4v4h-4zM459 430h4v4h-4zM466 430h4v4h-4zM473 430h4v4h-4zM481 430h4v4h-4zM488 430h4v4h-4zM495 430h4v4h-4zM502 430h4v4h-4zM509 430h4v4h-4zM516 430h4v4h-4zM524 430h4v4h-4zM531 430h4v4h-4zM538 430h4v4h-4zM545 430h4v4h-4zM552 430h4v4h-4zM559 430h4v4h-4zM567 430h4v4h-4zM574 430h1.5v4h-1.5zM581 430h4v4h-4zM588 430h4v4h-4zM595 430h4v4h-4zM602 430h4v4h-4zM610 430h4v4h-4zM617 430h4v4h-4zM624 430h4v4h-4zM631 430h1.5v4h-1.5zM638 430h4v4h-4zM645 430h4v4h-4zM653 430h4v4h-4zM660 430h4v4h-4zM667 430h4v4h-4zM674 430h1.5v4h-1.5zM681 430h4v4h-4zM688 430h4v4h-4zM696 430h4v4h-4zM703 430h3.24v4h-3.24zM739 430h1.5v4h-1.5zM746 430h4v4h-4zM753 430h4v4h-4zM760 430h1.5v4h-1.5zM767 430h4v4h-4zM774 430h1.5v4h-1.5zM782 430h4v4h-4zM789 430h4v4h-4zM796 430h4v4h-4zM803 430h4v4h-4zM810 430h4v4h-4zM817 430h4v4h-4zM825 430h4v4h-4zM832 430h4v4h-4zM839 430h4v4h-4zM846 430h4v4h-4zM853 430h4v4h-4zM860 430h4v4h-4zM868 430h4v4h-4zM875 430h4v4h-4zM882 430h4v4h-4zM889 430h4v4h-4zM896 430h4v4h-4zM903 430h4v4h-4zM911 430h4v4h-4zM918 430h4v4h-4zM925 430h4v4h-4zM932 430h4v4h-4zM939 430h4v4h-4zM946 430h4v4h-4zM954 430h1.5v4h-1.5zM961 430h4v4h-4zM968 430h1.5v4h-1.5zM975 430h1.5v4h-1.5zM982 430h4v4h-4zM989 430h4v4h-4zM997 430h4v4h-4zM1004 430h4v4h-4zM1011 430h4v4h-4zM1018 430h4v4h-4zM1025 430h4v4h-4zM1032 430h4v4h-4zM1040 430h4v4h-4zM1047 430h4v4h-4zM1054 430h4v4h-4zM1061 430h4v4h-4zM1068 430h4v4h-4zM1075 430h1.5v4h-1.5zM1083 430h4v4h-4zM1090 430h4v4h-4zM1097 430h4v4h-4zM1104 430h4v4h-4zM1111 430h4v4h-4zM1118 430h1.5v4h-1.5zM1126 430h4v4h-4zM1133 430h4v4h-4zM1140 430h4v4h-4zM1147 430h4v4h-4zM1154 430h4v4h-4zM1162 430h4v4h-4zM1169 430h11v4h-11zM1183 430h4v4h-4zM1190 430h4v4h-4zM1197 430h4v4h-4zM1205 430h4v4h-4zM1212 430h4v4h-4zM1219 430h4v4h-4zM1226 430h4v4h-4zM1233 430h4v4h-4zM1240 430h4v4h-4zM1248 430h4v4h-4zM1255 430h4v4h-4zM1262 430h4v4h-4zM1269 430h4v4h-4zM1276 430h4v4h-4zM1283 430h1.5v4h-1.5zM1291 430h4v4h-4zM1298 430h4v4h-4zM1305 430h4v4h-4zM1312 430h1.5v4h-1.5zM1319 430h4v4h-4zM1326 430h4v4h-4zM1334 430h4v4h-4zM1341 430h4v4h-4zM1348 430h4v4h-4zM1355 430h4v4h-4zM1362 430h4v4h-4zM1369 430h4v4h-4zM1377 430h4v4h-4zM1384 430h4v4h-4zM1391 430h4v4h-4zM1398 430h4v4h-4zM1405 430h4v4h-4zM1412 430h4v4h-4zM1420 430h4v4h-4zM1427 430h4v4h-4zM1434 430h4v4h-4zM1441 430h1.5v4h-1.5zM1448 430h1.5v4h-1.5zM1455 430h4v4h-4zM1463 430h4v4h-4zM1470 430h4v4h-4zM1477 430h4v4h-4zM1484 430h4v4h-4zM1491 430h4v4h-4zM1498 430h4v4h-4zM1506 430h1.5v4h-1.5zM1513 430h4v4h-4zM1520 430h4v4h-4zM1527 430h11v4h-11zM1541 430h4v4h-4zM1549 430h4v4h-4zM1556 430h4v4h-4zM1563 430h1.5v4h-1.5zM1570 430h4v4h-4zM1577 430h4v4h-4zM1584 430h4v4h-4zM1592 430h4v4h-4zM1599 430h4v4h-4zM1606 430h4v4h-4zM1613 430h4v4h-4zM1620 430h4v4h-4zM1627 430h4v4h-4zM1635 430h4v4h-4zM1642 430h11v4h-11zM1656 430h4v4h-4zM1663 430h4v4h-4zM1670 430h4v4h-4zM1678 430h11v4h-11zM1692 430h4v4h-4zM1699 430h1.5v4h-1.5zM1706 430h4v4h-4zM1713 430h1.5v4h-1.5zM1721 430h4v4h-4zM1728 430h1.5v4h-1.5zM1735 430h4v4h-4zM1742 430h4v4h-4zM1749 430h4v4h-4zM1756 430h4v4h-4zM1764 430h4v4h-4zM1771 430h4v4h-4zM1778 430h4v4h-4zM1785 430h4v4h-4zM1792 430h4v4h-4zM1799 430h4v4h-4zM1807 430h4v4h-4zM1814 430h4v4h-4zM1821 430h1.5v4h-1.5zM1828 430h4v4h-4zM1835 430h1.5v4h-1.5zM1843 430h4v4h-4zM1850 430h4v4h-4zM1857 430h4v4h-4zM1864 430h4v4h-4zM1871 430h4v4h-4zM1878 430h4v4h-4zM1886 430h4v4h-4zM1893 430h11v4h-11zM1907 430h4v4h-4zM1914 430h4v4h-4zM1921 430h4v4h-4zM1929 430h4v4h-4zM1936 430h1.5v4h-1.5zM1943 430h1.5v4h-1.5zM1950 430h4v4h-4zM1957 430h4v4h-4zM1964 430h4v4h-4zM1972 430h4v4h-4zM1979 430h4v4h-4zM1986 430h4v4h-4zM1993 430h4v4h-4zM2000 430h4v4h-4zM2007 430h4v4h-4zM2015 430h4v4h-4zM2022 430h4v4h-4zM2029 430h4v4h-4zM2036 430h1.5v4h-1.5zM2043 430h4v4h-4zM2050 430h4v4h-4zM2058 430h4v4h-4zM2065 430h4v4h-4zM2072 430h4v4h-4zM2079 430h4v4h-4zM2086 430h1.5v4h-1.5zM2093 430h4v4h-4zM2101 430h4v4h-4zM2115 430h4v4h-4zM2122 430h1.5v4h-1.5zM2129 430h4v4h-4zM2136 430h4v4h-4zM2143 430h4v4h-4zM2151 430h1.5v4h-1.5zM2158 430h4v4h-4zM2165 430h4v4h-4zM2172 430h4v4h-4zM2179 430h4v4h-4zM2187 430h4v4h-4zM2194 430h4v4h-4zM2201 430h4v4h-4zM2208 430h4v4h-4zM2215 430h4v4h-4zM2222 430h4v4h-4zM2230 430h1.5v4h-1.5zM2237 430h4v4h-4zM2244 430h4v4h-4zM2251 430h4v4h-4zM2258 430h4v4h-4zM2265 430h1.5v4h-1.5zM2273 430h1.5v4h-1.5zM2280 430h4v4h-4zM2287 430h4v4h-4zM2294 430h4v4h-4zM2301 430h4v4h-4zM2308 430h4v4h-4zM2316 430h1.5v4h-1.5zM2323 430h4v4h-4zM2330 430h4v4h-4z"/>
<path fill="#99a3f0" d="M476 1350h58v4h-58z"/>
<path fill="#7a82c0" d="M476 1350h2v4h-2z"/>
<path fill="#99a3f0" d="M734 1350h58v4h-58z"/>
<path fill="#7a82c0" d="M764 1350h2v4h-2z"/>
<path fill="#99a3f0" d="M1422 1350h58v4h-58z"/>
<path fill="#7a82c0" d="M1452 1350h2v4h-2z"/>
<path fill="#99a3f0" d="M592 1332h114v4h-114z"/>
<path fill="#7a82c0" d="M592 1332h2v4h-2zM648 1332h2v4h-2z"/>
<path fill="#99a3f0" d="M592 1338h114v4h-114z"/>
<path fill="#7a82c0" d="M592 1338h2v4h-2zM648 1338h2v4h-2z"/>
<path fill="#99a3f0" d="M1308 1332h114v4h-114z"/>
<path fill="#7a82c0" d="M1336 1332h2v4h-2zM1394 1332h2v4h-2z"/>
<path fill="#99a3f0" d="M1308 1338h114v4h-114z"/>
<path fill="#7a82c0" d="M1336 1338h2v4h-2zM1394 1338h2v4h-2z"/>
<path fill="#99a3f0" d="M1164 1344h72v4h-72z"/>
<path fill="#7a82c0" d="M1164 1344h2v4h-2zM1222 1344h2v4h-2z"/>
<path fill="#99a3f0" d="M1852 1344h72v4h-72z"/>
<path fill="#7a82c0" d="M1852 1344h2v4h-2zM1910 1344h2v4h-2z"/>
<path fill="#99a3f0" d="M2312 1344h72v4h-72z"/>
<path fill="#7a82c0" d="M2312 1344h2v4h-2zM2368 1344h2v4h-2z"/>
<path fill="#c9a040" d="M478 1364h14v4h-14zM534 1364h8v4h-8zM594 1364h6v4h-6zM648 1364h16v4h-16zM478 1382h14v4h-14zM534 1382h8v4h-8zM594 1382h6v4h-6zM648 1382h16v4h-16zM1250 1370h58v4h-58z"/>
<path fill="#a08033" d="M1280 1370h2v4h-2z"/>
<path fill="#c9a040" d="M1308 1376h136v4h-136z"/>
<path fill="#a08033" d="M1336 1376h2v4h-2zM1394 1376h2v4h-2z"/>
<path fill="#c9a040" d="M1424 1382h20v4h-20zM1308 1388h136v4h-136z"/>
<path fill="#a08033" d="M1336 1388h2v4h-2zM1394 1388h2v4h-2z"/>
<path fill="#9b9b9b" d="M18 58h2v1382h-2zM476 82h2v1358h-2zM592 82h2v1358h-2zM734 82h2v1358h-2zM1422 82h2v1358h-2zM1882 82h2v1358h-2zM2384 80h2v1360h-2z"/>
<path fill="#e6ffff" d="M18 1360h2v34h-2z"/>
<path fill="#a6a6a6" d="M18 46h2v12h-2zM20 46h2v2h-2zM132 46h2v12h-2zM134 46h2v2h-2zM248 46h2v12h-2zM250 46h2v2h-2zM362 46h2v12h-2zM364 46h2v2h-2zM476 46h2v12h-2zM478 46h2v2h-2zM592 46h2v12h-2zM594 46h2v2h-2zM706 46h2v12h-2zM708 46h2v2h-2zM820 46h2v12h-2zM822 46h2v2h-2zM936 46h2v12h-2zM938 46h2v2h-2zM1050 46h2v12h-2zM1052 46h2v2h-2zM1164 46h2v12h-2zM1166 46h2v2h-2zM1280 46h2v12h-2zM1282 46h2v2h-2zM1394 46h2v12h-2zM1396 46h2v2h-2zM1508 46h2v12h-2zM1510 46h2v2h-2zM1624 46h2v12h-2zM1626 46h2v2h-2zM1738 46h2v12h-2zM1740 46h2v2h-2zM1852 46h2v12h-2zM1854 46h2v2h-2zM1968 46h2v12h-2zM1970 46h2v2h-2zM2082 46h2v12h-2zM2084 46h2v2h-2zM2196 46h2v12h-2zM2198 46h2v2h-2zM2312 46h2v12h-2zM2314 46h2v2h-2zM76 56h2v2h-2zM190 56h2v2h-2zM304 56h2v2h-2zM420 56h2v2h-2zM534 56h2v2h-2zM648 56h2v2h-2zM764 56h2v2h-2zM878 56h2v2h-2zM992 56h2v2h-2zM1108 56h2v2h-2zM1222 56h2v2h-2zM1336 56h2v2h-2zM1452 56h2v2h-2zM1566 56h2v2h-2zM1680 56h2v2h-2zM1796 56h2v2h-2zM1910 56h2v2h-2zM2024 56h2v2h-2zM2140 56h2v2h-2zM2254 56h2v2h-2zM2368 56h2v2h-2z"/>
<path fill="#9a9a9a" d="M18 58h2368v22h-2368z"/>
<path fill="#5e5e5e" d="M20 60h2364v18h-2364z"/>
<g shape-rendering="geometricPrecision" fill="#666" stroke="#a0a0a0" stroke-width="1.6" stroke-linejoin="miter">
<path d="M20 60.5L37 69 20 77.5z"/><path d="M2384 60.5L2367 69 2384 77.5z"/>
<path d="M19 82.5L37 93 19 103.5z"/>
<path d="M477 82.5L495 93 477 103.5z"/>
<path d="M593 82.5L611 93 593 103.5z"/>
<path d="M735 82.5L753 93 735 103.5z"/>
<path d="M1423 82.5L1441 93 1423 103.5z"/>
<path d="M1883 82.5L1901 93 1883 103.5z"/>
</g>
<g filter="url(#nf)" shape-rendering="geometricPrecision" style="font-family:'Liberation Sans',sans-serif">
<text x="28.5" y="54" font-size="19.5" fill="#a6a6a6" font-weight="normal" letter-spacing="1.1" text-anchor="start">1</text>
<text x="142.5" y="54" font-size="19.5" fill="#a6a6a6" font-weight="normal" letter-spacing="1.1" text-anchor="start">9</text>
<text x="258.5" y="54" font-size="19.5" fill="#a6a6a6" font-weight="normal" letter-spacing="1.1" text-anchor="start">17</text>
<text x="372.5" y="54" font-size="19.5" fill="#a6a6a6" font-weight="normal" letter-spacing="1.1" text-anchor="start">25</text>
<text x="486.5" y="54" font-size="19.5" fill="#a6a6a6" font-weight="normal" letter-spacing="1.1" text-anchor="start">33</text>
<text x="602.5" y="54" font-size="19.5" fill="#a6a6a6" font-weight="normal" letter-spacing="1.1" text-anchor="start">41</text>
<text x="716.5" y="54" font-size="19.5" fill="#a6a6a6" font-weight="normal" letter-spacing="1.1" text-anchor="start">49</text>
<text x="830.5" y="54" font-size="19.5" fill="#a6a6a6" font-weight="normal" letter-spacing="1.1" text-anchor="start">57</text>
<text x="946.5" y="54" font-size="19.5" fill="#a6a6a6" font-weight="normal" letter-spacing="1.1" text-anchor="start">65</text>
<text x="1060.5" y="54" font-size="19.5" fill="#a6a6a6" font-weight="normal" letter-spacing="1.1" text-anchor="start">73</text>
<text x="1174.5" y="54" font-size="19.5" fill="#a6a6a6" font-weight="normal" letter-spacing="1.1" text-anchor="start">81</text>
<text x="1290.5" y="54" font-size="19.5" fill="#a6a6a6" font-weight="normal" letter-spacing="1.1" text-anchor="start">89</text>
<text x="1404.5" y="54" font-size="19.5" fill="#a6a6a6" font-weight="normal" letter-spacing="1.1" text-anchor="start">97</text>
<text x="1518.5" y="54" font-size="19.5" fill="#a6a6a6" font-weight="normal" letter-spacing="1.1" text-anchor="start">105</text>
<text x="1634.5" y="54" font-size="19.5" fill="#a6a6a6" font-weight="normal" letter-spacing="1.1" text-anchor="start">113</text>
<text x="1748.5" y="54" font-size="19.5" fill="#a6a6a6" font-weight="normal" letter-spacing="1.1" text-anchor="start">121</text>
<text x="1862.5" y="54" font-size="19.5" fill="#a6a6a6" font-weight="normal" letter-spacing="1.1" text-anchor="start">129</text>
<text x="1978.5" y="54" font-size="19.5" fill="#a6a6a6" font-weight="normal" letter-spacing="1.1" text-anchor="start">137</text>
<text x="2092.5" y="54" font-size="19.5" fill="#a6a6a6" font-weight="normal" letter-spacing="1.1" text-anchor="start">145</text>
<text x="2206.5" y="54" font-size="19.5" fill="#a6a6a6" font-weight="normal" letter-spacing="1.1" text-anchor="start">153</text>
<text x="2322.5" y="54" font-size="19.5" fill="#a6a6a6" font-weight="normal" letter-spacing="1.1" text-anchor="start">161</text>
<rect x="40" y="82" width="51" height="22" fill="#343434" shape-rendering="crispEdges"/>
<text x="42.6" y="100" font-size="20" fill="#c8c8c8" textLength="46.8" lengthAdjust="spacing">intro</text>
<rect x="498" y="82" width="59" height="22" fill="#343434" shape-rendering="crispEdges"/>
<text x="500.6" y="100" font-size="20" fill="#c8c8c8" textLength="55" lengthAdjust="spacing">break</text>
<rect x="614" y="82" width="83" height="22" fill="#343434" shape-rendering="crispEdges"/>
<text x="616.6" y="100" font-size="20" fill="#c8c8c8" textLength="79.2" lengthAdjust="spacing">Build Up</text>
<rect x="756" y="82" width="50" height="22" fill="#343434" shape-rendering="crispEdges"/>
<text x="758.6" y="100" font-size="20" fill="#c8c8c8" textLength="46" lengthAdjust="spacing">Drop</text>
<rect x="1444" y="82" width="65" height="22" fill="#343434" shape-rendering="crispEdges"/>
<text x="1446.6" y="100" font-size="20" fill="#c8c8c8" textLength="61" lengthAdjust="spacing">drop 2</text>
<rect x="1904" y="82" width="57" height="22" fill="#343434" shape-rendering="crispEdges"/>
<text x="1906.6" y="100" font-size="20" fill="#c8c8c8" textLength="52.6" lengthAdjust="spacing">outro</text>
</g>
<path fill="#999999" d="M18 1440h2v16h-2zM20 1454h2v2h-2z"/>
<path fill="#8c8c8c" d="M56 1440h2v4h-2zM92 1440h2v4h-2zM130 1440h2v4h-2zM166 1440h2v4h-2zM204 1440h2v4h-2z"/>
<path fill="#999999" d="M240 1440h2v16h-2zM242 1454h2v2h-2z"/>
<path fill="#8c8c8c" d="M278 1440h2v4h-2zM314 1440h2v4h-2zM352 1440h2v4h-2zM388 1440h2v4h-2zM426 1440h2v4h-2z"/>
<path fill="#999999" d="M462 1440h2v16h-2zM464 1454h2v2h-2z"/>
<path fill="#8c8c8c" d="M500 1440h2v4h-2zM536 1440h2v4h-2zM574 1440h2v4h-2zM610 1440h2v4h-2zM648 1440h2v4h-2z"/>
<path fill="#999999" d="M684 1440h2v16h-2zM686 1454h2v2h-2z"/>
<path fill="#8c8c8c" d="M722 1440h2v4h-2zM758 1440h2v4h-2zM796 1440h2v4h-2zM832 1440h2v4h-2zM870 1440h2v4h-2z"/>
<path fill="#999999" d="M906 1440h2v16h-2zM908 1454h2v2h-2z"/>
<path fill="#8c8c8c" d="M944 1440h2v4h-2zM980 1440h2v4h-2zM1018 1440h2v4h-2zM1056 1440h2v4h-2zM1092 1440h2v4h-2z"/>
<path fill="#999999" d="M1130 1440h2v16h-2zM1132 1454h2v2h-2z"/>
<path fill="#8c8c8c" d="M1166 1440h2v4h-2zM1204 1440h2v4h-2zM1240 1440h2v4h-2zM1278 1440h2v4h-2zM1314 1440h2v4h-2z"/>
<path fill="#999999" d="M1352 1440h2v16h-2zM1354 1454h2v2h-2z"/>
<path fill="#8c8c8c" d="M1388 1440h2v4h-2zM1426 1440h2v4h-2zM1462 1440h2v4h-2zM1500 1440h2v4h-2zM1536 1440h2v4h-2z"/>
<path fill="#999999" d="M1574 1440h2v16h-2zM1576 1454h2v2h-2z"/>
<path fill="#8c8c8c" d="M1610 1440h2v4h-2zM1648 1440h2v4h-2zM1684 1440h2v4h-2zM1722 1440h2v4h-2zM1758 1440h2v4h-2z"/>
<path fill="#999999" d="M1796 1440h2v16h-2zM1798 1454h2v2h-2z"/>
<path fill="#8c8c8c" d="M1832 1440h2v4h-2zM1870 1440h2v4h-2zM1906 1440h2v4h-2zM1944 1440h2v4h-2zM1980 1440h2v4h-2z"/>
<path fill="#999999" d="M2018 1440h2v16h-2zM2020 1454h2v2h-2z"/>
<path fill="#8c8c8c" d="M2054 1440h2v4h-2zM2092 1440h2v4h-2zM2128 1440h2v4h-2zM2166 1440h2v4h-2zM2202 1440h2v4h-2z"/>
<path fill="#999999" d="M2240 1440h2v16h-2zM2242 1454h2v2h-2z"/>
<path fill="#8c8c8c" d="M2276 1440h2v4h-2zM2314 1440h2v4h-2zM2350 1440h2v4h-2zM2388 1440h2v4h-2z"/>
<path d="M18 1442L18 1450 26.5 1450z" fill="#46c3dc" shape-rendering="geometricPrecision"/>
<g filter="url(#nf)" shape-rendering="geometricPrecision" style="font-family:'Liberation Sans',sans-serif">
<text x="24.5" y="1462.3" font-size="20" fill="#999999" font-weight="normal" letter-spacing="0.4" text-anchor="start">0:00</text>
<text x="246.5" y="1462.3" font-size="20" fill="#999999" font-weight="normal" letter-spacing="0.4" text-anchor="start">0:30</text>
<text x="468.5" y="1462.3" font-size="20" fill="#999999" font-weight="normal" letter-spacing="0.4" text-anchor="start">1:00</text>
<text x="690.5" y="1462.3" font-size="20" fill="#999999" font-weight="normal" letter-spacing="0.4" text-anchor="start">1:30</text>
<text x="912.5" y="1462.3" font-size="20" fill="#999999" font-weight="normal" letter-spacing="0.4" text-anchor="start">2:00</text>
<text x="1136.5" y="1462.3" font-size="20" fill="#999999" font-weight="normal" letter-spacing="0.4" text-anchor="start">2:30</text>
<text x="1358.5" y="1462.3" font-size="20" fill="#999999" font-weight="normal" letter-spacing="0.4" text-anchor="start">3:00</text>
<text x="1580.5" y="1462.3" font-size="20" fill="#999999" font-weight="normal" letter-spacing="0.4" text-anchor="start">3:30</text>
<text x="1802.5" y="1462.3" font-size="20" fill="#999999" font-weight="normal" letter-spacing="0.4" text-anchor="start">4:00</text>
<text x="2024.5" y="1462.3" font-size="20" fill="#999999" font-weight="normal" letter-spacing="0.4" text-anchor="start">4:30</text>
<text x="2246.5" y="1462.3" font-size="20" fill="#999999" font-weight="normal" letter-spacing="0.4" text-anchor="start">5:00</text>
<text x="2340.5" y="1431.5" font-size="36" font-weight="bold" fill="#6c6c6c" textLength="52.5" lengthAdjust="spacing">4/1</text>
</g>
<path fill="#35607f" d="M2404 108h216v68h-216z"/>
<path fill="#c59d41" d="M2404 180h216v70h-216z"/>
<path fill="#f7f48f" d="M2404 254h216v70h-216zM2404 328h216v70h-216z"/>
<path fill="#846fdc" d="M2404 402h216v68h-216z"/>
<path fill="#69a043" d="M2404 474h216v844h-216z"/>
<path fill="#99a8fc" d="M2404 1322h216v34h-216z"/>
<path fill="#c59d41" d="M2404 1360h216v34h-216z"/>
<path fill="#99a8fc" d="M2404 1402h216v34h-216z"/>
<path fill="#232323" d="M2412 578h208v4h-208zM2412 652h208v4h-208zM2412 726h208v4h-208zM2412 948h208v4h-208zM2412 1022h208v4h-208zM2412 1096h208v4h-208zM2422 800h198v4h-198zM2422 874h198v4h-198zM2422 1170h198v4h-198zM2422 1244h198v4h-198zM2412 578h2v740h-2zM2422 800h2v148h-2zM2422 1170h2v148h-2z"/>
<g filter="url(#nf)" shape-rendering="geometricPrecision" style="font-family:'Liberation Sans',sans-serif" font-weight="bold" font-size="19">
<circle cx="2423" cy="125" r="12" fill="none" stroke="#dce6ee" stroke-width="1.8"/>
<path d="M2418 121h10M2418 125h10M2418 129h10" stroke="#dce6ee" stroke-width="1.8" fill="none"/>
<text x="2448.5" y="132" fill="#dce6ee" textLength="64.6" lengthAdjust="spacing">Drums</text>
<circle cx="2423" cy="197" r="12" fill="none" stroke="#2c230b" stroke-width="1.8"/>
<path d="M2416.5 194.3h13l-6.5 9z" fill="#2c230b"/>
<text x="2450" y="204" fill="#2c230b" textLength="96" lengthAdjust="spacing">Sidechain</text>
<circle cx="2423" cy="271" r="12" fill="none" stroke="#37361c" stroke-width="1.8"/>
<path d="M2416.5 268.3h13l-6.5 9z" fill="#37361c"/>
<text x="2450" y="278" fill="#37361c" textLength="86.4" lengthAdjust="spacing">mid bass</text>
<circle cx="2423" cy="345" r="12" fill="none" stroke="#37361c" stroke-width="1.8"/>
<path d="M2416.5 342.3h13l-6.5 9z" fill="#37361c"/>
<text x="2450" y="352" fill="#37361c" textLength="85.3" lengthAdjust="spacing">sub bass</text>
<circle cx="2423" cy="419" r="12" fill="none" stroke="#1e1938" stroke-width="1.8"/>
<path d="M2418 415h10M2418 419h10M2418 423h10" stroke="#1e1938" stroke-width="1.8" fill="none"/>
<text x="2448.3" y="426" fill="#1e1938" textLength="61.5" lengthAdjust="spacing">atmos</text>
<circle cx="2423" cy="491" r="12" fill="none" stroke="#18240b" stroke-width="1.8"/>
<path d="M2416 487h10M2420 491h10M2420 495h10" stroke="#18240b" stroke-width="1.8" fill="none"/>
<text x="2448.5" y="498" fill="#18240b" textLength="66.8" lengthAdjust="spacing">Synths</text>
<circle cx="2433" cy="599" r="12" fill="none" stroke="#18240b" stroke-width="1.8"/>
<path d="M2426.5 596.3h13l-6.5 9z" fill="#18240b"/>
<text x="2458.7" y="606" fill="#18240b" textLength="45.7" lengthAdjust="spacing">Lead</text>
<circle cx="2433" cy="673" r="12" fill="none" stroke="#18240b" stroke-width="1.8"/>
<path d="M2426.5 670.3h13l-6.5 9z" fill="#18240b"/>
<text x="2458.2" y="680" fill="#18240b" textLength="36.1" lengthAdjust="spacing">Arp</text>
<circle cx="2433" cy="747" r="12" fill="none" stroke="#18240b" stroke-width="1.8"/>
<path d="M2426 743h10M2430 747h10M2430 751h10" stroke="#18240b" stroke-width="1.8" fill="none"/>
<text x="2458.7" y="754" fill="#18240b" textLength="64.1" lengthAdjust="spacing">pianos</text>
<circle cx="2443" cy="821" r="12" fill="none" stroke="#18240b" stroke-width="1.8"/>
<path d="M2436.5 818.3h13l-6.5 9z" fill="#18240b"/>
<text x="2468.7" y="828" fill="#18240b" textLength="97.7" lengthAdjust="spacing">pianos (1)</text>
<circle cx="2443" cy="895" r="12" fill="none" stroke="#18240b" stroke-width="1.8"/>
<path d="M2436.5 892.3h13l-6.5 9z" fill="#18240b"/>
<text x="2468.7" y="902" fill="#18240b" textLength="97.7" lengthAdjust="spacing">pianos (2)</text>
<circle cx="2433" cy="969" r="12" fill="none" stroke="#18240b" stroke-width="1.8"/>
<path d="M2426.5 966.3h13l-6.5 9z" fill="#18240b"/>
<text x="2457.8" y="976" fill="#18240b" textLength="85" lengthAdjust="spacing">Soft Pad</text>
<circle cx="2433" cy="1043" r="12" fill="none" stroke="#18240b" stroke-width="1.8"/>
<path d="M2426.5 1040.3h13l-6.5 9z" fill="#18240b"/>
<text x="2457.8" y="1050" fill="#18240b" textLength="75.6" lengthAdjust="spacing">80s Pad</text>
<circle cx="2433" cy="1117" r="12" fill="none" stroke="#18240b" stroke-width="1.8"/>
<path d="M2426 1113h10M2430 1117h10M2430 1121h10" stroke="#18240b" stroke-width="1.8" fill="none"/>
<text x="2457.7" y="1124" fill="#18240b" textLength="72.2" lengthAdjust="spacing">Strings</text>
<circle cx="2443" cy="1191" r="12" fill="none" stroke="#18240b" stroke-width="1.8"/>
<path d="M2436.5 1188.3h13l-6.5 9z" fill="#18240b"/>
<text x="2468" y="1198" fill="#18240b" textLength="103.7" lengthAdjust="spacing">strings (1)</text>
<circle cx="2443" cy="1265" r="12" fill="none" stroke="#18240b" stroke-width="1.8"/>
<path d="M2436.5 1262.3h13l-6.5 9z" fill="#18240b"/>
<text x="2468" y="1272" fill="#18240b" textLength="103.7" lengthAdjust="spacing">strings (2)</text>
<circle cx="2423" cy="1339" r="12" fill="none" stroke="#1f2546" stroke-width="1.8"/>
<path d="M2418 1335h10M2418 1339h10M2418 1343h10" stroke="#1f2546" stroke-width="1.8" fill="none"/>
<text x="2448.5" y="1346" fill="#1f2546" textLength="30" lengthAdjust="spacing">fxs</text>
<circle cx="2423" cy="1377" r="12" fill="none" stroke="#2c230b" stroke-width="1.8"/>
<path d="M2418 1373h10M2418 1377h10M2418 1381h10" stroke="#2c230b" stroke-width="1.8" fill="none"/>
<text x="2448.5" y="1384" fill="#2c230b" textLength="33.6" lengthAdjust="spacing">vox</text>
<circle cx="2423" cy="1419" r="12" fill="none" stroke="#1f2546" stroke-width="1.8"/>
<path d="M2419.5 1412.5v13l10 -6.5z" fill="#1f2546"/>
<text x="2455.1" y="1426" fill="#1f2546" textLength="46.7" lengthAdjust="spacing">Main</text>
</g>
<g filter="url(#nf)" shape-rendering="geometricPrecision" style="font-family:'Liberation Sans',sans-serif">
<rect x="2411" y="35" width="56" height="24" rx="12" fill="#1f1f1f" stroke="#181818" stroke-width="2"/>
<text x="2425" y="54" font-size="19" fill="#c4c4c4" font-weight="bold" letter-spacing="0" text-anchor="start">Del</text>
<rect x="2491" y="35" width="44" height="24" fill="#1f1f1f" stroke="#181818" stroke-width="2" shape-rendering="crispEdges"/>
<path d="M2509 50.8L2517 43.4" stroke="#bdbdbd" stroke-width="2.2"/><circle cx="2509" cy="50.8" r="3.2" fill="#bdbdbd"/><circle cx="2517" cy="43.4" r="3.2" fill="#bdbdbd"/>
<rect x="2545" y="35" width="44" height="24" fill="#de714c" stroke="#0c0c0c" stroke-width="2" shape-rendering="crispEdges"/>
<rect x="2560.2" y="46" width="13.6" height="7.8" fill="#050505"/><path d="M2563 46.5v-1.8a4 4 0 0 1 8 0v1.8" fill="none" stroke="#050505" stroke-width="2.2"/>
<circle cx="2423" cy="83" r="12" fill="#1f1f1f" stroke="#181818" stroke-width="2"/>
<circle cx="2455" cy="83" r="12" fill="#1f1f1f" stroke="#181818" stroke-width="2"/>
<path d="M2416 83l8 -6v5h6v2h-6v5z" fill="#7a7a7a"/>
<path d="M2462 83l-8 -6v5h-6v2h6v5z" fill="#c4c4c4"/>
<rect x="2405" y="1449" width="28" height="24" fill="#f7b865" stroke="#1a1a1a" stroke-width="2" shape-rendering="crispEdges"/>
<rect x="2410" y="1458.5" width="2" height="5.5" fill="#0a0a0a"/>
<rect x="2414" y="1454.4" width="2" height="13.6" fill="#0a0a0a"/>
<rect x="2418" y="1452.2" width="2" height="17.8" fill="#0a0a0a"/>
<rect x="2422" y="1456.2" width="2" height="9.4" fill="#0a0a0a"/>
<rect x="2426" y="1458" width="2" height="5.7" fill="#0a0a0a"/>
<rect x="2441" y="1449" width="68" height="24" fill="#232323" stroke="#1a1a1a" stroke-width="2" shape-rendering="crispEdges"/>
<rect x="2442" y="1450" width="20" height="22" fill="#35748a" shape-rendering="crispEdges"/>
<text x="2449.5" y="1468" font-size="19.5" fill="#bdbdbd" font-weight="normal" letter-spacing="0.5" text-anchor="start">1.00x</text>
<rect x="2553" y="1449" width="28" height="24" fill="#232323" stroke="#1a1a1a" stroke-width="2" shape-rendering="crispEdges"/>
<text x="2567" y="1468" font-size="19" fill="#c4c4c4" font-weight="normal" letter-spacing="0" text-anchor="middle">H</text>
<rect x="2589" y="1449" width="28" height="24" fill="#f7b865" stroke="#1a1a1a" stroke-width="2" shape-rendering="crispEdges"/>
<text x="2604" y="1468" font-size="19" fill="#0a0a0a" font-weight="normal" letter-spacing="0" text-anchor="middle">W</text>
</g>
</svg>
</body></html>
